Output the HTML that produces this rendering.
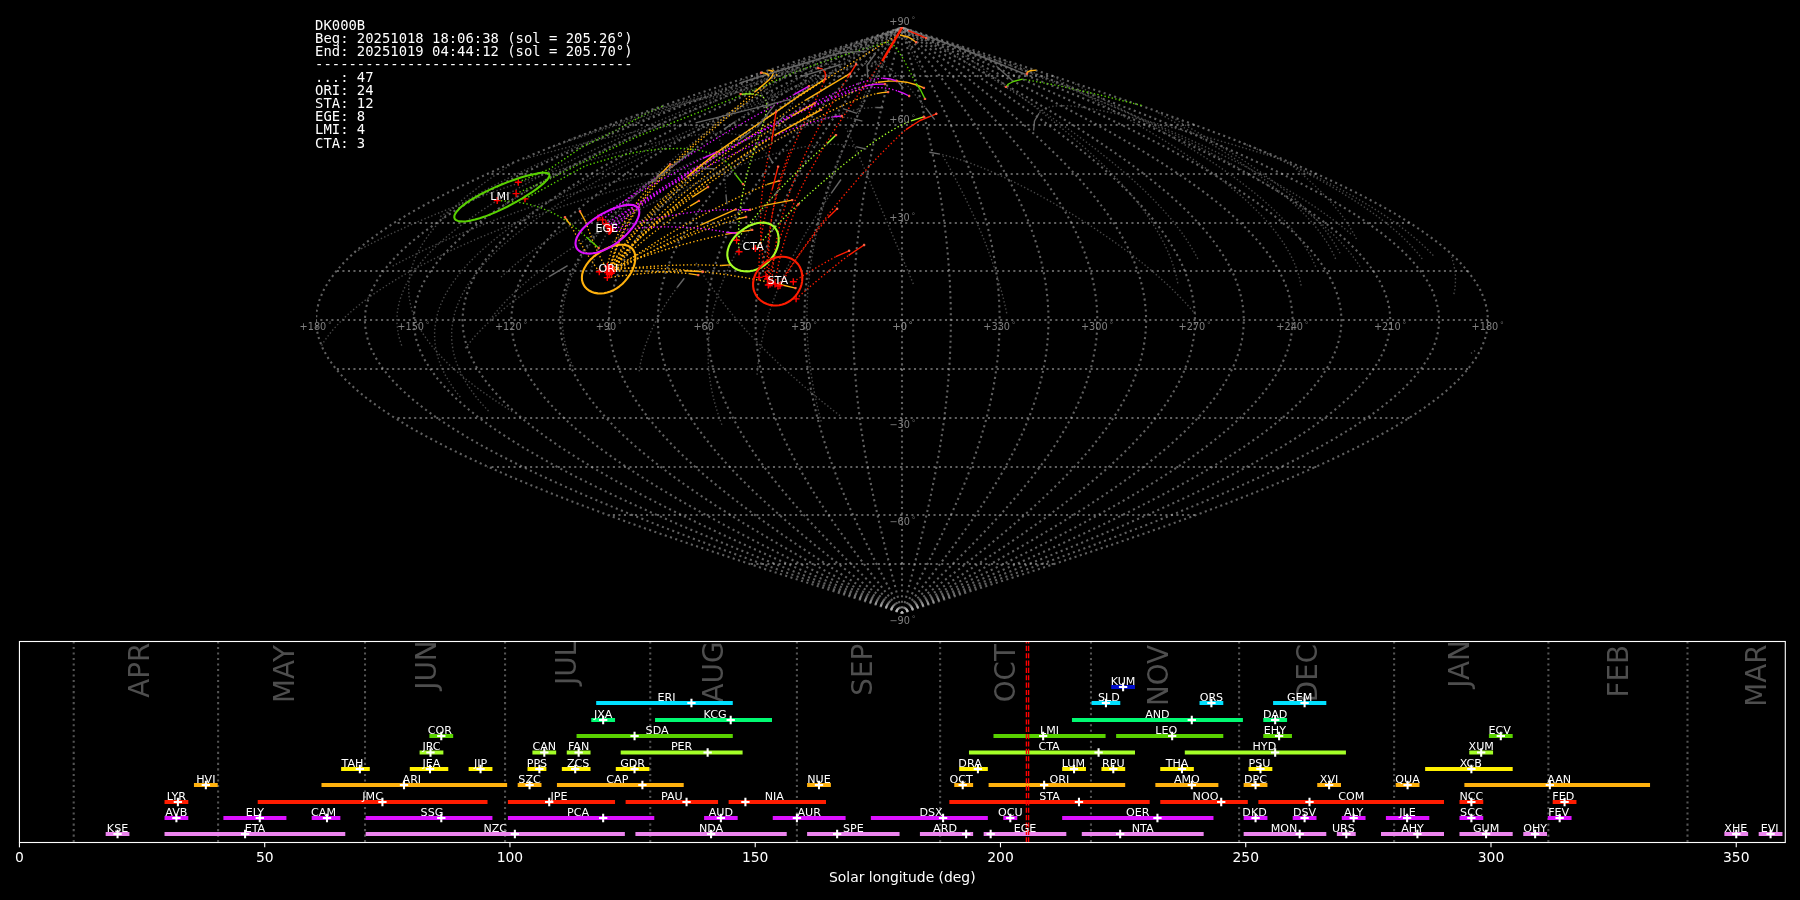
<!DOCTYPE html>
<html><head><meta charset="utf-8"><title>DK000B radiants</title>
<style>html,body{margin:0;padding:0;background:#000;overflow:hidden}svg{display:block;will-change:transform}</style></head>
<body>
<svg width="1800" height="900" viewBox="0 0 1800 900">
<rect width="1800" height="900" fill="#000"/>
<defs><clipPath id="cm"><rect x="315.99" y="26.90" width="1173.12" height="586.59"/></clipPath>
<clipPath id="ca"><rect x="19.45" y="641.50" width="1765.85" height="201.00"/></clipPath></defs>
<g clip-path="url(#cm)" fill="none">
<g stroke="#c0c0c0" stroke-opacity="0.5" stroke-width="2.083" stroke-dasharray="2.083 3.437">
<path d="M902.0 613.0 L902.0 603.2 L902.0 593.5 L902.0 583.7 L902.0 574.0 L902.0 564.2 L902.0 554.4 L902.0 544.7 L902.0 534.9 L902.0 525.2 L902.0 515.4 L902.0 505.6 L902.0 495.9 L902.0 486.1 L902.0 476.4 L902.0 466.6 L902.0 456.8 L902.0 447.1 L902.0 437.3 L902.0 427.6 L902.0 417.8 L902.0 408.0 L902.0 398.3 L902.0 388.5 L902.0 378.8 L902.0 369.0 L902.0 359.2 L902.0 349.5 L902.0 339.7 L902.0 330.0 L902.0 320.2 L902.0 310.4 L902.0 300.7 L902.0 290.9 L902.0 281.2 L902.0 271.4 L902.0 261.6 L902.0 251.9 L902.0 242.1 L902.0 232.4 L902.0 222.6 L902.0 212.8 L902.0 203.1 L902.0 193.3 L902.0 183.6 L902.0 173.8 L902.0 164.0 L902.0 154.3 L902.0 144.5 L902.0 134.8 L902.0 125.0 L902.0 115.2 L902.0 105.5 L902.0 95.7 L902.0 86.0 L902.0 76.2 L902.0 66.4 L902.0 56.7 L902.0 46.9 L902.0 37.2 L902.0 27.4" stroke-dashoffset="0.85"/>
<path d="M902.0 613.0 L899.4 603.2 L896.9 593.5 L894.4 583.7 L891.8 574.0 L889.4 564.2 L886.9 554.4 L884.5 544.7 L882.1 534.9 L879.8 525.2 L877.6 515.4 L875.4 505.6 L873.3 495.9 L871.3 486.1 L869.3 476.4 L867.5 466.6 L865.7 456.8 L864.0 447.1 L862.5 437.3 L861.0 427.6 L859.7 417.8 L858.5 408.0 L857.4 398.3 L856.4 388.5 L855.6 378.8 L854.8 369.0 L854.2 359.2 L853.8 349.5 L853.4 339.7 L853.2 330.0 L853.2 320.2 L853.2 310.4 L853.4 300.7 L853.8 290.9 L854.2 281.2 L854.8 271.4 L855.6 261.6 L856.4 251.9 L857.4 242.1 L858.5 232.4 L859.7 222.6 L861.0 212.8 L862.5 203.1 L864.0 193.3 L865.7 183.6 L867.5 173.8 L869.3 164.0 L871.3 154.3 L873.3 144.5 L875.4 134.8 L877.6 125.0 L879.8 115.2 L882.1 105.5 L884.5 95.7 L886.9 86.0 L889.4 76.2 L891.8 66.4 L894.4 56.7 L896.9 46.9 L899.4 37.2 L902.0 27.4" stroke-dashoffset="0.85"/>
<path d="M902.0 613.0 L896.9 603.2 L891.8 593.5 L886.7 583.7 L881.7 574.0 L876.7 564.2 L871.8 554.4 L867.0 544.7 L862.3 534.9 L857.7 525.2 L853.2 515.4 L848.8 505.6 L844.6 495.9 L840.5 486.1 L836.6 476.4 L832.9 466.6 L829.4 456.8 L826.1 447.1 L823.0 437.3 L820.1 427.6 L817.4 417.8 L815.0 408.0 L812.8 398.3 L810.8 388.5 L809.1 378.8 L807.7 369.0 L806.5 359.2 L805.5 349.5 L804.9 339.7 L804.5 330.0 L804.3 320.2 L804.5 310.4 L804.9 300.7 L805.5 290.9 L806.5 281.2 L807.7 271.4 L809.1 261.6 L810.8 251.9 L812.8 242.1 L815.0 232.4 L817.4 222.6 L820.1 212.8 L823.0 203.1 L826.1 193.3 L829.4 183.6 L832.9 173.8 L836.6 164.0 L840.5 154.3 L844.6 144.5 L848.8 134.8 L853.2 125.0 L857.7 115.2 L862.3 105.5 L867.0 95.7 L871.8 86.0 L876.7 76.2 L881.7 66.4 L886.7 56.7 L891.8 46.9 L896.9 37.2 L902.0 27.4" stroke-dashoffset="0.85"/>
<path d="M902.0 613.0 L894.3 603.2 L886.7 593.5 L879.1 583.7 L871.5 574.0 L864.1 564.2 L856.7 554.4 L849.5 544.7 L842.4 534.9 L835.5 525.2 L828.7 515.4 L822.2 505.6 L815.9 495.9 L809.8 486.1 L804.0 476.4 L798.4 466.6 L793.1 456.8 L788.1 447.1 L783.5 437.3 L779.1 427.6 L775.1 417.8 L771.5 408.0 L768.2 398.3 L765.2 388.5 L762.7 378.8 L760.5 369.0 L758.7 359.2 L757.3 349.5 L756.3 339.7 L755.7 330.0 L755.5 320.2 L755.7 310.4 L756.3 300.7 L757.3 290.9 L758.7 281.2 L760.5 271.4 L762.7 261.6 L765.2 251.9 L768.2 242.1 L771.5 232.4 L775.1 222.6 L779.1 212.8 L783.5 203.1 L788.1 193.3 L793.1 183.6 L798.4 173.8 L804.0 164.0 L809.8 154.3 L815.9 144.5 L822.2 134.8 L828.7 125.0 L835.5 115.2 L842.4 105.5 L849.5 95.7 L856.7 86.0 L864.1 76.2 L871.5 66.4 L879.1 56.7 L886.7 46.9 L894.3 37.2 L902.0 27.4" stroke-dashoffset="0.85"/>
<path d="M902.0 613.0 L891.8 603.2 L881.6 593.5 L871.4 583.7 L861.4 574.0 L851.4 564.2 L841.6 554.4 L832.0 544.7 L822.5 534.9 L813.3 525.2 L804.3 515.4 L795.6 505.6 L787.2 495.9 L779.1 486.1 L771.3 476.4 L763.9 466.6 L756.8 456.8 L750.2 447.1 L744.0 437.3 L738.2 427.6 L732.8 417.8 L728.0 408.0 L723.6 398.3 L719.6 388.5 L716.2 378.8 L713.3 369.0 L710.9 359.2 L709.1 349.5 L707.7 339.7 L706.9 330.0 L706.7 320.2 L706.9 310.4 L707.7 300.7 L709.1 290.9 L710.9 281.2 L713.3 271.4 L716.2 261.6 L719.6 251.9 L723.6 242.1 L728.0 232.4 L732.8 222.6 L738.2 212.8 L744.0 203.1 L750.2 193.3 L756.8 183.6 L763.9 173.8 L771.3 164.0 L779.1 154.3 L787.2 144.5 L795.6 134.8 L804.3 125.0 L813.3 115.2 L822.5 105.5 L832.0 95.7 L841.6 86.0 L851.4 76.2 L861.4 66.4 L871.4 56.7 L881.6 46.9 L891.8 37.2 L902.0 27.4" stroke-dashoffset="0.85"/>
<path d="M902.0 613.0 L889.2 603.2 L876.5 593.5 L863.8 583.7 L851.2 574.0 L838.8 564.2 L826.5 554.4 L814.5 544.7 L802.7 534.9 L791.1 525.2 L779.9 515.4 L769.0 505.6 L758.5 495.9 L748.3 486.1 L738.6 476.4 L729.3 466.6 L720.5 456.8 L712.2 447.1 L704.5 437.3 L697.2 427.6 L690.5 417.8 L684.4 408.0 L678.9 398.3 L674.0 388.5 L669.8 378.8 L666.1 369.0 L663.2 359.2 L660.8 349.5 L659.2 339.7 L658.2 330.0 L657.8 320.2 L658.2 310.4 L659.2 300.7 L660.8 290.9 L663.2 281.2 L666.1 271.4 L669.8 261.6 L674.0 251.9 L678.9 242.1 L684.4 232.4 L690.5 222.6 L697.2 212.8 L704.5 203.1 L712.2 193.3 L720.5 183.6 L729.3 173.8 L738.6 164.0 L748.3 154.3 L758.5 144.5 L769.0 134.8 L779.9 125.0 L791.1 115.2 L802.7 105.5 L814.5 95.7 L826.5 86.0 L838.8 76.2 L851.2 66.4 L863.8 56.7 L876.5 46.9 L889.2 37.2 L902.0 27.4" stroke-dashoffset="0.85"/>
<path d="M902.0 613.0 L886.7 603.2 L871.4 593.5 L856.2 583.7 L841.1 574.0 L826.2 564.2 L811.5 554.4 L797.0 544.7 L782.8 534.9 L769.0 525.2 L755.5 515.4 L742.4 505.6 L729.8 495.9 L717.6 486.1 L705.9 476.4 L694.8 466.6 L684.3 456.8 L674.3 447.1 L665.0 437.3 L656.3 427.6 L648.3 417.8 L640.9 408.0 L634.3 398.3 L628.5 388.5 L623.3 378.8 L619.0 369.0 L615.4 359.2 L612.6 349.5 L610.6 339.7 L609.4 330.0 L609.0 320.2 L609.4 310.4 L610.6 300.7 L612.6 290.9 L615.4 281.2 L619.0 271.4 L623.3 261.6 L628.5 251.9 L634.3 242.1 L640.9 232.4 L648.3 222.6 L656.3 212.8 L665.0 203.1 L674.3 193.3 L684.3 183.6 L694.8 173.8 L705.9 164.0 L717.6 154.3 L729.8 144.5 L742.4 134.8 L755.5 125.0 L769.0 115.2 L782.8 105.5 L797.0 95.7 L811.5 86.0 L826.2 76.2 L841.1 66.4 L856.2 56.7 L871.4 46.9 L886.7 37.2 L902.0 27.4" stroke-dashoffset="0.85"/>
<path d="M902.0 613.0 L884.1 603.2 L866.3 593.5 L848.5 583.7 L830.9 574.0 L813.5 564.2 L796.4 554.4 L779.5 544.7 L763.0 534.9 L746.8 525.2 L731.1 515.4 L715.8 505.6 L701.1 495.9 L686.9 486.1 L673.3 476.4 L660.3 466.6 L648.0 456.8 L636.3 447.1 L625.4 437.3 L615.3 427.6 L606.0 417.8 L597.4 408.0 L589.7 398.3 L582.9 388.5 L576.9 378.8 L571.8 369.0 L567.6 359.2 L564.4 349.5 L562.0 339.7 L560.6 330.0 L560.2 320.2 L560.6 310.4 L562.0 300.7 L564.4 290.9 L567.6 281.2 L571.8 271.4 L576.9 261.6 L582.9 251.9 L589.7 242.1 L597.4 232.4 L606.0 222.6 L615.3 212.8 L625.4 203.1 L636.3 193.3 L648.0 183.6 L660.3 173.8 L673.3 164.0 L686.9 154.3 L701.1 144.5 L715.8 134.8 L731.1 125.0 L746.8 115.2 L763.0 105.5 L779.5 95.7 L796.4 86.0 L813.5 76.2 L830.9 66.4 L848.5 56.7 L866.3 46.9 L884.1 37.2 L902.0 27.4" stroke-dashoffset="0.85"/>
<path d="M902.0 613.0 L881.6 603.2 L861.2 593.5 L840.9 583.7 L820.8 574.0 L800.9 564.2 L781.3 554.4 L762.0 544.7 L743.1 534.9 L724.6 525.2 L706.7 515.4 L689.2 505.6 L672.4 495.9 L656.1 486.1 L640.6 476.4 L625.8 466.6 L611.7 456.8 L598.4 447.1 L585.9 437.3 L574.4 427.6 L563.7 417.8 L553.9 408.0 L545.1 398.3 L537.3 388.5 L530.4 378.8 L524.6 369.0 L519.9 359.2 L516.1 349.5 L513.5 339.7 L511.9 330.0 L511.3 320.2 L511.9 310.4 L513.5 300.7 L516.1 290.9 L519.9 281.2 L524.6 271.4 L530.4 261.6 L537.3 251.9 L545.1 242.1 L553.9 232.4 L563.7 222.6 L574.4 212.8 L585.9 203.1 L598.4 193.3 L611.7 183.6 L625.8 173.8 L640.6 164.0 L656.1 154.3 L672.4 144.5 L689.2 134.8 L706.7 125.0 L724.6 115.2 L743.1 105.5 L762.0 95.7 L781.3 86.0 L800.9 76.2 L820.8 66.4 L840.9 56.7 L861.2 46.9 L881.6 37.2 L902.0 27.4" stroke-dashoffset="0.85"/>
<path d="M902.0 613.0 L879.0 603.2 L856.1 593.5 L833.2 583.7 L810.6 574.0 L788.2 564.2 L766.2 554.4 L744.5 544.7 L723.2 534.9 L702.5 525.2 L682.2 515.4 L662.6 505.6 L643.7 495.9 L625.4 486.1 L607.9 476.4 L591.2 466.6 L575.4 456.8 L560.4 447.1 L546.4 437.3 L533.4 427.6 L521.4 417.8 L510.4 408.0 L500.5 398.3 L491.7 388.5 L484.0 378.8 L477.5 369.0 L472.1 359.2 L467.9 349.5 L464.9 339.7 L463.1 330.0 L462.5 320.2 L463.1 310.4 L464.9 300.7 L467.9 290.9 L472.1 281.2 L477.5 271.4 L484.0 261.6 L491.7 251.9 L500.5 242.1 L510.4 232.4 L521.4 222.6 L533.4 212.8 L546.4 203.1 L560.4 193.3 L575.4 183.6 L591.2 173.8 L607.9 164.0 L625.4 154.3 L643.7 144.5 L662.6 134.8 L682.2 125.0 L702.5 115.2 L723.2 105.5 L744.5 95.7 L766.2 86.0 L788.2 76.2 L810.6 66.4 L833.2 56.7 L856.1 46.9 L879.0 37.2 L902.0 27.4" stroke-dashoffset="0.85"/>
<path d="M902.0 613.0 L876.4 603.2 L851.0 593.5 L825.6 583.7 L800.5 574.0 L775.6 564.2 L751.1 554.4 L727.0 544.7 L703.4 534.9 L680.3 525.2 L657.8 515.4 L636.0 505.6 L615.0 495.9 L594.7 486.1 L575.2 476.4 L556.7 466.6 L539.1 456.8 L522.5 447.1 L506.9 437.3 L492.4 427.6 L479.1 417.8 L466.9 408.0 L455.9 398.3 L446.1 388.5 L437.6 378.8 L430.3 369.0 L424.3 359.2 L419.7 349.5 L416.3 339.7 L414.3 330.0 L413.7 320.2 L414.3 310.4 L416.3 300.7 L419.7 290.9 L424.3 281.2 L430.3 271.4 L437.6 261.6 L446.1 251.9 L455.9 242.1 L466.9 232.4 L479.1 222.6 L492.4 212.8 L506.9 203.1 L522.5 193.3 L539.1 183.6 L556.7 173.8 L575.2 164.0 L594.7 154.3 L615.0 144.5 L636.0 134.8 L657.8 125.0 L680.3 115.2 L703.4 105.5 L727.0 95.7 L751.1 86.0 L775.6 76.2 L800.5 66.4 L825.6 56.7 L851.0 46.9 L876.4 37.2 L902.0 27.4" stroke-dashoffset="0.85"/>
<path d="M902.0 613.0 L873.9 603.2 L845.9 593.5 L818.0 583.7 L790.3 574.0 L763.0 564.2 L736.0 554.4 L709.5 544.7 L683.5 534.9 L658.1 525.2 L633.4 515.4 L609.4 505.6 L586.3 495.9 L563.9 486.1 L542.6 476.4 L522.2 466.6 L502.8 456.8 L484.5 447.1 L467.4 437.3 L451.5 427.6 L436.8 417.8 L423.4 408.0 L411.3 398.3 L400.5 388.5 L391.1 378.8 L383.1 369.0 L376.6 359.2 L371.4 349.5 L367.8 339.7 L365.6 330.0 L364.8 320.2 L365.6 310.4 L367.8 300.7 L371.4 290.9 L376.6 281.2 L383.1 271.4 L391.1 261.6 L400.5 251.9 L411.3 242.1 L423.4 232.4 L436.8 222.6 L451.5 212.8 L467.4 203.1 L484.5 193.3 L502.8 183.6 L522.2 173.8 L542.6 164.0 L563.9 154.3 L586.3 144.5 L609.4 134.8 L633.4 125.0 L658.1 115.2 L683.5 105.5 L709.5 95.7 L736.0 86.0 L763.0 76.2 L790.3 66.4 L818.0 56.7 L845.9 46.9 L873.9 37.2 L902.0 27.4" stroke-dashoffset="0.85"/>
<path d="M902.0 613.0 L871.3 603.2 L840.7 593.5 L810.3 583.7 L780.2 574.0 L750.3 564.2 L720.9 554.4 L692.0 544.7 L663.6 534.9 L636.0 525.2 L609.0 515.4 L582.8 505.6 L557.6 495.9 L533.2 486.1 L509.9 476.4 L487.6 466.6 L466.5 456.8 L446.6 447.1 L427.9 437.3 L410.5 427.6 L394.5 417.8 L379.9 408.0 L366.7 398.3 L354.9 388.5 L344.7 378.8 L336.0 369.0 L328.8 359.2 L323.2 349.5 L319.2 339.7 L316.8 330.0 L316.0 320.2 L316.8 310.4 L319.2 300.7 L323.2 290.9 L328.8 281.2 L336.0 271.4 L344.7 261.6 L354.9 251.9 L366.7 242.1 L379.9 232.4 L394.5 222.6 L410.5 212.8 L427.9 203.1 L446.6 193.3 L466.5 183.6 L487.6 173.8 L509.9 164.0 L533.2 154.3 L557.6 144.5 L582.8 134.8 L609.0 125.0 L636.0 115.2 L663.6 105.5 L692.0 95.7 L720.9 86.0 L750.3 76.2 L780.2 66.4 L810.3 56.7 L840.7 46.9 L871.3 37.2 L902.0 27.4" stroke-dashoffset="0.85"/>
<path d="M902.0 613.0 L932.7 603.2 L963.3 593.5 L993.7 583.7 L1023.8 574.0 L1053.7 564.2 L1083.1 554.4 L1112.0 544.7 L1140.4 534.9 L1168.0 525.2 L1195.0 515.4 L1221.2 505.6 L1246.4 495.9 L1270.8 486.1 L1294.1 476.4 L1316.4 466.6 L1337.5 456.8 L1357.4 447.1 L1376.1 437.3 L1393.5 427.6 L1409.5 417.8 L1424.1 408.0 L1437.3 398.3 L1449.1 388.5 L1459.3 378.8 L1468.0 369.0 L1475.2 359.2 L1480.8 349.5 L1484.8 339.7 L1487.2 330.0 L1488.0 320.2 L1487.2 310.4 L1484.8 300.7 L1480.8 290.9 L1475.2 281.2 L1468.0 271.4 L1459.3 261.6 L1449.1 251.9 L1437.3 242.1 L1424.1 232.4 L1409.5 222.6 L1393.5 212.8 L1376.1 203.1 L1357.4 193.3 L1337.5 183.6 L1316.4 173.8 L1294.1 164.0 L1270.8 154.3 L1246.4 144.5 L1221.2 134.8 L1195.0 125.0 L1168.0 115.2 L1140.4 105.5 L1112.0 95.7 L1083.1 86.0 L1053.7 76.2 L1023.8 66.4 L993.7 56.7 L963.3 46.9 L932.7 37.2 L902.0 27.4" stroke-dashoffset="0.85"/>
<path d="M902.0 613.0 L930.1 603.2 L958.1 593.5 L986.0 583.7 L1013.7 574.0 L1041.0 564.2 L1068.0 554.4 L1094.5 544.7 L1120.5 534.9 L1145.9 525.2 L1170.6 515.4 L1194.6 505.6 L1217.7 495.9 L1240.1 486.1 L1261.4 476.4 L1281.8 466.6 L1301.2 456.8 L1319.5 447.1 L1336.6 437.3 L1352.5 427.6 L1367.2 417.8 L1380.6 408.0 L1392.7 398.3 L1403.5 388.5 L1412.9 378.8 L1420.9 369.0 L1427.4 359.2 L1432.6 349.5 L1436.2 339.7 L1438.4 330.0 L1439.2 320.2 L1438.4 310.4 L1436.2 300.7 L1432.6 290.9 L1427.4 281.2 L1420.9 271.4 L1412.9 261.6 L1403.5 251.9 L1392.7 242.1 L1380.6 232.4 L1367.2 222.6 L1352.5 212.8 L1336.6 203.1 L1319.5 193.3 L1301.2 183.6 L1281.8 173.8 L1261.4 164.0 L1240.1 154.3 L1217.7 144.5 L1194.6 134.8 L1170.6 125.0 L1145.9 115.2 L1120.5 105.5 L1094.5 95.7 L1068.0 86.0 L1041.0 76.2 L1013.7 66.4 L986.0 56.7 L958.1 46.9 L930.1 37.2 L902.0 27.4" stroke-dashoffset="0.85"/>
<path d="M902.0 613.0 L927.6 603.2 L953.0 593.5 L978.4 583.7 L1003.5 574.0 L1028.4 564.2 L1052.9 554.4 L1077.0 544.7 L1100.6 534.9 L1123.7 525.2 L1146.2 515.4 L1168.0 505.6 L1189.0 495.9 L1209.3 486.1 L1228.8 476.4 L1247.3 466.6 L1264.9 456.8 L1281.5 447.1 L1297.1 437.3 L1311.6 427.6 L1324.9 417.8 L1337.1 408.0 L1348.1 398.3 L1357.9 388.5 L1366.4 378.8 L1373.7 369.0 L1379.7 359.2 L1384.3 349.5 L1387.7 339.7 L1389.7 330.0 L1390.3 320.2 L1389.7 310.4 L1387.7 300.7 L1384.3 290.9 L1379.7 281.2 L1373.7 271.4 L1366.4 261.6 L1357.9 251.9 L1348.1 242.1 L1337.1 232.4 L1324.9 222.6 L1311.6 212.8 L1297.1 203.1 L1281.5 193.3 L1264.9 183.6 L1247.3 173.8 L1228.8 164.0 L1209.3 154.3 L1189.0 144.5 L1168.0 134.8 L1146.2 125.0 L1123.7 115.2 L1100.6 105.5 L1077.0 95.7 L1052.9 86.0 L1028.4 76.2 L1003.5 66.4 L978.4 56.7 L953.0 46.9 L927.6 37.2 L902.0 27.4" stroke-dashoffset="0.85"/>
<path d="M902.0 613.0 L925.0 603.2 L947.9 593.5 L970.8 583.7 L993.4 574.0 L1015.8 564.2 L1037.8 554.4 L1059.5 544.7 L1080.8 534.9 L1101.5 525.2 L1121.8 515.4 L1141.4 505.6 L1160.3 495.9 L1178.6 486.1 L1196.1 476.4 L1212.8 466.6 L1228.6 456.8 L1243.6 447.1 L1257.6 437.3 L1270.6 427.6 L1282.6 417.8 L1293.6 408.0 L1303.5 398.3 L1312.3 388.5 L1320.0 378.8 L1326.5 369.0 L1331.9 359.2 L1336.1 349.5 L1339.1 339.7 L1340.9 330.0 L1341.5 320.2 L1340.9 310.4 L1339.1 300.7 L1336.1 290.9 L1331.9 281.2 L1326.5 271.4 L1320.0 261.6 L1312.3 251.9 L1303.5 242.1 L1293.6 232.4 L1282.6 222.6 L1270.6 212.8 L1257.6 203.1 L1243.6 193.3 L1228.6 183.6 L1212.8 173.8 L1196.1 164.0 L1178.6 154.3 L1160.3 144.5 L1141.4 134.8 L1121.8 125.0 L1101.5 115.2 L1080.8 105.5 L1059.5 95.7 L1037.8 86.0 L1015.8 76.2 L993.4 66.4 L970.8 56.7 L947.9 46.9 L925.0 37.2 L902.0 27.4" stroke-dashoffset="0.85"/>
<path d="M902.0 613.0 L922.4 603.2 L942.8 593.5 L963.1 583.7 L983.2 574.0 L1003.1 564.2 L1022.7 554.4 L1042.0 544.7 L1060.9 534.9 L1079.4 525.2 L1097.3 515.4 L1114.8 505.6 L1131.6 495.9 L1147.9 486.1 L1163.4 476.4 L1178.2 466.6 L1192.3 456.8 L1205.6 447.1 L1218.1 437.3 L1229.6 427.6 L1240.3 417.8 L1250.1 408.0 L1258.9 398.3 L1266.7 388.5 L1273.6 378.8 L1279.4 369.0 L1284.1 359.2 L1287.9 349.5 L1290.5 339.7 L1292.1 330.0 L1292.7 320.2 L1292.1 310.4 L1290.5 300.7 L1287.9 290.9 L1284.1 281.2 L1279.4 271.4 L1273.6 261.6 L1266.7 251.9 L1258.9 242.1 L1250.1 232.4 L1240.3 222.6 L1229.6 212.8 L1218.1 203.1 L1205.6 193.3 L1192.3 183.6 L1178.2 173.8 L1163.4 164.0 L1147.9 154.3 L1131.6 144.5 L1114.8 134.8 L1097.3 125.0 L1079.4 115.2 L1060.9 105.5 L1042.0 95.7 L1022.7 86.0 L1003.1 76.2 L983.2 66.4 L963.1 56.7 L942.8 46.9 L922.4 37.2 L902.0 27.4" stroke-dashoffset="0.85"/>
<path d="M902.0 613.0 L919.9 603.2 L937.7 593.5 L955.5 583.7 L973.1 574.0 L990.5 564.2 L1007.6 554.4 L1024.5 544.7 L1041.0 534.9 L1057.2 525.2 L1072.9 515.4 L1088.2 505.6 L1102.9 495.9 L1117.1 486.1 L1130.7 476.4 L1143.7 466.6 L1156.0 456.8 L1167.7 447.1 L1178.6 437.3 L1188.7 427.6 L1198.0 417.8 L1206.6 408.0 L1214.3 398.3 L1221.1 388.5 L1227.1 378.8 L1232.2 369.0 L1236.4 359.2 L1239.6 349.5 L1242.0 339.7 L1243.4 330.0 L1243.8 320.2 L1243.4 310.4 L1242.0 300.7 L1239.6 290.9 L1236.4 281.2 L1232.2 271.4 L1227.1 261.6 L1221.1 251.9 L1214.3 242.1 L1206.6 232.4 L1198.0 222.6 L1188.7 212.8 L1178.6 203.1 L1167.7 193.3 L1156.0 183.6 L1143.7 173.8 L1130.7 164.0 L1117.1 154.3 L1102.9 144.5 L1088.2 134.8 L1072.9 125.0 L1057.2 115.2 L1041.0 105.5 L1024.5 95.7 L1007.6 86.0 L990.5 76.2 L973.1 66.4 L955.5 56.7 L937.7 46.9 L919.9 37.2 L902.0 27.4" stroke-dashoffset="0.85"/>
<path d="M902.0 613.0 L917.3 603.2 L932.6 593.5 L947.8 583.7 L962.9 574.0 L977.8 564.2 L992.5 554.4 L1007.0 544.7 L1021.2 534.9 L1035.0 525.2 L1048.5 515.4 L1061.6 505.6 L1074.2 495.9 L1086.4 486.1 L1098.1 476.4 L1109.2 466.6 L1119.7 456.8 L1129.7 447.1 L1139.0 437.3 L1147.7 427.6 L1155.7 417.8 L1163.1 408.0 L1169.7 398.3 L1175.5 388.5 L1180.7 378.8 L1185.0 369.0 L1188.6 359.2 L1191.4 349.5 L1193.4 339.7 L1194.6 330.0 L1195.0 320.2 L1194.6 310.4 L1193.4 300.7 L1191.4 290.9 L1188.6 281.2 L1185.0 271.4 L1180.7 261.6 L1175.5 251.9 L1169.7 242.1 L1163.1 232.4 L1155.7 222.6 L1147.7 212.8 L1139.0 203.1 L1129.7 193.3 L1119.7 183.6 L1109.2 173.8 L1098.1 164.0 L1086.4 154.3 L1074.2 144.5 L1061.6 134.8 L1048.5 125.0 L1035.0 115.2 L1021.2 105.5 L1007.0 95.7 L992.5 86.0 L977.8 76.2 L962.9 66.4 L947.8 56.7 L932.6 46.9 L917.3 37.2 L902.0 27.4" stroke-dashoffset="0.85"/>
<path d="M902.0 613.0 L914.8 603.2 L927.5 593.5 L940.2 583.7 L952.8 574.0 L965.2 564.2 L977.5 554.4 L989.5 544.7 L1001.3 534.9 L1012.9 525.2 L1024.1 515.4 L1035.0 505.6 L1045.5 495.9 L1055.7 486.1 L1065.4 476.4 L1074.7 466.6 L1083.5 456.8 L1091.8 447.1 L1099.5 437.3 L1106.8 427.6 L1113.5 417.8 L1119.6 408.0 L1125.1 398.3 L1130.0 388.5 L1134.2 378.8 L1137.9 369.0 L1140.8 359.2 L1143.2 349.5 L1144.8 339.7 L1145.8 330.0 L1146.2 320.2 L1145.8 310.4 L1144.8 300.7 L1143.2 290.9 L1140.8 281.2 L1137.9 271.4 L1134.2 261.6 L1130.0 251.9 L1125.1 242.1 L1119.6 232.4 L1113.5 222.6 L1106.8 212.8 L1099.5 203.1 L1091.8 193.3 L1083.5 183.6 L1074.7 173.8 L1065.4 164.0 L1055.7 154.3 L1045.5 144.5 L1035.0 134.8 L1024.1 125.0 L1012.9 115.2 L1001.3 105.5 L989.5 95.7 L977.5 86.0 L965.2 76.2 L952.8 66.4 L940.2 56.7 L927.5 46.9 L914.8 37.2 L902.0 27.4" stroke-dashoffset="0.85"/>
<path d="M902.0 613.0 L912.2 603.2 L922.4 593.5 L932.6 583.7 L942.6 574.0 L952.6 564.2 L962.4 554.4 L972.0 544.7 L981.5 534.9 L990.7 525.2 L999.7 515.4 L1008.4 505.6 L1016.8 495.9 L1024.9 486.1 L1032.7 476.4 L1040.1 466.6 L1047.2 456.8 L1053.8 447.1 L1060.0 437.3 L1065.8 427.6 L1071.2 417.8 L1076.0 408.0 L1080.4 398.3 L1084.4 388.5 L1087.8 378.8 L1090.7 369.0 L1093.1 359.2 L1094.9 349.5 L1096.3 339.7 L1097.1 330.0 L1097.3 320.2 L1097.1 310.4 L1096.3 300.7 L1094.9 290.9 L1093.1 281.2 L1090.7 271.4 L1087.8 261.6 L1084.4 251.9 L1080.4 242.1 L1076.0 232.4 L1071.2 222.6 L1065.8 212.8 L1060.0 203.1 L1053.8 193.3 L1047.2 183.6 L1040.1 173.8 L1032.7 164.0 L1024.9 154.3 L1016.8 144.5 L1008.4 134.8 L999.7 125.0 L990.7 115.2 L981.5 105.5 L972.0 95.7 L962.4 86.0 L952.6 76.2 L942.6 66.4 L932.6 56.7 L922.4 46.9 L912.2 37.2 L902.0 27.4" stroke-dashoffset="0.85"/>
<path d="M902.0 613.0 L909.7 603.2 L917.3 593.5 L924.9 583.7 L932.5 574.0 L939.9 564.2 L947.3 554.4 L954.5 544.7 L961.6 534.9 L968.5 525.2 L975.3 515.4 L981.8 505.6 L988.1 495.9 L994.2 486.1 L1000.0 476.4 L1005.6 466.6 L1010.9 456.8 L1015.9 447.1 L1020.5 437.3 L1024.9 427.6 L1028.9 417.8 L1032.5 408.0 L1035.8 398.3 L1038.8 388.5 L1041.3 378.8 L1043.5 369.0 L1045.3 359.2 L1046.7 349.5 L1047.7 339.7 L1048.3 330.0 L1048.5 320.2 L1048.3 310.4 L1047.7 300.7 L1046.7 290.9 L1045.3 281.2 L1043.5 271.4 L1041.3 261.6 L1038.8 251.9 L1035.8 242.1 L1032.5 232.4 L1028.9 222.6 L1024.9 212.8 L1020.5 203.1 L1015.9 193.3 L1010.9 183.6 L1005.6 173.8 L1000.0 164.0 L994.2 154.3 L988.1 144.5 L981.8 134.8 L975.3 125.0 L968.5 115.2 L961.6 105.5 L954.5 95.7 L947.3 86.0 L939.9 76.2 L932.5 66.4 L924.9 56.7 L917.3 46.9 L909.7 37.2 L902.0 27.4" stroke-dashoffset="0.85"/>
<path d="M902.0 613.0 L907.1 603.2 L912.2 593.5 L917.3 583.7 L922.3 574.0 L927.3 564.2 L932.2 554.4 L937.0 544.7 L941.7 534.9 L946.3 525.2 L950.8 515.4 L955.2 505.6 L959.4 495.9 L963.5 486.1 L967.4 476.4 L971.1 466.6 L974.6 456.8 L977.9 447.1 L981.0 437.3 L983.9 427.6 L986.6 417.8 L989.0 408.0 L991.2 398.3 L993.2 388.5 L994.9 378.8 L996.3 369.0 L997.5 359.2 L998.5 349.5 L999.1 339.7 L999.5 330.0 L999.7 320.2 L999.5 310.4 L999.1 300.7 L998.5 290.9 L997.5 281.2 L996.3 271.4 L994.9 261.6 L993.2 251.9 L991.2 242.1 L989.0 232.4 L986.6 222.6 L983.9 212.8 L981.0 203.1 L977.9 193.3 L974.6 183.6 L971.1 173.8 L967.4 164.0 L963.5 154.3 L959.4 144.5 L955.2 134.8 L950.8 125.0 L946.3 115.2 L941.7 105.5 L937.0 95.7 L932.2 86.0 L927.3 76.2 L922.3 66.4 L917.3 56.7 L912.2 46.9 L907.1 37.2 L902.0 27.4" stroke-dashoffset="0.85"/>
<path d="M902.0 613.0 L904.6 603.2 L907.1 593.5 L909.6 583.7 L912.2 574.0 L914.6 564.2 L917.1 554.4 L919.5 544.7 L921.9 534.9 L924.2 525.2 L926.4 515.4 L928.6 505.6 L930.7 495.9 L932.7 486.1 L934.7 476.4 L936.5 466.6 L938.3 456.8 L940.0 447.1 L941.5 437.3 L943.0 427.6 L944.3 417.8 L945.5 408.0 L946.6 398.3 L947.6 388.5 L948.4 378.8 L949.2 369.0 L949.8 359.2 L950.2 349.5 L950.6 339.7 L950.8 330.0 L950.8 320.2 L950.8 310.4 L950.6 300.7 L950.2 290.9 L949.8 281.2 L949.2 271.4 L948.4 261.6 L947.6 251.9 L946.6 242.1 L945.5 232.4 L944.3 222.6 L943.0 212.8 L941.5 203.1 L940.0 193.3 L938.3 183.6 L936.5 173.8 L934.7 164.0 L932.7 154.3 L930.7 144.5 L928.6 134.8 L926.4 125.0 L924.2 115.2 L921.9 105.5 L919.5 95.7 L917.1 86.0 L914.6 76.2 L912.2 66.4 L909.6 56.7 L907.1 46.9 L904.6 37.2 L902.0 27.4" stroke-dashoffset="0.85"/>
<path d="M902.00 564.00 L750.33 564.00"/>
<path d="M1053.67 564.00 L902.00 564.00"/>
<path d="M902.00 515.00 L609.00 515.00"/>
<path d="M1195.00 515.00 L902.00 515.00"/>
<path d="M902.00 467.00 L487.63 467.00"/>
<path d="M1316.37 467.00 L902.00 467.00"/>
<path d="M902.00 418.00 L394.50 418.00"/>
<path d="M1409.50 418.00 L902.00 418.00"/>
<path d="M902.00 369.00 L335.96 369.00"/>
<path d="M1468.04 369.00 L902.00 369.00"/>
<path d="M902.00 320.00 L315.99 320.00"/>
<path d="M1488.01 320.00 L902.00 320.00"/>
<path d="M902.00 271.00 L335.96 271.00"/>
<path d="M1468.04 271.00 L902.00 271.00"/>
<path d="M902.00 223.00 L394.50 223.00"/>
<path d="M1409.50 223.00 L902.00 223.00"/>
<path d="M902.00 174.00 L487.63 174.00"/>
<path d="M1316.37 174.00 L902.00 174.00"/>
<path d="M902.00 125.00 L609.00 125.00"/>
<path d="M1195.00 125.00 L902.00 125.00"/>
<path d="M902.00 76.00 L750.33 76.00"/>
<path d="M1053.67 76.00 L902.00 76.00"/>
</g>
<path d="M609.9 271.8 L610.2 269.8 L610.5 267.9 L610.9 266.0 L611.3 264.1 L611.8 262.1 L612.2 260.2 L612.7 258.3 L613.3 256.4 L613.8 254.4 L614.4 252.5 L615.0 250.6 L615.7 248.7 L616.4 246.7 L617.1 244.8 L617.8 242.9 L618.6 241.0 L619.4 239.0 L620.2 237.1 L621.1 235.2 L622.0 233.3 L622.9 231.4 L623.9 229.4 L624.8 227.5 L625.8 225.6 L626.9 223.7 L627.9 221.8 L629.0 219.9 L630.1 218.0 L631.3 216.1 L632.5 214.1 L633.7 212.2 L634.9 210.3 L636.1 208.4 L637.4 206.5 L638.7 204.6 L640.1 202.7 L641.4 200.8 L642.8 198.9 L644.2 197.0 L645.6 195.1 L647.1 193.2 L648.6 191.3 L650.1 189.4 L651.6 187.6 L653.2 185.7 L654.8 183.8 L656.4 181.9 L658.0 180.0 L659.6 178.1 L661.3 176.3 L663.0 174.4 L664.7 172.5 L666.4 170.7 L668.2 168.8 L669.9 166.9 L671.7 165.1 L673.5 163.2 L675.4 161.4 L677.2 159.5 L679.1 157.7 L680.9 155.8 L682.8 154.0 L684.7 152.1 L686.7 150.3 L688.6 148.5 L690.5 146.7 L692.5 144.8 L694.5 143.0 L696.5 141.2 L698.5 139.4 L700.5 137.6 L702.5 135.8 L704.5 134.1 L706.5 132.3 L708.6 130.5 L710.6 128.7 L712.7 127.0 L714.7 125.2 L716.8 123.5 L718.8 121.8 L720.9 120.1 L722.9 118.4 L724.9 116.7 L727.0 115.0 L729.0 113.3 L731.0 111.6 L733.0 110.0 L735.0 108.4 L737.0 106.8 L738.9 105.2 L740.8 103.6 L742.7 102.0 L744.6 100.5 L746.4 98.9 L748.2 97.4 L750.0 96.0 L751.7 94.5 L753.4 93.1 L755.0 91.7" stroke="#ffb10d" stroke-opacity="1.0" stroke-width="1.389" stroke-dasharray="1.389 2.292"/>
<path d="M609.9 269.9 L610.4 268.9 L610.8 268.0 L611.3 267.0 L611.8 266.1 L612.2 265.1 L612.7 264.2 L613.2 263.2 L613.7 262.3 L614.2 261.3 L614.7 260.4 L615.2 259.5 L615.8 258.5 L616.3 257.6 L616.8 256.6 L617.4 255.7 L617.9 254.7 L618.5 253.8 L619.1 252.8 L619.6 251.9 L620.2 250.9 L620.8 250.0 L621.4 249.0 L622.0 248.1 L622.6 247.1 L623.2 246.2 L623.9 245.2 L624.5 244.3 L625.2 243.4 L625.8 242.4 L626.5 241.5 L627.1 240.5 L627.8 239.6 L628.5 238.6 L629.2 237.7 L629.8 236.7 L630.5 235.8 L631.2 234.8 L632.0 233.9 L632.7 232.9 L633.4 232.0 L634.1 231.0 L634.9 230.1 L635.6 229.1 L636.4 228.2 L637.1 227.2 L637.9 226.3 L638.7 225.4 L639.5 224.4 L640.3 223.5 L641.0 222.5 L641.8 221.6 L642.7 220.6 L643.5 219.7 L644.3 218.7 L645.1 217.8 L646.0 216.8 L646.8 215.9 L647.6 214.9 L648.5 214.0 L649.4 213.0 L650.2 212.1 L651.1 211.1 L652.0 210.2 L652.9 209.2 L653.8 208.3 L654.7 207.4 L655.6 206.4 L656.5 205.5 L657.4 204.5 L658.3 203.6 L659.3 202.6 L660.2 201.7 L661.1 200.7 L662.1 199.8 L663.1 198.8 L664.0 197.9 L665.0 196.9 L666.0 196.0 L666.9 195.0 L667.9 194.1 L668.9 193.1 L669.9 192.2 L670.9 191.3 L671.9 190.3 L673.0 189.4 L674.0 188.4 L675.0 187.5 L676.0 186.5 L677.1 185.6 L678.1 184.6 L679.2 183.7 L680.2 182.7 L681.3 181.8 L682.4 180.8 L683.4 179.9 L684.5 178.9 L685.6 178.0 L686.7 177.0 L687.8 176.1" stroke="#ffb10d" stroke-opacity="1.0" stroke-width="1.389" stroke-dasharray="1.389 2.292"/>
<path d="M608.7 270.1 L609.7 268.4 L610.7 266.6 L611.7 264.9 L612.8 263.2 L613.9 261.4 L615.0 259.7 L616.1 258.0 L617.3 256.2 L618.5 254.5 L619.7 252.8 L620.9 251.0 L622.2 249.3 L623.5 247.6 L624.8 245.8 L626.1 244.1 L627.5 242.4 L628.8 240.6 L630.2 238.9 L631.7 237.2 L633.1 235.4 L634.6 233.7 L636.1 232.0 L637.6 230.2 L639.1 228.5 L640.7 226.8 L642.3 225.0 L643.9 223.3 L645.5 221.6 L647.2 219.8 L648.9 218.1 L650.6 216.4 L652.3 214.7 L654.0 212.9 L655.8 211.2 L657.6 209.5 L659.4 207.7 L661.2 206.0 L663.0 204.3 L664.9 202.5 L666.8 200.8 L668.7 199.1 L670.6 197.4 L672.5 195.6 L674.5 193.9 L676.5 192.2 L678.5 190.5 L680.5 188.7 L682.5 187.0 L684.6 185.3 L686.7 183.5 L688.8 181.8 L690.9 180.1 L693.0 178.4 L695.2 176.7 L697.3 174.9 L699.5 173.2 L701.7 171.5 L703.9 169.8 L706.1 168.0 L708.4 166.3 L710.6 164.6 L712.9 162.9 L715.2 161.2 L717.5 159.4 L719.8 157.7 L722.2 156.0 L724.5 154.3 L726.9 152.6 L729.3 150.9 L731.7 149.2 L734.1 147.4 L736.5 145.7 L738.9 144.0 L741.4 142.3 L743.8 140.6 L746.3 138.9 L748.8 137.2 L751.3 135.5 L753.8 133.8 L756.3 132.1 L758.8 130.4 L761.3 128.7 L763.9 127.0 L766.4 125.3 L769.0 123.6 L771.6 121.9 L774.1 120.2 L776.7 118.5 L779.3 116.8 L781.9 115.1 L784.5 113.5 L787.2 111.8 L789.8 110.1 L792.4 108.4 L795.0 106.8 L797.7 105.1 L800.3 103.4 L803.0 101.8 L805.6 100.1" stroke="#ffb10d" stroke-opacity="1.0" stroke-width="1.389" stroke-dasharray="1.389 2.292"/>
<path d="M612.4 271.6 L613.3 270.0 L614.3 268.4 L615.4 266.8 L616.4 265.2 L617.5 263.6 L618.6 262.0 L619.7 260.4 L620.8 258.8 L621.9 257.2 L623.1 255.6 L624.3 254.0 L625.5 252.4 L626.7 250.8 L628.0 249.2 L629.3 247.6 L630.6 246.0 L631.9 244.4 L633.2 242.8 L634.5 241.2 L635.9 239.6 L637.3 238.0 L638.7 236.4 L640.1 234.8 L641.6 233.2 L643.0 231.6 L644.5 230.0 L646.0 228.4 L647.6 226.8 L649.1 225.2 L650.6 223.6 L652.2 222.0 L653.8 220.4 L655.4 218.8 L657.1 217.3 L658.7 215.7 L660.4 214.1 L662.0 212.5 L663.7 210.9 L665.5 209.3 L667.2 207.7 L668.9 206.1 L670.7 204.5 L672.5 202.9 L674.3 201.3 L676.1 199.8 L677.9 198.2 L679.8 196.6 L681.6 195.0 L683.5 193.4 L685.4 191.8 L687.3 190.2 L689.2 188.7 L691.2 187.1 L693.1 185.5 L695.1 183.9 L697.1 182.3 L699.1 180.8 L701.1 179.2 L703.1 177.6 L705.1 176.0 L707.2 174.4 L709.2 172.9 L711.3 171.3 L713.4 169.7 L715.5 168.1 L717.6 166.6 L719.7 165.0 L721.8 163.4 L724.0 161.9 L726.1 160.3 L728.3 158.7 L730.5 157.2 L732.7 155.6 L734.9 154.0 L737.1 152.5 L739.3 150.9 L741.5 149.4 L743.8 147.8 L746.0 146.3 L748.3 144.7 L750.5 143.2 L752.8 141.6 L755.1 140.1 L757.4 138.5 L759.7 137.0 L762.0 135.4 L764.3 133.9 L766.6 132.4 L768.9 130.8 L771.2 129.3 L773.6 127.8 L775.9 126.3 L778.3 124.7 L780.6 123.2 L783.0 121.7 L785.3 120.2 L787.7 118.7 L790.0 117.2 L792.4 115.7" stroke="#ffb10d" stroke-opacity="1.0" stroke-width="1.389" stroke-dasharray="1.389 2.292"/>
<path d="M612.2 271.2 L613.2 269.8 L614.2 268.4 L615.3 266.9 L616.3 265.5 L617.4 264.1 L618.4 262.7 L619.5 261.3 L620.7 259.9 L621.8 258.5 L622.9 257.1 L624.1 255.7 L625.3 254.3 L626.4 252.9 L627.7 251.4 L628.9 250.0 L630.1 248.6 L631.4 247.2 L632.6 245.8 L633.9 244.4 L635.2 243.0 L636.5 241.6 L637.8 240.2 L639.2 238.8 L640.5 237.4 L641.9 236.0 L643.3 234.6 L644.7 233.2 L646.1 231.8 L647.5 230.4 L649.0 229.0 L650.4 227.6 L651.9 226.2 L653.4 224.8 L654.9 223.4 L656.4 222.0 L657.9 220.6 L659.5 219.2 L661.0 217.8 L662.6 216.4 L664.1 215.0 L665.7 213.6 L667.3 212.2 L668.9 210.8 L670.6 209.5 L672.2 208.1 L673.9 206.7 L675.5 205.3 L677.2 203.9 L678.9 202.5 L680.6 201.1 L682.3 199.7 L684.0 198.4 L685.7 197.0 L687.5 195.6 L689.2 194.2 L691.0 192.8 L692.8 191.5 L694.5 190.1 L696.3 188.7 L698.1 187.3 L700.0 186.0 L701.8 184.6 L703.6 183.2 L705.5 181.8 L707.3 180.5 L709.2 179.1 L711.0 177.7 L712.9 176.4 L714.8 175.0 L716.7 173.6 L718.6 172.3 L720.5 170.9 L722.4 169.6 L724.4 168.2 L726.3 166.9 L728.2 165.5 L730.2 164.2 L732.2 162.8 L734.1 161.5 L736.1 160.1 L738.1 158.8 L740.1 157.4 L742.0 156.1 L744.0 154.8 L746.0 153.4 L748.0 152.1 L750.1 150.8 L752.1 149.5 L754.1 148.1 L756.1 146.8 L758.1 145.5 L760.2 144.2 L762.2 142.9 L764.3 141.6 L766.3 140.3 L768.3 139.0 L770.4 137.7 L772.4 136.4 L774.5 135.1" stroke="#ffb10d" stroke-opacity="1.0" stroke-width="1.389" stroke-dasharray="1.389 2.292"/>
<path d="M611.1 271.0 L612.6 268.9 L614.3 266.7 L615.9 264.5 L617.6 262.3 L619.4 260.2 L621.1 258.0 L622.9 255.8 L624.8 253.7 L626.7 251.5 L628.6 249.3 L630.6 247.2 L632.6 245.0 L634.6 242.9 L636.7 240.7 L638.8 238.5 L640.9 236.4 L643.1 234.2 L645.3 232.1 L647.5 229.9 L649.8 227.8 L652.1 225.6 L654.4 223.5 L656.8 221.3 L659.2 219.2 L661.6 217.0 L664.1 214.9 L666.5 212.8 L669.1 210.6 L671.6 208.5 L674.2 206.3 L676.8 204.2 L679.4 202.1 L682.1 200.0 L684.8 197.8 L687.5 195.7 L690.2 193.6 L693.0 191.5 L695.7 189.4 L698.5 187.2 L701.4 185.1 L704.2 183.0 L707.1 180.9 L710.0 178.8 L712.9 176.7 L715.9 174.6 L718.8 172.6 L721.8 170.5 L724.8 168.4 L727.8 166.3 L730.8 164.3 L733.9 162.2 L736.9 160.1 L740.0 158.1 L743.1 156.0 L746.2 154.0 L749.3 152.0 L752.4 149.9 L755.5 147.9 L758.7 145.9 L761.8 143.9 L765.0 141.9 L768.1 139.9 L771.3 138.0 L774.5 136.0 L777.6 134.0 L780.8 132.1 L784.0 130.2 L787.2 128.2 L790.3 126.3 L793.5 124.4 L796.7 122.6 L799.8 120.7 L803.0 118.9 L806.2 117.0 L809.3 115.2 L812.4 113.4 L815.5 111.7 L818.6 109.9 L821.7 108.2 L824.8 106.5 L827.9 104.8 L830.9 103.2 L833.9 101.6 L836.9 100.0 L839.8 98.5 L842.8 97.0 L845.7 95.5 L848.5 94.1 L851.4 92.7 L854.2 91.4 L857.0 90.1 L859.7 88.9 L862.4 87.7 L865.1 86.6 L867.7 85.6 L870.3 84.6 L872.8 83.8 L875.3 82.9 L877.8 82.2" stroke="#ffb10d" stroke-opacity="1.0" stroke-width="1.389" stroke-dasharray="1.389 2.292"/>
<path d="M607.4 272.6 L609.1 270.4 L610.8 268.3 L612.6 266.1 L614.4 264.0 L616.3 261.8 L618.2 259.7 L620.1 257.6 L622.1 255.4 L624.1 253.3 L626.2 251.1 L628.2 249.0 L630.4 246.9 L632.5 244.7 L634.7 242.6 L636.9 240.5 L639.2 238.4 L641.4 236.2 L643.8 234.1 L646.1 232.0 L648.5 229.9 L650.9 227.7 L653.3 225.6 L655.8 223.5 L658.3 221.4 L660.9 219.3 L663.4 217.2 L666.0 215.1 L668.6 213.0 L671.3 210.9 L673.9 208.8 L676.6 206.7 L679.4 204.6 L682.1 202.6 L684.9 200.5 L687.7 198.4 L690.5 196.3 L693.3 194.3 L696.2 192.2 L699.1 190.1 L702.0 188.1 L704.9 186.0 L707.8 184.0 L710.8 182.0 L713.8 179.9 L716.8 177.9 L719.8 175.9 L722.8 173.9 L725.9 171.8 L728.9 169.8 L732.0 167.8 L735.1 165.9 L738.2 163.9 L741.3 161.9 L744.4 159.9 L747.5 158.0 L750.6 156.0 L753.7 154.1 L756.9 152.2 L760.0 150.3 L763.2 148.4 L766.3 146.5 L769.5 144.6 L772.7 142.7 L775.8 140.9 L779.0 139.0 L782.1 137.2 L785.3 135.4 L788.4 133.6 L791.5 131.8 L794.7 130.1 L797.8 128.3 L800.9 126.6 L804.0 124.9 L807.1 123.3 L810.2 121.6 L813.2 120.0 L816.3 118.4 L819.3 116.8 L822.3 115.3 L825.3 113.8 L828.2 112.3 L831.2 110.9 L834.1 109.5 L837.0 108.1 L839.8 106.8 L842.7 105.5 L845.5 104.2 L848.2 103.0 L851.0 101.9 L853.7 100.8 L856.4 99.8 L859.0 98.8 L861.6 97.8 L864.2 97.0 L866.8 96.2 L869.3 95.4 L871.8 94.7 L874.3 94.1 L876.7 93.6" stroke="#ffb10d" stroke-opacity="1.0" stroke-width="1.389" stroke-dasharray="1.389 2.292"/>
<path d="M611.3 271.7 L612.4 269.3 L613.6 266.8 L614.8 264.4 L616.1 261.9 L617.5 259.5 L618.9 257.0 L620.3 254.6 L621.8 252.2 L623.3 249.7 L624.9 247.3 L626.5 244.8 L628.2 242.4 L629.9 239.9 L631.7 237.5 L633.5 235.0 L635.4 232.6 L637.3 230.1 L639.3 227.7 L641.3 225.2 L643.3 222.8 L645.4 220.3 L647.6 217.9 L649.7 215.4 L652.0 213.0 L654.2 210.5 L656.5 208.1 L658.9 205.6 L661.3 203.2 L663.7 200.7 L666.2 198.3 L668.7 195.8 L671.3 193.4 L673.9 190.9 L676.5 188.5 L679.2 186.0 L681.9 183.6 L684.7 181.1 L687.5 178.7 L690.3 176.2 L693.1 173.8 L696.0 171.3 L699.0 168.9 L702.0 166.4 L705.0 164.0 L708.0 161.6 L711.1 159.1 L714.2 156.7 L717.3 154.2 L720.5 151.8 L723.7 149.3 L726.9 146.9 L730.2 144.4 L733.4 142.0 L736.8 139.5 L740.1 137.1 L743.5 134.6 L746.9 132.2 L750.3 129.8 L753.8 127.3 L757.2 124.9 L760.7 122.4 L764.3 120.0 L767.8 117.5 L771.4 115.1 L775.0 112.6 L778.6 110.2 L782.2 107.8 L785.9 105.3 L789.5 102.9 L793.2 100.4 L796.9 98.0 L800.7 95.6 L804.4 93.1 L808.2 90.7 L811.9 88.3 L815.7 85.8 L819.5 83.4 L823.3 81.0 L827.1 78.6 L831.0 76.1 L834.8 73.7 L838.6 71.3 L842.5 68.9 L846.3 66.5 L850.2 64.1 L854.0 61.7 L857.9 59.3 L861.7 56.9 L865.5 54.5 L869.3 52.2 L873.1 49.9 L876.9 47.6 L880.6 45.3 L884.2 43.1 L887.8 41.0 L891.2 39.0 L894.4 37.3 L897.3 35.9 L900.0 35.0" stroke="#ffb10d" stroke-opacity="1.0" stroke-width="1.389" stroke-dasharray="1.389 2.292"/>
<path d="M607.3 266.6 L607.5 265.7 L607.7 264.8 L607.9 263.9 L608.1 263.0 L608.3 262.1 L608.5 261.2 L608.7 260.4 L608.9 259.5 L609.2 258.6 L609.4 257.7 L609.7 256.8 L609.9 255.9 L610.2 255.0 L610.4 254.1 L610.7 253.2 L611.0 252.3 L611.3 251.4 L611.6 250.6 L611.9 249.7 L612.2 248.8 L612.5 247.9 L612.8 247.0 L613.1 246.1 L613.5 245.2 L613.8 244.3 L614.2 243.4 L614.5 242.6 L614.9 241.7 L615.2 240.8 L615.6 239.9 L616.0 239.0 L616.4 238.1 L616.8 237.2 L617.1 236.3 L617.6 235.5 L618.0 234.6 L618.4 233.7 L618.8 232.8 L619.2 231.9 L619.7 231.0 L620.1 230.1 L620.5 229.3 L621.0 228.4 L621.5 227.5 L621.9 226.6 L622.4 225.7 L622.9 224.8 L623.4 223.9 L623.8 223.1 L624.3 222.2 L624.8 221.3 L625.4 220.4 L625.9 219.5 L626.4 218.6 L626.9 217.8 L627.4 216.9 L628.0 216.0 L628.5 215.1 L629.1 214.2 L629.6 213.3 L630.2 212.5 L630.8 211.6 L631.3 210.7 L631.9 209.8 L632.5 208.9 L633.1 208.1 L633.7 207.2 L634.3 206.3 L634.9 205.4 L635.5 204.5 L636.1 203.7 L636.7 202.8 L637.4 201.9 L638.0 201.0 L638.6 200.1 L639.3 199.3 L639.9 198.4 L640.6 197.5 L641.3 196.6 L641.9 195.8 L642.6 194.9 L643.3 194.0 L644.0 193.1 L644.7 192.3 L645.4 191.4 L646.1 190.5 L646.8 189.6 L647.5 188.8 L648.2 187.9 L648.9 187.0 L649.6 186.2 L650.4 185.3 L651.1 184.4 L651.8 183.5 L652.6 182.7 L653.3 181.8 L654.1 180.9 L654.8 180.1 L655.6 179.2" stroke="#ffb10d" stroke-opacity="1.0" stroke-width="1.389" stroke-dasharray="1.389 2.292"/>
<path d="M608.7 269.5 L609.4 268.8 L610.0 268.0 L610.7 267.3 L611.4 266.5 L612.0 265.8 L612.7 265.1 L613.4 264.3 L614.0 263.6 L614.7 262.8 L615.4 262.1 L616.1 261.4 L616.8 260.6 L617.5 259.9 L618.2 259.1 L618.9 258.4 L619.6 257.6 L620.3 256.9 L621.1 256.2 L621.8 255.4 L622.5 254.7 L623.3 253.9 L624.0 253.2 L624.7 252.5 L625.5 251.7 L626.2 251.0 L627.0 250.2 L627.8 249.5 L628.5 248.8 L629.3 248.0 L630.1 247.3 L630.8 246.6 L631.6 245.8 L632.4 245.1 L633.2 244.3 L634.0 243.6 L634.8 242.9 L635.6 242.1 L636.4 241.4 L637.2 240.7 L638.0 239.9 L638.8 239.2 L639.7 238.5 L640.5 237.7 L641.3 237.0 L642.1 236.3 L643.0 235.5 L643.8 234.8 L644.7 234.1 L645.5 233.3 L646.4 232.6 L647.2 231.9 L648.1 231.1 L648.9 230.4 L649.8 229.7 L650.7 228.9 L651.6 228.2 L652.4 227.5 L653.3 226.7 L654.2 226.0 L655.1 225.3 L656.0 224.6 L656.9 223.8 L657.8 223.1 L658.7 222.4 L659.6 221.6 L660.5 220.9 L661.4 220.2 L662.3 219.5 L663.2 218.7 L664.1 218.0 L665.1 217.3 L666.0 216.6 L666.9 215.8 L667.9 215.1 L668.8 214.4 L669.7 213.7 L670.7 213.0 L671.6 212.2 L672.6 211.5 L673.5 210.8 L674.5 210.1 L675.5 209.4 L676.4 208.6 L677.4 207.9 L678.4 207.2 L679.3 206.5 L680.3 205.8 L681.3 205.0 L682.3 204.3 L683.2 203.6 L684.2 202.9 L685.2 202.2 L686.2 201.5 L687.2 200.8 L688.2 200.0 L689.2 199.3 L690.2 198.6 L691.2 197.9 L692.2 197.2" stroke="#ffb10d" stroke-opacity="1.0" stroke-width="1.389" stroke-dasharray="1.389 2.292"/>
<path d="M610.9 270.5 L611.5 269.8 L612.2 269.2 L612.8 268.5 L613.5 267.8 L614.2 267.2 L614.8 266.5 L615.5 265.8 L616.2 265.2 L616.8 264.5 L617.5 263.8 L618.2 263.2 L618.9 262.5 L619.6 261.9 L620.3 261.2 L621.0 260.5 L621.7 259.9 L622.4 259.2 L623.1 258.5 L623.8 257.9 L624.5 257.2 L625.2 256.6 L625.9 255.9 L626.6 255.2 L627.4 254.6 L628.1 253.9 L628.8 253.3 L629.6 252.6 L630.3 251.9 L631.0 251.3 L631.8 250.6 L632.5 250.0 L633.3 249.3 L634.0 248.6 L634.8 248.0 L635.6 247.3 L636.3 246.7 L637.1 246.0 L637.9 245.4 L638.6 244.7 L639.4 244.0 L640.2 243.4 L641.0 242.7 L641.8 242.1 L642.6 241.4 L643.3 240.8 L644.1 240.1 L644.9 239.5 L645.7 238.8 L646.5 238.2 L647.3 237.5 L648.2 236.8 L649.0 236.2 L649.8 235.5 L650.6 234.9 L651.4 234.2 L652.2 233.6 L653.1 232.9 L653.9 232.3 L654.7 231.6 L655.6 231.0 L656.4 230.4 L657.2 229.7 L658.1 229.1 L658.9 228.4 L659.8 227.8 L660.6 227.1 L661.5 226.5 L662.3 225.8 L663.2 225.2 L664.1 224.5 L664.9 223.9 L665.8 223.3 L666.7 222.6 L667.5 222.0 L668.4 221.3 L669.3 220.7 L670.1 220.0 L671.0 219.4 L671.9 218.8 L672.8 218.1 L673.7 217.5 L674.6 216.9 L675.5 216.2 L676.4 215.6 L677.2 214.9 L678.1 214.3 L679.0 213.7 L679.9 213.0 L680.8 212.4 L681.8 211.8 L682.7 211.1 L683.6 210.5 L684.5 209.9 L685.4 209.2 L686.3 208.6 L687.2 208.0 L688.2 207.4 L689.1 206.7 L690.0 206.1" stroke="#ffb10d" stroke-opacity="1.0" stroke-width="1.389" stroke-dasharray="1.389 2.292"/>
<path d="M611.3 269.1 L612.1 268.6 L613.0 268.1 L613.9 267.6 L614.7 267.2 L615.6 266.7 L616.4 266.2 L617.3 265.7 L618.2 265.2 L619.0 264.7 L619.9 264.2 L620.8 263.7 L621.6 263.3 L622.5 262.8 L623.4 262.3 L624.3 261.8 L625.1 261.3 L626.0 260.8 L626.9 260.4 L627.8 259.9 L628.7 259.4 L629.5 258.9 L630.4 258.4 L631.3 258.0 L632.2 257.5 L633.1 257.0 L634.0 256.5 L634.9 256.1 L635.8 255.6 L636.7 255.1 L637.6 254.6 L638.5 254.2 L639.4 253.7 L640.3 253.2 L641.2 252.8 L642.1 252.3 L643.0 251.8 L643.9 251.4 L644.8 250.9 L645.7 250.4 L646.6 250.0 L647.5 249.5 L648.4 249.1 L649.3 248.6 L650.3 248.1 L651.2 247.7 L652.1 247.2 L653.0 246.8 L653.9 246.3 L654.8 245.9 L655.8 245.4 L656.7 244.9 L657.6 244.5 L658.5 244.0 L659.4 243.6 L660.4 243.1 L661.3 242.7 L662.2 242.3 L663.1 241.8 L664.1 241.4 L665.0 240.9 L665.9 240.5 L666.8 240.0 L667.8 239.6 L668.7 239.2 L669.6 238.7 L670.6 238.3 L671.5 237.9 L672.4 237.4 L673.4 237.0 L674.3 236.6 L675.2 236.1 L676.2 235.7 L677.1 235.3 L678.0 234.8 L679.0 234.4 L679.9 234.0 L680.8 233.6 L681.8 233.1 L682.7 232.7 L683.6 232.3 L684.6 231.9 L685.5 231.5 L686.5 231.1 L687.4 230.6 L688.3 230.2 L689.3 229.8 L690.2 229.4 L691.2 229.0 L692.1 228.6 L693.0 228.2 L694.0 227.8 L694.9 227.4 L695.9 227.0 L696.8 226.6 L697.7 226.2 L698.7 225.8 L699.6 225.4 L700.6 225.0 L701.5 224.6" stroke="#ffb10d" stroke-opacity="1.0" stroke-width="1.389" stroke-dasharray="1.389 2.292"/>
<path d="M610.9 271.5 L612.1 270.9 L613.3 270.2 L614.6 269.6 L615.8 269.0 L617.0 268.4 L618.2 267.7 L619.5 267.1 L620.7 266.5 L621.9 265.9 L623.2 265.3 L624.4 264.6 L625.7 264.0 L626.9 263.4 L628.2 262.8 L629.4 262.2 L630.7 261.6 L631.9 261.0 L633.2 260.4 L634.4 259.8 L635.7 259.2 L637.0 258.6 L638.2 258.0 L639.5 257.4 L640.8 256.8 L642.0 256.2 L643.3 255.6 L644.6 255.0 L645.8 254.4 L647.1 253.8 L648.4 253.2 L649.7 252.6 L651.0 252.1 L652.2 251.5 L653.5 250.9 L654.8 250.3 L656.1 249.8 L657.4 249.2 L658.7 248.6 L660.0 248.0 L661.3 247.5 L662.5 246.9 L663.8 246.4 L665.1 245.8 L666.4 245.3 L667.7 244.7 L669.0 244.1 L670.3 243.6 L671.6 243.1 L672.9 242.5 L674.2 242.0 L675.5 241.4 L676.8 240.9 L678.1 240.4 L679.4 239.8 L680.7 239.3 L682.0 238.8 L683.3 238.2 L684.6 237.7 L685.9 237.2 L687.2 236.7 L688.5 236.2 L689.8 235.7 L691.1 235.2 L692.5 234.6 L693.8 234.1 L695.1 233.6 L696.4 233.1 L697.7 232.7 L699.0 232.2 L700.3 231.7 L701.6 231.2 L702.9 230.7 L704.2 230.2 L705.5 229.8 L706.8 229.3 L708.1 228.8 L709.4 228.3 L710.7 227.9 L712.0 227.4 L713.3 227.0 L714.6 226.5 L715.9 226.1 L717.2 225.6 L718.5 225.2 L719.8 224.7 L721.1 224.3 L722.4 223.8 L723.6 223.4 L724.9 223.0 L726.2 222.6 L727.5 222.1 L728.8 221.7 L730.1 221.3 L731.4 220.9 L732.7 220.5 L734.0 220.1 L735.2 219.7 L736.5 219.3 L737.8 218.9" stroke="#ffb10d" stroke-opacity="1.0" stroke-width="1.389" stroke-dasharray="1.389 2.292"/>
<path d="M609.2 274.6 L610.5 273.5 L611.9 272.5 L613.2 271.4 L614.6 270.4 L616.0 269.4 L617.4 268.3 L618.8 267.3 L620.2 266.3 L621.6 265.3 L623.0 264.2 L624.4 263.2 L625.8 262.2 L627.3 261.2 L628.7 260.2 L630.2 259.1 L631.7 258.1 L633.1 257.1 L634.6 256.1 L636.1 255.1 L637.6 254.1 L639.1 253.1 L640.6 252.1 L642.1 251.1 L643.6 250.1 L645.1 249.1 L646.7 248.1 L648.2 247.1 L649.7 246.1 L651.3 245.1 L652.9 244.1 L654.4 243.1 L656.0 242.1 L657.5 241.2 L659.1 240.2 L660.7 239.2 L662.3 238.2 L663.9 237.3 L665.5 236.3 L667.1 235.3 L668.7 234.4 L670.3 233.4 L671.9 232.4 L673.5 231.5 L675.2 230.5 L676.8 229.6 L678.4 228.6 L680.1 227.7 L681.7 226.8 L683.3 225.8 L685.0 224.9 L686.6 224.0 L688.3 223.0 L689.9 222.1 L691.6 221.2 L693.3 220.3 L694.9 219.4 L696.6 218.4 L698.3 217.5 L699.9 216.6 L701.6 215.7 L703.3 214.8 L705.0 213.9 L706.6 213.1 L708.3 212.2 L710.0 211.3 L711.7 210.4 L713.4 209.6 L715.0 208.7 L716.7 207.8 L718.4 207.0 L720.1 206.1 L721.8 205.3 L723.5 204.4 L725.2 203.6 L726.9 202.8 L728.6 201.9 L730.3 201.1 L731.9 200.3 L733.6 199.5 L735.3 198.7 L737.0 197.9 L738.7 197.1 L740.4 196.3 L742.1 195.5 L743.8 194.7 L745.5 193.9 L747.1 193.1 L748.8 192.4 L750.5 191.6 L752.2 190.9 L753.9 190.1 L755.5 189.4 L757.2 188.7 L758.9 187.9 L760.5 187.2 L762.2 186.5 L763.9 185.8 L765.5 185.1 L767.2 184.4" stroke="#ffb10d" stroke-opacity="1.0" stroke-width="1.389" stroke-dasharray="1.389 2.292"/>
<path d="M611.4 273.4 L612.8 272.5 L614.2 271.7 L615.7 270.9 L617.1 270.0 L618.5 269.2 L620.0 268.4 L621.5 267.6 L622.9 266.7 L624.4 265.9 L625.9 265.1 L627.3 264.3 L628.8 263.5 L630.3 262.7 L631.8 261.8 L633.3 261.0 L634.8 260.2 L636.3 259.4 L637.8 258.6 L639.3 257.8 L640.8 257.0 L642.3 256.2 L643.8 255.5 L645.4 254.7 L646.9 253.9 L648.4 253.1 L649.9 252.3 L651.5 251.5 L653.0 250.8 L654.6 250.0 L656.1 249.2 L657.6 248.4 L659.2 247.7 L660.7 246.9 L662.3 246.2 L663.9 245.4 L665.4 244.7 L667.0 243.9 L668.5 243.2 L670.1 242.4 L671.7 241.7 L673.2 240.9 L674.8 240.2 L676.4 239.5 L678.0 238.7 L679.5 238.0 L681.1 237.3 L682.7 236.6 L684.3 235.9 L685.8 235.2 L687.4 234.4 L689.0 233.7 L690.6 233.0 L692.2 232.4 L693.8 231.7 L695.4 231.0 L696.9 230.3 L698.5 229.6 L700.1 228.9 L701.7 228.3 L703.3 227.6 L704.9 226.9 L706.5 226.3 L708.0 225.6 L709.6 225.0 L711.2 224.3 L712.8 223.7 L714.4 223.1 L716.0 222.4 L717.6 221.8 L719.1 221.2 L720.7 220.6 L722.3 219.9 L723.9 219.3 L725.5 218.7 L727.1 218.1 L728.6 217.5 L730.2 216.9 L731.8 216.4 L733.4 215.8 L734.9 215.2 L736.5 214.6 L738.1 214.1 L739.7 213.5 L741.2 213.0 L742.8 212.4 L744.3 211.9 L745.9 211.4 L747.5 210.8 L749.0 210.3 L750.6 209.8 L752.1 209.3 L753.7 208.8 L755.2 208.3 L756.8 207.8 L758.3 207.3 L759.9 206.8 L761.4 206.3 L763.0 205.9 L764.5 205.4" stroke="#ffb10d" stroke-opacity="1.0" stroke-width="1.389" stroke-dasharray="1.389 2.292"/>
<path d="M609.2 268.9 L610.4 268.5 L611.6 268.0 L612.7 267.6 L613.9 267.1 L615.1 266.7 L616.2 266.3 L617.4 265.8 L618.6 265.4 L619.7 265.0 L620.9 264.5 L622.1 264.1 L623.3 263.7 L624.4 263.3 L625.6 262.8 L626.8 262.4 L628.0 262.0 L629.1 261.6 L630.3 261.2 L631.5 260.8 L632.7 260.3 L633.8 259.9 L635.0 259.5 L636.2 259.1 L637.4 258.7 L638.6 258.3 L639.7 257.9 L640.9 257.5 L642.1 257.1 L643.3 256.7 L644.5 256.3 L645.6 255.9 L646.8 255.5 L648.0 255.1 L649.2 254.8 L650.4 254.4 L651.6 254.0 L652.7 253.6 L653.9 253.2 L655.1 252.8 L656.3 252.5 L657.5 252.1 L658.7 251.7 L659.8 251.4 L661.0 251.0 L662.2 250.6 L663.4 250.3 L664.6 249.9 L665.7 249.5 L666.9 249.2 L668.1 248.8 L669.3 248.5 L670.5 248.1 L671.7 247.8 L672.8 247.4 L674.0 247.1 L675.2 246.7 L676.4 246.4 L677.6 246.1 L678.7 245.7 L679.9 245.4 L681.1 245.1 L682.3 244.7 L683.4 244.4 L684.6 244.1 L685.8 243.8 L687.0 243.5 L688.1 243.1 L689.3 242.8 L690.5 242.5 L691.7 242.2 L692.8 241.9 L694.0 241.6 L695.2 241.3 L696.3 241.0 L697.5 240.7 L698.7 240.4 L699.8 240.1 L701.0 239.8 L702.2 239.5 L703.3 239.3 L704.5 239.0 L705.7 238.7 L706.8 238.4 L708.0 238.2 L709.2 237.9 L710.3 237.6 L711.5 237.4 L712.6 237.1 L713.8 236.8 L714.9 236.6 L716.1 236.3 L717.3 236.1 L718.4 235.8 L719.6 235.6 L720.7 235.3 L721.9 235.1 L723.0 234.9 L724.2 234.6 L725.3 234.4" stroke="#ffb10d" stroke-opacity="1.0" stroke-width="1.389" stroke-dasharray="1.389 2.292"/>
<path d="M609.7 270.4 L610.9 270.2 L612.0 270.1 L613.2 269.9 L614.4 269.8 L615.5 269.7 L616.7 269.5 L617.8 269.4 L619.0 269.3 L620.1 269.1 L621.3 269.0 L622.5 268.9 L623.6 268.8 L624.8 268.6 L625.9 268.5 L627.1 268.4 L628.2 268.3 L629.4 268.2 L630.5 268.1 L631.7 268.0 L632.8 267.8 L634.0 267.7 L635.1 267.6 L636.2 267.5 L637.4 267.4 L638.5 267.3 L639.7 267.2 L640.8 267.1 L642.0 267.0 L643.1 267.0 L644.2 266.9 L645.4 266.8 L646.5 266.7 L647.7 266.6 L648.8 266.5 L649.9 266.5 L651.1 266.4 L652.2 266.3 L653.3 266.2 L654.5 266.2 L655.6 266.1 L656.7 266.0 L657.9 266.0 L659.0 265.9 L660.1 265.8 L661.3 265.8 L662.4 265.7 L663.5 265.7 L664.6 265.6 L665.8 265.5 L666.9 265.5 L668.0 265.4 L669.1 265.4 L670.3 265.4 L671.4 265.3 L672.5 265.3 L673.6 265.2 L674.8 265.2 L675.9 265.2 L677.0 265.1 L678.1 265.1 L679.2 265.1 L680.4 265.1 L681.5 265.0 L682.6 265.0 L683.7 265.0 L684.8 265.0 L685.9 265.0 L687.0 264.9 L688.2 264.9 L689.3 264.9 L690.4 264.9 L691.5 264.9 L692.6 264.9 L693.7 264.9 L694.8 264.9 L695.9 264.9 L697.0 264.9 L698.1 264.9 L699.2 264.9 L700.3 264.9 L701.4 264.9 L702.5 265.0 L703.6 265.0 L704.7 265.0 L705.8 265.0 L706.9 265.0 L708.0 265.1 L709.1 265.1 L710.2 265.1 L711.3 265.1 L712.4 265.2 L713.5 265.2 L714.6 265.2 L715.7 265.3 L716.8 265.3 L717.9 265.4 L719.0 265.4 L720.1 265.5 L721.2 265.5" stroke="#ffb10d" stroke-opacity="1.0" stroke-width="1.389" stroke-dasharray="1.389 2.292"/>
<path d="M607.3 277.6 L608.1 277.5 L608.9 277.4 L609.7 277.3 L610.5 277.2 L611.3 277.1 L612.1 277.0 L612.9 276.9 L613.7 276.8 L614.5 276.7 L615.3 276.6 L616.1 276.5 L616.8 276.4 L617.6 276.3 L618.4 276.2 L619.2 276.1 L620.0 276.0 L620.8 275.9 L621.6 275.8 L622.4 275.7 L623.2 275.6 L624.0 275.5 L624.8 275.4 L625.6 275.3 L626.4 275.2 L627.2 275.2 L628.0 275.1 L628.7 275.0 L629.5 274.9 L630.3 274.8 L631.1 274.7 L631.9 274.6 L632.7 274.6 L633.5 274.5 L634.3 274.4 L635.1 274.3 L635.9 274.2 L636.6 274.2 L637.4 274.1 L638.2 274.0 L639.0 273.9 L639.8 273.8 L640.6 273.8 L641.4 273.7 L642.2 273.6 L643.0 273.5 L643.7 273.5 L644.5 273.4 L645.3 273.3 L646.1 273.3 L646.9 273.2 L647.7 273.1 L648.5 273.1 L649.2 273.0 L650.0 272.9 L650.8 272.9 L651.6 272.8 L652.4 272.7 L653.2 272.7 L654.0 272.6 L654.7 272.5 L655.5 272.5 L656.3 272.4 L657.1 272.4 L657.9 272.3 L658.7 272.2 L659.4 272.2 L660.2 272.1 L661.0 272.1 L661.8 272.0 L662.6 272.0 L663.3 271.9 L664.1 271.9 L664.9 271.8 L665.7 271.8 L666.5 271.7 L667.2 271.7 L668.0 271.6 L668.8 271.6 L669.6 271.5 L670.4 271.5 L671.1 271.4 L671.9 271.4 L672.7 271.4 L673.5 271.3 L674.2 271.3 L675.0 271.2 L675.8 271.2 L676.6 271.2 L677.4 271.1 L678.1 271.1 L678.9 271.1 L679.7 271.0 L680.5 271.0 L681.2 271.0 L682.0 270.9 L682.8 270.9 L683.6 270.9 L684.3 270.8 L685.1 270.8" stroke="#ffb10d" stroke-opacity="1.0" stroke-width="1.389" stroke-dasharray="1.389 2.292"/>
<path d="M611.5 271.2 L612.3 271.2 L613.1 271.1 L613.9 271.1 L614.7 271.1 L615.5 271.1 L616.3 271.1 L617.1 271.1 L617.9 271.0 L618.7 271.0 L619.5 271.0 L620.3 271.0 L621.1 271.0 L621.9 271.0 L622.6 271.0 L623.4 271.0 L624.2 271.0 L625.0 271.0 L625.8 271.0 L626.6 271.0 L627.4 271.0 L628.2 270.9 L629.0 270.9 L629.8 270.9 L630.6 270.9 L631.4 271.0 L632.2 271.0 L632.9 271.0 L633.7 271.0 L634.5 271.0 L635.3 271.0 L636.1 271.0 L636.9 271.0 L637.7 271.0 L638.5 271.0 L639.3 271.0 L640.0 271.0 L640.8 271.0 L641.6 271.1 L642.4 271.1 L643.2 271.1 L644.0 271.1 L644.8 271.1 L645.5 271.1 L646.3 271.2 L647.1 271.2 L647.9 271.2 L648.7 271.2 L649.5 271.3 L650.2 271.3 L651.0 271.3 L651.8 271.3 L652.6 271.4 L653.4 271.4 L654.2 271.4 L654.9 271.4 L655.7 271.5 L656.5 271.5 L657.3 271.5 L658.1 271.6 L658.8 271.6 L659.6 271.6 L660.4 271.7 L661.2 271.7 L661.9 271.7 L662.7 271.8 L663.5 271.8 L664.3 271.9 L665.1 271.9 L665.8 271.9 L666.6 272.0 L667.4 272.0 L668.2 272.1 L668.9 272.1 L669.7 272.2 L670.5 272.2 L671.3 272.3 L672.0 272.3 L672.8 272.4 L673.6 272.4 L674.4 272.5 L675.1 272.5 L675.9 272.6 L676.7 272.6 L677.4 272.7 L678.2 272.7 L679.0 272.8 L679.8 272.8 L680.5 272.9 L681.3 273.0 L682.1 273.0 L682.8 273.1 L683.6 273.1 L684.4 273.2 L685.2 273.3 L685.9 273.3 L686.7 273.4 L687.5 273.5 L688.2 273.5 L689.0 273.6" stroke="#ffb10d" stroke-opacity="1.0" stroke-width="1.389" stroke-dasharray="1.389 2.292"/>
<path d="M609.5 268.4 L611.3 268.3 L613.1 268.3 L614.9 268.2 L616.6 268.2 L618.4 268.1 L620.2 268.1 L621.9 268.1 L623.7 268.0 L625.4 268.0 L627.2 268.0 L629.0 268.0 L630.7 268.0 L632.5 268.0 L634.2 268.0 L636.0 268.0 L637.7 268.0 L639.4 268.0 L641.2 268.0 L642.9 268.0 L644.7 268.0 L646.4 268.1 L648.1 268.1 L649.9 268.2 L651.6 268.2 L653.3 268.2 L655.0 268.3 L656.8 268.4 L658.5 268.4 L660.2 268.5 L661.9 268.6 L663.7 268.6 L665.4 268.7 L667.1 268.8 L668.8 268.9 L670.5 269.0 L672.2 269.1 L673.9 269.2 L675.6 269.3 L677.3 269.4 L679.0 269.6 L680.7 269.7 L682.4 269.8 L684.1 269.9 L685.8 270.1 L687.5 270.2 L689.2 270.4 L690.9 270.5 L692.6 270.7 L694.3 270.8 L696.0 271.0 L697.7 271.2 L699.4 271.4 L701.1 271.5 L702.8 271.7 L704.4 271.9 L706.1 272.1 L707.8 272.3 L709.5 272.5 L711.2 272.7 L712.9 272.9 L714.5 273.1 L716.2 273.3 L717.9 273.5 L719.6 273.8 L721.3 274.0 L722.9 274.2 L724.6 274.5 L726.3 274.7 L728.0 274.9 L729.6 275.2 L731.3 275.4 L733.0 275.7 L734.6 276.0 L736.3 276.2 L738.0 276.5 L739.7 276.8 L741.3 277.0 L743.0 277.3 L744.7 277.6 L746.3 277.9 L748.0 278.2 L749.7 278.5 L751.3 278.8 L753.0 279.1 L754.7 279.4 L756.3 279.7 L758.0 280.0 L759.7 280.3 L761.3 280.6 L763.0 281.0 L764.7 281.3 L766.3 281.6 L768.0 281.9 L769.7 282.3 L771.3 282.6 L773.0 283.0 L774.7 283.3 L776.3 283.6 L778.0 284.0" stroke="#ffb10d" stroke-opacity="1.0" stroke-width="1.389" stroke-dasharray="1.389 2.292"/>
<path d="M599.3 271.8 L598.9 271.3 L598.6 270.8 L598.2 270.3 L597.8 269.8 L597.5 269.3 L597.1 268.8 L596.8 268.3 L596.4 267.8 L596.0 267.3 L595.7 266.8 L595.3 266.3 L595.0 265.8 L594.7 265.3 L594.3 264.8 L594.0 264.3 L593.6 263.8 L593.3 263.3 L593.0 262.8 L592.6 262.3 L592.3 261.8 L592.0 261.3 L591.6 260.8 L591.3 260.3 L591.0 259.8 L590.6 259.3 L590.3 258.8 L590.0 258.4 L589.7 257.9 L589.4 257.4 L589.1 256.9 L588.7 256.4 L588.4 255.9 L588.1 255.4 L587.8 254.9 L587.5 254.5 L587.2 254.0 L586.9 253.5 L586.6 253.0 L586.3 252.5 L586.0 252.0 L585.7 251.6 L585.4 251.1 L585.1 250.6 L584.8 250.1 L584.5 249.7 L584.3 249.2 L584.0 248.7 L583.7 248.2 L583.4 247.8 L583.1 247.3 L582.8 246.8 L582.6 246.3 L582.3 245.9 L582.0 245.4 L581.7 244.9 L581.4 244.5 L581.2 244.0 L580.9 243.5 L580.6 243.1 L580.4 242.6 L580.1 242.1 L579.8 241.7 L579.6 241.2 L579.3 240.8 L579.0 240.3 L578.8 239.8 L578.5 239.4 L578.3 238.9 L578.0 238.5 L577.7 238.0 L577.5 237.6 L577.2 237.1 L577.0 236.7 L576.7 236.2 L576.5 235.8 L576.2 235.3 L576.0 234.9 L575.7 234.4 L575.5 234.0 L575.2 233.5 L575.0 233.1 L574.7 232.6 L574.5 232.2 L574.3 231.8 L574.0 231.3 L573.8 230.9 L573.5 230.4 L573.3 230.0 L573.1 229.6 L572.8 229.1 L572.6 228.7 L572.3 228.3 L572.1 227.9 L571.9 227.4 L571.6 227.0 L571.4 226.6 L571.2 226.1 L570.9 225.7 L570.7 225.3" stroke="#ffb10d" stroke-opacity="1.0" stroke-width="1.389" stroke-dasharray="1.389 2.292"/>
<path d="M609.4 273.4 L609.1 272.9 L608.7 272.3 L608.4 271.7 L608.1 271.2 L607.7 270.6 L607.4 270.1 L607.1 269.5 L606.7 269.0 L606.4 268.4 L606.1 267.9 L605.8 267.3 L605.5 266.7 L605.1 266.2 L604.8 265.6 L604.5 265.1 L604.2 264.5 L603.9 264.0 L603.6 263.4 L603.3 262.9 L603.0 262.3 L602.7 261.8 L602.4 261.2 L602.1 260.7 L601.8 260.2 L601.5 259.6 L601.3 259.1 L601.0 258.5 L600.7 258.0 L600.4 257.4 L600.1 256.9 L599.9 256.4 L599.6 255.8 L599.3 255.3 L599.1 254.7 L598.8 254.2 L598.5 253.7 L598.3 253.1 L598.0 252.6 L597.8 252.0 L597.5 251.5 L597.2 251.0 L597.0 250.4 L596.7 249.9 L596.5 249.4 L596.3 248.8 L596.0 248.3 L595.8 247.8 L595.5 247.3 L595.3 246.7 L595.1 246.2 L594.8 245.7 L594.6 245.1 L594.4 244.6 L594.1 244.1 L593.9 243.6 L593.7 243.0 L593.5 242.5 L593.2 242.0 L593.0 241.5 L592.8 241.0 L592.6 240.4 L592.4 239.9 L592.2 239.4 L592.0 238.9 L591.8 238.4 L591.5 237.9 L591.3 237.4 L591.1 236.8 L590.9 236.3 L590.7 235.8 L590.5 235.3 L590.3 234.8 L590.1 234.3 L589.9 233.8 L589.8 233.3 L589.6 232.8 L589.4 232.3 L589.2 231.8 L589.0 231.3 L588.8 230.8 L588.6 230.3 L588.4 229.8 L588.3 229.3 L588.1 228.8 L587.9 228.3 L587.7 227.8 L587.5 227.3 L587.4 226.8 L587.2 226.3 L587.0 225.8 L586.8 225.4 L586.7 224.9 L586.5 224.4 L586.3 223.9 L586.2 223.4 L586.0 222.9 L585.8 222.5 L585.7 222.0 L585.5 221.5" stroke="#ffb10d" stroke-opacity="1.0" stroke-width="1.389" stroke-dasharray="1.389 2.292"/>
<path d="M608.9 271.2 L609.0 270.8 L609.0 270.5 L609.1 270.2 L609.2 269.9 L609.3 269.6 L609.4 269.2 L609.4 268.9 L609.5 268.6 L609.6 268.3 L609.7 268.0 L609.8 267.6 L609.9 267.3 L609.9 267.0 L610.0 266.7 L610.1 266.4 L610.2 266.0 L610.3 265.7 L610.4 265.4 L610.5 265.1 L610.6 264.8 L610.7 264.4 L610.8 264.1 L610.9 263.8 L610.9 263.5 L611.0 263.2 L611.1 262.8 L611.2 262.5 L611.3 262.2 L611.4 261.9 L611.5 261.6 L611.6 261.2 L611.7 260.9 L611.8 260.6 L611.9 260.3 L612.1 260.0 L612.2 259.6 L612.3 259.3 L612.4 259.0 L612.5 258.7 L612.6 258.4 L612.7 258.0 L612.8 257.7 L612.9 257.4 L613.0 257.1 L613.1 256.8 L613.3 256.4 L613.4 256.1 L613.5 255.8 L613.6 255.5 L613.7 255.2 L613.8 254.8 L614.0 254.5 L614.1 254.2 L614.2 253.9 L614.3 253.6 L614.4 253.2 L614.6 252.9 L614.7 252.6 L614.8 252.3 L614.9 252.0 L615.1 251.6 L615.2 251.3 L615.3 251.0 L615.5 250.7 L615.6 250.4 L615.7 250.0 L615.8 249.7 L616.0 249.4 L616.1 249.1 L616.2 248.8 L616.4 248.4 L616.5 248.1 L616.7 247.8 L616.8 247.5 L616.9 247.2 L617.1 246.8 L617.2 246.5 L617.4 246.2 L617.5 245.9 L617.6 245.6 L617.8 245.3 L617.9 244.9 L618.1 244.6 L618.2 244.3 L618.4 244.0 L618.5 243.7 L618.7 243.3 L618.8 243.0 L619.0 242.7 L619.1 242.4 L619.3 242.1 L619.4 241.7 L619.6 241.4 L619.7 241.1 L619.9 240.8 L620.0 240.5 L620.2 240.1 L620.3 239.8 L620.5 239.5" stroke="#ffb10d" stroke-opacity="1.0" stroke-width="1.389" stroke-dasharray="1.389 2.292"/>
<path d="M611.1 267.2 L611.6 264.8 L612.2 262.5 L612.8 260.2 L613.5 257.9 L614.2 255.5 L614.9 253.2 L615.7 250.9 L616.5 248.5 L617.4 246.2 L618.3 243.9 L619.3 241.6 L620.3 239.2 L621.3 236.9 L622.4 234.6 L623.6 232.3 L624.7 230.0 L626.0 227.6 L627.2 225.3 L628.5 223.0 L629.9 220.7 L631.3 218.4 L632.7 216.1 L634.1 213.7 L635.6 211.4 L637.2 209.1 L638.8 206.8 L640.4 204.5 L642.1 202.2 L643.8 199.9 L645.5 197.6 L647.3 195.3 L649.1 193.0 L650.9 190.7 L652.8 188.4 L654.7 186.1 L656.7 183.9 L658.7 181.6 L660.7 179.3 L662.7 177.0 L664.8 174.7 L666.9 172.5 L669.1 170.2 L671.2 167.9 L673.4 165.7 L675.7 163.4 L677.9 161.2 L680.2 158.9 L682.5 156.7 L684.9 154.4 L687.2 152.2 L689.6 150.0 L692.0 147.7 L694.4 145.5 L696.9 143.3 L699.4 141.1 L701.8 138.9 L704.3 136.7 L706.9 134.5 L709.4 132.3 L711.9 130.2 L714.5 128.0 L717.0 125.9 L719.6 123.7 L722.2 121.6 L724.7 119.5 L727.3 117.4 L729.9 115.3 L732.4 113.2 L735.0 111.2 L737.5 109.1 L740.0 107.1 L742.6 105.1 L745.0 103.1 L747.5 101.2 L749.9 99.3 L752.3 97.4 L754.6 95.5 L756.9 93.7 L759.1 91.9 L761.2 90.1 L763.3 88.4 L765.3 86.7 L767.2 85.1 L768.9 83.5 L770.6 82.0 L772.1 80.5 L773.4 79.2 L774.6 77.9 L775.6 76.6 L776.4 75.5 L776.9 74.4 L777.2 73.5 L777.2 72.7 L776.9 71.9 L776.3 71.3 L775.4 70.8 L774.0 70.4 L772.4 70.2 L770.3 70.1" stroke="#ffb10d" stroke-opacity="1.0" stroke-width="1.389" stroke-dasharray="1.389 2.292"/>
<path d="M766.1 276.4 L765.8 275.0 L765.5 273.6 L765.3 272.1 L765.0 270.7 L764.7 269.3 L764.5 267.9 L764.2 266.5 L764.0 265.0 L763.8 263.6 L763.5 262.2 L763.3 260.8 L763.1 259.4 L762.9 258.0 L762.7 256.5 L762.6 255.1 L762.4 253.7 L762.2 252.3 L762.1 250.9 L761.9 249.5 L761.8 248.1 L761.6 246.6 L761.5 245.2 L761.4 243.8 L761.3 242.4 L761.2 241.0 L761.1 239.6 L761.0 238.2 L760.9 236.8 L760.8 235.4 L760.8 234.0 L760.7 232.6 L760.7 231.2 L760.6 229.8 L760.6 228.4 L760.6 227.0 L760.6 225.6 L760.5 224.2 L760.5 222.8 L760.5 221.4 L760.6 220.0 L760.6 218.6 L760.6 217.2 L760.6 215.8 L760.7 214.4 L760.7 213.1 L760.8 211.7 L760.8 210.3 L760.9 208.9 L761.0 207.5 L761.1 206.2 L761.2 204.8 L761.3 203.4 L761.4 202.0 L761.5 200.6 L761.6 199.3 L761.7 197.9 L761.8 196.5 L762.0 195.2 L762.1 193.8 L762.3 192.5 L762.4 191.1 L762.6 189.7 L762.7 188.4 L762.9 187.0 L763.1 185.7 L763.3 184.3 L763.5 183.0 L763.7 181.6 L763.9 180.3 L764.1 179.0 L764.3 177.6 L764.5 176.3 L764.7 175.0 L764.9 173.6 L765.2 172.3 L765.4 171.0 L765.7 169.7 L765.9 168.4 L766.1 167.0 L766.4 165.7 L766.7 164.4 L766.9 163.1 L767.2 161.8 L767.4 160.5 L767.7 159.2 L768.0 158.0 L768.3 156.7 L768.5 155.4 L768.8 154.1 L769.1 152.9 L769.4 151.6 L769.7 150.3 L770.0 149.1 L770.3 147.8 L770.5 146.6 L770.8 145.4 L771.1 144.1 L771.4 142.9 L771.7 141.7" stroke="#ff1c00" stroke-opacity="1.0" stroke-width="1.389" stroke-dasharray="1.389 2.292"/>
<path d="M768.3 285.0 L768.7 282.7 L769.1 280.5 L769.5 278.2 L769.9 275.9 L770.4 273.7 L770.9 271.4 L771.4 269.2 L771.9 266.9 L772.4 264.6 L773.0 262.4 L773.6 260.1 L774.2 257.8 L774.8 255.6 L775.4 253.3 L776.0 251.0 L776.7 248.8 L777.4 246.5 L778.1 244.2 L778.8 242.0 L779.6 239.7 L780.3 237.5 L781.1 235.2 L781.9 232.9 L782.7 230.7 L783.6 228.4 L784.4 226.1 L785.3 223.9 L786.1 221.6 L787.0 219.3 L788.0 217.1 L788.9 214.8 L789.9 212.5 L790.8 210.3 L791.8 208.0 L792.8 205.8 L793.8 203.5 L794.8 201.2 L795.9 199.0 L797.0 196.7 L798.0 194.4 L799.1 192.2 L800.2 189.9 L801.4 187.6 L802.5 185.4 L803.7 183.1 L804.8 180.9 L806.0 178.6 L807.2 176.3 L808.4 174.1 L809.6 171.8 L810.9 169.5 L812.1 167.3 L813.4 165.0 L814.7 162.7 L816.0 160.5 L817.3 158.2 L818.6 156.0 L819.9 153.7 L821.2 151.4 L822.6 149.2 L824.0 146.9 L825.3 144.6 L826.7 142.4 L828.1 140.1 L829.5 137.9 L830.9 135.6 L832.4 133.3 L833.8 131.1 L835.3 128.8 L836.7 126.5 L838.2 124.3 L839.7 122.0 L841.2 119.8 L842.7 117.5 L844.2 115.2 L845.7 113.0 L847.2 110.7 L848.7 108.5 L850.3 106.2 L851.8 103.9 L853.3 101.7 L854.9 99.4 L856.5 97.2 L858.0 94.9 L859.6 92.6 L861.2 90.4 L862.8 88.1 L864.4 85.9 L866.0 83.6 L867.6 81.3 L869.2 79.1 L870.8 76.8 L872.4 74.6 L874.1 72.3 L875.7 70.1 L877.3 67.8 L878.9 65.6 L880.6 63.3 L882.2 61.1" stroke="#ff1c00" stroke-opacity="1.0" stroke-width="1.389" stroke-dasharray="1.389 2.292"/>
<path d="M767.5 279.0 L767.4 276.9 L767.3 274.8 L767.3 272.7 L767.2 270.7 L767.2 268.6 L767.2 266.5 L767.2 264.4 L767.2 262.3 L767.2 260.2 L767.3 258.2 L767.4 256.1 L767.4 254.0 L767.6 251.9 L767.7 249.8 L767.8 247.8 L768.0 245.7 L768.1 243.6 L768.3 241.5 L768.5 239.5 L768.7 237.4 L769.0 235.3 L769.2 233.2 L769.5 231.1 L769.8 229.1 L770.1 227.0 L770.4 224.9 L770.7 222.9 L771.1 220.8 L771.5 218.7 L771.8 216.6 L772.2 214.6 L772.6 212.5 L773.1 210.4 L773.5 208.4 L774.0 206.3 L774.4 204.2 L774.9 202.2 L775.4 200.1 L776.0 198.1 L776.5 196.0 L777.0 193.9 L777.6 191.9 L778.2 189.8 L778.8 187.8 L779.4 185.7 L780.0 183.7 L780.6 181.6 L781.3 179.6 L781.9 177.5 L782.6 175.5 L783.3 173.4 L784.0 171.4 L784.7 169.4 L785.4 167.3 L786.2 165.3 L786.9 163.3 L787.7 161.2 L788.4 159.2 L789.2 157.2 L790.0 155.2 L790.8 153.1 L791.7 151.1 L792.5 149.1 L793.3 147.1 L794.2 145.1 L795.0 143.1 L795.9 141.1 L796.8 139.1 L797.6 137.1 L798.5 135.1 L799.4 133.2 L800.3 131.2 L801.2 129.2 L802.2 127.3 L803.1 125.3 L804.0 123.4 L804.9 121.4 L805.9 119.5 L806.8 117.6 L807.7 115.7 L808.7 113.8 L809.6 111.9 L810.5 110.0 L811.5 108.1 L812.4 106.3 L813.3 104.4 L814.2 102.6 L815.2 100.8 L816.0 99.0 L816.9 97.2 L817.8 95.4 L818.7 93.7 L819.5 91.9 L820.3 90.2 L821.1 88.6 L821.9 86.9 L822.6 85.3 L823.3 83.7 L823.9 82.2" stroke="#ff1c00" stroke-opacity="1.0" stroke-width="1.389" stroke-dasharray="1.389 2.292"/>
<path d="M772.0 283.0 L772.1 280.9 L772.2 278.8 L772.3 276.7 L772.4 274.6 L772.5 272.5 L772.7 270.4 L772.8 268.3 L773.0 266.2 L773.2 264.1 L773.4 262.0 L773.7 259.9 L773.9 257.8 L774.2 255.7 L774.5 253.6 L774.8 251.5 L775.1 249.4 L775.4 247.3 L775.8 245.2 L776.1 243.1 L776.5 241.0 L776.9 238.9 L777.3 236.8 L777.7 234.7 L778.2 232.6 L778.6 230.5 L779.1 228.4 L779.6 226.3 L780.1 224.2 L780.6 222.1 L781.2 220.0 L781.7 217.9 L782.3 215.8 L782.9 213.7 L783.5 211.6 L784.1 209.5 L784.7 207.4 L785.3 205.3 L786.0 203.2 L786.7 201.1 L787.3 199.0 L788.0 196.9 L788.8 194.8 L789.5 192.7 L790.2 190.6 L791.0 188.6 L791.7 186.5 L792.5 184.4 L793.3 182.3 L794.1 180.2 L795.0 178.1 L795.8 176.0 L796.6 173.9 L797.5 171.8 L798.4 169.7 L799.3 167.6 L800.2 165.6 L801.1 163.5 L802.0 161.4 L802.9 159.3 L803.9 157.2 L804.8 155.1 L805.8 153.1 L806.8 151.0 L807.8 148.9 L808.8 146.8 L809.8 144.7 L810.8 142.7 L811.9 140.6 L812.9 138.5 L814.0 136.4 L815.0 134.4 L816.1 132.3 L817.2 130.2 L818.3 128.1 L819.4 126.1 L820.5 124.0 L821.6 121.9 L822.8 119.9 L823.9 117.8 L825.0 115.8 L826.2 113.7 L827.4 111.7 L828.5 109.6 L829.7 107.6 L830.9 105.5 L832.1 103.5 L833.2 101.5 L834.4 99.4 L835.6 97.4 L836.8 95.4 L838.0 93.4 L839.2 91.4 L840.4 89.4 L841.6 87.4 L842.8 85.4 L844.0 83.4 L845.2 81.5 L846.4 79.5 L847.6 77.6" stroke="#ff1c00" stroke-opacity="1.0" stroke-width="1.389" stroke-dasharray="1.389 2.292"/>
<path d="M780.0 285.6 L781.0 283.9 L781.9 282.2 L782.9 280.5 L783.9 278.8 L784.9 277.1 L786.0 275.4 L787.0 273.7 L788.0 272.0 L789.1 270.3 L790.1 268.6 L791.2 266.9 L792.3 265.2 L793.4 263.5 L794.5 261.8 L795.6 260.1 L796.7 258.4 L797.8 256.7 L798.9 255.0 L800.0 253.3 L801.2 251.6 L802.3 249.9 L803.5 248.2 L804.7 246.6 L805.8 244.9 L807.0 243.2 L808.2 241.5 L809.4 239.8 L810.6 238.2 L811.8 236.5 L813.0 234.8 L814.3 233.1 L815.5 231.5 L816.7 229.8 L818.0 228.1 L819.2 226.5 L820.5 224.8 L821.7 223.1 L823.0 221.5 L824.3 219.8 L825.6 218.2 L826.9 216.5 L828.1 214.9 L829.4 213.2 L830.7 211.6 L832.0 210.0 L833.4 208.3 L834.7 206.7 L836.0 205.1 L837.3 203.4 L838.6 201.8 L840.0 200.2 L841.3 198.6 L842.6 197.0 L844.0 195.3 L845.3 193.7 L846.7 192.1 L848.0 190.5 L849.4 188.9 L850.7 187.3 L852.1 185.8 L853.5 184.2 L854.8 182.6 L856.2 181.0 L857.6 179.5 L858.9 177.9 L860.3 176.3 L861.7 174.8 L863.0 173.3 L864.4 171.7 L865.8 170.2 L867.2 168.7 L868.6 167.1 L869.9 165.6 L871.3 164.1 L872.7 162.6 L874.1 161.1 L875.5 159.6 L876.9 158.2 L878.2 156.7 L879.6 155.3 L881.0 153.8 L882.4 152.4 L883.8 150.9 L885.2 149.5 L886.6 148.1 L887.9 146.7 L889.3 145.3 L890.7 143.9 L892.1 142.6 L893.5 141.2 L894.9 139.9 L896.2 138.6 L897.6 137.3 L899.0 136.0 L900.4 134.7 L901.8 133.4 L903.1 132.2 L904.5 130.9 L905.9 129.7" stroke="#ff1c00" stroke-opacity="1.0" stroke-width="1.389" stroke-dasharray="1.389 2.292"/>
<path d="M759.1 277.4 L759.1 276.5 L759.1 275.6 L759.0 274.7 L759.0 273.8 L759.0 272.9 L759.0 272.0 L759.0 271.2 L759.0 270.3 L759.0 269.4 L759.0 268.5 L759.0 267.6 L759.0 266.7 L759.0 265.8 L759.1 264.9 L759.1 264.0 L759.1 263.1 L759.1 262.2 L759.2 261.3 L759.2 260.5 L759.2 259.6 L759.3 258.7 L759.3 257.8 L759.4 256.9 L759.4 256.0 L759.5 255.1 L759.5 254.2 L759.6 253.3 L759.7 252.4 L759.7 251.5 L759.8 250.7 L759.9 249.8 L760.0 248.9 L760.0 248.0 L760.1 247.1 L760.2 246.2 L760.3 245.3 L760.4 244.4 L760.5 243.5 L760.6 242.6 L760.7 241.8 L760.8 240.9 L760.9 240.0 L761.0 239.1 L761.1 238.2 L761.3 237.3 L761.4 236.4 L761.5 235.5 L761.6 234.6 L761.8 233.8 L761.9 232.9 L762.0 232.0 L762.2 231.1 L762.3 230.2 L762.5 229.3 L762.6 228.4 L762.8 227.5 L762.9 226.6 L763.1 225.8 L763.2 224.9 L763.4 224.0 L763.6 223.1 L763.7 222.2 L763.9 221.3 L764.1 220.4 L764.3 219.5 L764.5 218.7 L764.7 217.8 L764.8 216.9 L765.0 216.0 L765.2 215.1 L765.4 214.2 L765.6 213.3 L765.8 212.5 L766.0 211.6 L766.3 210.7 L766.5 209.8 L766.7 208.9 L766.9 208.0 L767.1 207.1 L767.4 206.3 L767.6 205.4 L767.8 204.5 L768.1 203.6 L768.3 202.7 L768.5 201.8 L768.8 201.0 L769.0 200.1 L769.3 199.2 L769.5 198.3 L769.8 197.4 L770.0 196.5 L770.3 195.7 L770.6 194.8 L770.8 193.9 L771.1 193.0 L771.4 192.1 L771.6 191.3 L771.9 190.4 L772.2 189.5" stroke="#ff1c00" stroke-opacity="1.0" stroke-width="1.389" stroke-dasharray="1.389 2.292"/>
<path d="M775.0 284.0 L775.1 283.2 L775.2 282.4 L775.3 281.6 L775.5 280.9 L775.6 280.1 L775.7 279.3 L775.8 278.5 L776.0 277.7 L776.1 276.9 L776.2 276.2 L776.4 275.4 L776.5 274.6 L776.7 273.8 L776.8 273.0 L776.9 272.2 L777.1 271.4 L777.2 270.7 L777.4 269.9 L777.5 269.1 L777.7 268.3 L777.9 267.5 L778.0 266.7 L778.2 265.9 L778.3 265.2 L778.5 264.4 L778.7 263.6 L778.9 262.8 L779.0 262.0 L779.2 261.2 L779.4 260.5 L779.6 259.7 L779.7 258.9 L779.9 258.1 L780.1 257.3 L780.3 256.5 L780.5 255.7 L780.7 255.0 L780.9 254.2 L781.1 253.4 L781.3 252.6 L781.5 251.8 L781.7 251.0 L781.9 250.3 L782.1 249.5 L782.3 248.7 L782.5 247.9 L782.7 247.1 L783.0 246.3 L783.2 245.5 L783.4 244.8 L783.6 244.0 L783.8 243.2 L784.1 242.4 L784.3 241.6 L784.5 240.8 L784.8 240.0 L785.0 239.3 L785.2 238.5 L785.5 237.7 L785.7 236.9 L786.0 236.1 L786.2 235.3 L786.5 234.6 L786.7 233.8 L787.0 233.0 L787.2 232.2 L787.5 231.4 L787.7 230.6 L788.0 229.8 L788.2 229.1 L788.5 228.3 L788.8 227.5 L789.0 226.7 L789.3 225.9 L789.6 225.1 L789.9 224.4 L790.1 223.6 L790.4 222.8 L790.7 222.0 L791.0 221.2 L791.3 220.4 L791.5 219.6 L791.8 218.9 L792.1 218.1 L792.4 217.3 L792.7 216.5 L793.0 215.7 L793.3 214.9 L793.6 214.1 L793.9 213.4 L794.2 212.6 L794.5 211.8 L794.8 211.0 L795.1 210.2 L795.4 209.4 L795.8 208.7 L796.1 207.9 L796.4 207.1 L796.7 206.3" stroke="#ff1c00" stroke-opacity="1.0" stroke-width="1.389" stroke-dasharray="1.389 2.292"/>
<path d="M778.0 286.0 L778.4 285.3 L778.9 284.6 L779.3 283.9 L779.7 283.2 L780.2 282.5 L780.6 281.8 L781.1 281.1 L781.5 280.4 L782.0 279.7 L782.4 279.0 L782.9 278.3 L783.3 277.6 L783.8 276.9 L784.2 276.2 L784.7 275.5 L785.1 274.8 L785.6 274.1 L786.0 273.4 L786.5 272.7 L787.0 272.0 L787.4 271.3 L787.9 270.6 L788.4 269.9 L788.8 269.2 L789.3 268.5 L789.8 267.8 L790.3 267.2 L790.7 266.5 L791.2 265.8 L791.7 265.1 L792.2 264.4 L792.7 263.7 L793.1 263.0 L793.6 262.3 L794.1 261.6 L794.6 260.9 L795.1 260.2 L795.6 259.5 L796.1 258.8 L796.6 258.1 L797.1 257.4 L797.6 256.7 L798.1 256.0 L798.6 255.4 L799.1 254.7 L799.6 254.0 L800.1 253.3 L800.6 252.6 L801.1 251.9 L801.6 251.2 L802.1 250.5 L802.6 249.8 L803.1 249.1 L803.6 248.5 L804.1 247.8 L804.7 247.1 L805.2 246.4 L805.7 245.7 L806.2 245.0 L806.7 244.3 L807.3 243.6 L807.8 242.9 L808.3 242.3 L808.8 241.6 L809.4 240.9 L809.9 240.2 L810.4 239.5 L810.9 238.8 L811.5 238.1 L812.0 237.5 L812.5 236.8 L813.1 236.1 L813.6 235.4 L814.2 234.7 L814.7 234.0 L815.2 233.4 L815.8 232.7 L816.3 232.0 L816.9 231.3 L817.4 230.6 L817.9 230.0 L818.5 229.3 L819.0 228.6 L819.6 227.9 L820.1 227.2 L820.7 226.6 L821.2 225.9 L821.8 225.2 L822.3 224.5 L822.9 223.9 L823.4 223.2 L824.0 222.5 L824.5 221.8 L825.1 221.2 L825.7 220.5 L826.2 219.8 L826.8 219.1 L827.3 218.5 L827.9 217.8" stroke="#ff1c00" stroke-opacity="1.0" stroke-width="1.389" stroke-dasharray="1.389 2.292"/>
<path d="M793.3 281.7 L793.7 281.4 L794.1 281.2 L794.6 280.9 L795.0 280.6 L795.4 280.4 L795.8 280.1 L796.3 279.9 L796.7 279.6 L797.1 279.3 L797.5 279.1 L798.0 278.8 L798.4 278.5 L798.8 278.3 L799.2 278.0 L799.6 277.8 L800.1 277.5 L800.5 277.2 L800.9 277.0 L801.3 276.7 L801.8 276.5 L802.2 276.2 L802.6 275.9 L803.0 275.7 L803.5 275.4 L803.9 275.2 L804.3 274.9 L804.8 274.6 L805.2 274.4 L805.6 274.1 L806.0 273.9 L806.5 273.6 L806.9 273.3 L807.3 273.1 L807.7 272.8 L808.2 272.6 L808.6 272.3 L809.0 272.1 L809.5 271.8 L809.9 271.5 L810.3 271.3 L810.7 271.0 L811.2 270.8 L811.6 270.5 L812.0 270.3 L812.5 270.0 L812.9 269.7 L813.3 269.5 L813.7 269.2 L814.2 269.0 L814.6 268.7 L815.0 268.5 L815.5 268.2 L815.9 268.0 L816.3 267.7 L816.8 267.5 L817.2 267.2 L817.6 267.0 L818.0 266.7 L818.5 266.5 L818.9 266.2 L819.3 266.0 L819.8 265.7 L820.2 265.5 L820.6 265.2 L821.1 264.9 L821.5 264.7 L821.9 264.4 L822.4 264.2 L822.8 264.0 L823.2 263.7 L823.7 263.5 L824.1 263.2 L824.5 263.0 L825.0 262.7 L825.4 262.5 L825.8 262.2 L826.3 262.0 L826.7 261.7 L827.1 261.5 L827.6 261.2 L828.0 261.0 L828.4 260.7 L828.9 260.5 L829.3 260.2 L829.7 260.0 L830.2 259.8 L830.6 259.5 L831.0 259.3 L831.5 259.0 L831.9 258.8 L832.3 258.5 L832.8 258.3 L833.2 258.0 L833.6 257.8 L834.1 257.6 L834.5 257.3 L834.9 257.1 L835.4 256.8 L835.8 256.6" stroke="#ff1c00" stroke-opacity="1.0" stroke-width="1.389" stroke-dasharray="1.389 2.292"/>
<path d="M796.1 298.9 L796.6 298.4 L797.1 298.0 L797.6 297.5 L798.1 297.1 L798.6 296.6 L799.1 296.2 L799.7 295.7 L800.2 295.3 L800.7 294.8 L801.2 294.4 L801.7 293.9 L802.2 293.5 L802.7 293.0 L803.2 292.6 L803.8 292.1 L804.3 291.7 L804.8 291.2 L805.3 290.8 L805.8 290.3 L806.3 289.9 L806.9 289.4 L807.4 289.0 L807.9 288.5 L808.4 288.1 L808.9 287.6 L809.5 287.2 L810.0 286.7 L810.5 286.3 L811.0 285.8 L811.5 285.4 L812.1 284.9 L812.6 284.5 L813.1 284.1 L813.6 283.6 L814.2 283.2 L814.7 282.7 L815.2 282.3 L815.7 281.8 L816.3 281.4 L816.8 280.9 L817.3 280.5 L817.9 280.0 L818.4 279.6 L818.9 279.2 L819.4 278.7 L820.0 278.3 L820.5 277.8 L821.0 277.4 L821.6 276.9 L822.1 276.5 L822.6 276.1 L823.2 275.6 L823.7 275.2 L824.2 274.7 L824.8 274.3 L825.3 273.9 L825.8 273.4 L826.4 273.0 L826.9 272.5 L827.4 272.1 L828.0 271.7 L828.5 271.2 L829.1 270.8 L829.6 270.4 L830.1 269.9 L830.7 269.5 L831.2 269.0 L831.7 268.6 L832.3 268.2 L832.8 267.7 L833.4 267.3 L833.9 266.9 L834.4 266.4 L835.0 266.0 L835.5 265.6 L836.1 265.1 L836.6 264.7 L837.2 264.3 L837.7 263.8 L838.2 263.4 L838.8 263.0 L839.3 262.5 L839.9 262.1 L840.4 261.7 L841.0 261.3 L841.5 260.8 L842.0 260.4 L842.6 260.0 L843.1 259.5 L843.7 259.1 L844.2 258.7 L844.8 258.3 L845.3 257.8 L845.9 257.4 L846.4 257.0 L847.0 256.6 L847.5 256.1 L848.1 255.7 L848.6 255.3" stroke="#ff1c00" stroke-opacity="1.0" stroke-width="1.389" stroke-dasharray="1.389 2.292"/>
<path d="M770.0 284.0 L769.9 282.6 L769.7 281.3 L769.6 279.9 L769.5 278.5 L769.4 277.1 L769.3 275.8 L769.2 274.4 L769.1 273.0 L769.1 271.7 L769.0 270.3 L768.9 268.9 L768.9 267.5 L768.8 266.2 L768.8 264.8 L768.8 263.4 L768.7 262.1 L768.7 260.7 L768.7 259.3 L768.7 258.0 L768.7 256.6 L768.7 255.2 L768.7 253.8 L768.8 252.5 L768.8 251.1 L768.8 249.7 L768.9 248.4 L768.9 247.0 L769.0 245.6 L769.1 244.3 L769.1 242.9 L769.2 241.5 L769.3 240.2 L769.4 238.8 L769.5 237.4 L769.6 236.1 L769.7 234.7 L769.9 233.3 L770.0 232.0 L770.1 230.6 L770.3 229.3 L770.4 227.9 L770.6 226.5 L770.7 225.2 L770.9 223.8 L771.1 222.4 L771.3 221.1 L771.5 219.7 L771.7 218.4 L771.9 217.0 L772.1 215.6 L772.3 214.3 L772.5 212.9 L772.8 211.6 L773.0 210.2 L773.3 208.9 L773.5 207.5 L773.8 206.1 L774.0 204.8 L774.3 203.4 L774.6 202.1 L774.9 200.7 L775.2 199.4 L775.5 198.0 L775.8 196.7 L776.1 195.3 L776.4 194.0 L776.7 192.6 L777.0 191.3 L777.4 189.9 L777.7 188.6 L778.1 187.2 L778.4 185.9 L778.8 184.5 L779.1 183.2 L779.5 181.9 L779.9 180.5 L780.3 179.2 L780.7 177.8 L781.1 176.5 L781.4 175.2 L781.9 173.8 L782.3 172.5 L782.7 171.2 L783.1 169.8 L783.5 168.5 L784.0 167.2 L784.4 165.8 L784.8 164.5 L785.3 163.2 L785.7 161.9 L786.2 160.5 L786.6 159.2 L787.1 157.9 L787.6 156.6 L788.1 155.3 L788.5 153.9 L789.0 152.6 L789.5 151.3 L790.0 150.0" stroke="#ff1c00" stroke-opacity="1.0" stroke-width="1.389" stroke-dasharray="1.389 2.292"/>
<path d="M602.6 219.9 L604.0 218.6 L605.4 217.3 L606.8 216.1 L608.3 214.8 L609.7 213.5 L611.2 212.2 L612.7 211.0 L614.1 209.7 L615.7 208.4 L617.2 207.1 L618.7 205.8 L620.2 204.6 L621.8 203.3 L623.4 202.0 L625.0 200.7 L626.6 199.5 L628.2 198.2 L629.8 196.9 L631.4 195.6 L633.1 194.4 L634.7 193.1 L636.4 191.8 L638.1 190.5 L639.8 189.3 L641.5 188.0 L643.2 186.7 L644.9 185.4 L646.7 184.2 L648.4 182.9 L650.2 181.6 L652.0 180.3 L653.8 179.1 L655.6 177.8 L657.4 176.5 L659.2 175.2 L661.1 174.0 L662.9 172.7 L664.8 171.4 L666.6 170.2 L668.5 168.9 L670.4 167.6 L672.3 166.3 L674.2 165.1 L676.1 163.8 L678.1 162.5 L680.0 161.2 L681.9 160.0 L683.9 158.7 L685.9 157.4 L687.9 156.2 L689.8 154.9 L691.8 153.6 L693.8 152.4 L695.9 151.1 L697.9 149.8 L699.9 148.6 L702.0 147.3 L704.0 146.0 L706.1 144.8 L708.1 143.5 L710.2 142.2 L712.3 141.0 L714.4 139.7 L716.5 138.4 L718.6 137.2 L720.7 135.9 L722.9 134.6 L725.0 133.4 L727.1 132.1 L729.3 130.9 L731.4 129.6 L733.6 128.3 L735.8 127.1 L737.9 125.8 L740.1 124.6 L742.3 123.3 L744.5 122.1 L746.7 120.8 L748.9 119.5 L751.1 118.3 L753.3 117.0 L755.5 115.8 L757.8 114.5 L760.0 113.3 L762.2 112.0 L764.5 110.8 L766.7 109.5 L769.0 108.3 L771.2 107.1 L773.5 105.8 L775.7 104.6 L778.0 103.3 L780.3 102.1 L782.5 100.9 L784.8 99.6 L787.1 98.4 L789.3 97.2 L791.6 95.9 L793.9 94.7" stroke="#dc11ff" stroke-opacity="1.0" stroke-width="1.389" stroke-dasharray="1.389 2.292"/>
<path d="M609.6 228.5 L611.7 226.8 L613.8 225.1 L615.9 223.4 L618.0 221.7 L620.2 219.9 L622.4 218.2 L624.6 216.5 L626.8 214.8 L629.1 213.1 L631.3 211.4 L633.6 209.7 L636.0 208.0 L638.3 206.3 L640.6 204.6 L643.0 202.9 L645.4 201.2 L647.8 199.5 L650.3 197.9 L652.7 196.2 L655.2 194.5 L657.7 192.8 L660.2 191.1 L662.7 189.4 L665.3 187.8 L667.8 186.1 L670.4 184.4 L673.0 182.8 L675.6 181.1 L678.2 179.4 L680.8 177.8 L683.5 176.1 L686.1 174.5 L688.8 172.8 L691.5 171.2 L694.2 169.5 L696.9 167.9 L699.6 166.2 L702.4 164.6 L705.1 163.0 L707.9 161.3 L710.7 159.7 L713.4 158.1 L716.2 156.5 L719.0 154.9 L721.8 153.3 L724.6 151.7 L727.4 150.1 L730.2 148.5 L733.1 146.9 L735.9 145.3 L738.7 143.8 L741.6 142.2 L744.4 140.7 L747.3 139.1 L750.1 137.6 L752.9 136.0 L755.8 134.5 L758.6 133.0 L761.5 131.5 L764.3 130.0 L767.2 128.5 L770.0 127.0 L772.8 125.5 L775.7 124.1 L778.5 122.6 L781.3 121.2 L784.1 119.8 L786.9 118.4 L789.7 117.0 L792.5 115.6 L795.3 114.2 L798.0 112.9 L800.8 111.5 L803.5 110.2 L806.2 108.9 L808.9 107.6 L811.6 106.4 L814.2 105.1 L816.9 103.9 L819.5 102.7 L822.1 101.5 L824.7 100.4 L827.2 99.3 L829.8 98.2 L832.3 97.1 L834.8 96.1 L837.2 95.1 L839.6 94.1 L842.0 93.2 L844.4 92.3 L846.7 91.4 L849.0 90.6 L851.3 89.8 L853.5 89.1 L855.7 88.4 L857.9 87.8 L860.0 87.2 L862.1 86.6 L864.2 86.1" stroke="#dc11ff" stroke-opacity="1.0" stroke-width="1.389" stroke-dasharray="1.389 2.292"/>
<path d="M610.4 230.8 L612.6 228.9 L614.8 227.0 L617.0 225.1 L619.2 223.2 L621.5 221.3 L623.8 219.4 L626.2 217.5 L628.5 215.6 L630.9 213.7 L633.3 211.9 L635.8 210.0 L638.3 208.1 L640.7 206.2 L643.3 204.3 L645.8 202.4 L648.4 200.6 L651.0 198.7 L653.6 196.8 L656.2 194.9 L658.9 193.1 L661.6 191.2 L664.3 189.3 L667.0 187.5 L669.8 185.6 L672.5 183.7 L675.3 181.9 L678.1 180.0 L681.0 178.2 L683.8 176.3 L686.7 174.5 L689.5 172.6 L692.4 170.8 L695.4 169.0 L698.3 167.1 L701.2 165.3 L704.2 163.5 L707.2 161.6 L710.2 159.8 L713.2 158.0 L716.2 156.2 L719.2 154.4 L722.3 152.6 L725.3 150.8 L728.4 149.0 L731.4 147.2 L734.5 145.5 L737.6 143.7 L740.7 141.9 L743.8 140.2 L746.9 138.4 L750.0 136.7 L753.1 134.9 L756.2 133.2 L759.3 131.5 L762.5 129.8 L765.6 128.1 L768.7 126.4 L771.8 124.7 L774.9 123.0 L778.1 121.3 L781.2 119.7 L784.3 118.1 L787.4 116.4 L790.4 114.8 L793.5 113.2 L796.6 111.7 L799.6 110.1 L802.7 108.6 L805.7 107.0 L808.7 105.5 L811.7 104.0 L814.7 102.6 L817.6 101.1 L820.5 99.7 L823.5 98.3 L826.3 97.0 L829.2 95.7 L832.0 94.4 L834.8 93.1 L837.6 91.9 L840.3 90.7 L843.0 89.5 L845.7 88.4 L848.3 87.3 L850.9 86.3 L853.4 85.4 L855.9 84.4 L858.4 83.6 L860.8 82.8 L863.2 82.0 L865.5 81.3 L867.8 80.7 L870.1 80.1 L872.3 79.7 L874.4 79.2 L876.6 78.9 L878.7 78.6 L880.8 78.4 L882.8 78.3" stroke="#dc11ff" stroke-opacity="1.0" stroke-width="1.389" stroke-dasharray="1.389 2.292"/>
<path d="M608.0 226.0 L610.6 224.0 L613.2 222.0 L615.8 220.0 L618.4 217.9 L621.1 215.9 L623.9 213.9 L626.6 211.9 L629.4 209.9 L632.2 207.9 L635.0 205.9 L637.9 203.9 L640.8 201.9 L643.7 199.9 L646.6 198.0 L649.6 196.0 L652.6 194.0 L655.6 192.0 L658.7 190.0 L661.7 188.1 L664.8 186.1 L668.0 184.2 L671.1 182.2 L674.2 180.2 L677.4 178.3 L680.6 176.3 L683.8 174.4 L687.0 172.5 L690.3 170.5 L693.6 168.6 L696.8 166.7 L700.1 164.8 L703.4 162.9 L706.8 161.0 L710.1 159.1 L713.4 157.2 L716.8 155.3 L720.1 153.5 L723.5 151.6 L726.9 149.7 L730.3 147.9 L733.7 146.1 L737.1 144.2 L740.5 142.4 L743.9 140.6 L747.3 138.8 L750.7 137.0 L754.1 135.3 L757.5 133.5 L760.9 131.8 L764.3 130.0 L767.6 128.3 L771.0 126.6 L774.4 124.9 L777.7 123.3 L781.1 121.6 L784.4 120.0 L787.7 118.4 L791.0 116.8 L794.3 115.2 L797.6 113.7 L800.8 112.2 L804.0 110.7 L807.2 109.2 L810.4 107.8 L813.5 106.4 L816.6 105.1 L819.7 103.7 L822.7 102.4 L825.7 101.2 L828.7 100.0 L831.6 98.8 L834.5 97.7 L837.4 96.6 L840.2 95.6 L843.0 94.6 L845.7 93.7 L848.4 92.8 L851.0 92.0 L853.6 91.2 L856.1 90.6 L858.6 89.9 L861.1 89.4 L863.5 88.9 L865.9 88.5 L868.2 88.2 L870.5 87.9 L872.7 87.7 L875.0 87.6 L877.1 87.5 L879.3 87.6 L881.4 87.7 L883.5 87.8 L885.6 88.1 L887.7 88.4 L889.7 88.8 L891.8 89.3 L893.8 89.8 L895.8 90.4 L897.8 91.1" stroke="#dc11ff" stroke-opacity="1.0" stroke-width="1.389" stroke-dasharray="1.389 2.292"/>
<path d="M606.0 224.0 L608.1 222.6 L610.2 221.2 L612.4 219.8 L614.5 218.4 L616.7 217.0 L618.9 215.6 L621.1 214.3 L623.3 212.9 L625.5 211.5 L627.8 210.1 L630.0 208.7 L632.3 207.4 L634.6 206.0 L636.8 204.6 L639.1 203.3 L641.4 201.9 L643.8 200.6 L646.1 199.2 L648.4 197.9 L650.8 196.5 L653.1 195.2 L655.5 193.8 L657.9 192.5 L660.2 191.2 L662.6 189.8 L665.0 188.5 L667.4 187.2 L669.8 185.9 L672.2 184.6 L674.7 183.3 L677.1 182.0 L679.5 180.7 L682.0 179.4 L684.4 178.1 L686.9 176.8 L689.3 175.6 L691.8 174.3 L694.2 173.0 L696.7 171.8 L699.2 170.5 L701.6 169.3 L704.1 168.0 L706.6 166.8 L709.0 165.6 L711.5 164.4 L714.0 163.2 L716.4 162.0 L718.9 160.8 L721.4 159.6 L723.8 158.4 L726.3 157.2 L728.8 156.1 L731.2 154.9 L733.7 153.8 L736.1 152.6 L738.6 151.5 L741.0 150.4 L743.5 149.3 L745.9 148.2 L748.3 147.1 L750.7 146.0 L753.1 145.0 L755.5 143.9 L757.9 142.9 L760.3 141.8 L762.7 140.8 L765.1 139.8 L767.4 138.8 L769.8 137.8 L772.1 136.9 L774.4 135.9 L776.7 135.0 L779.0 134.1 L781.3 133.2 L783.6 132.3 L785.9 131.4 L788.1 130.6 L790.3 129.7 L792.5 128.9 L794.7 128.1 L796.9 127.3 L799.1 126.5 L801.3 125.8 L803.4 125.1 L805.5 124.4 L807.6 123.7 L809.7 123.0 L811.8 122.4 L813.8 121.7 L815.8 121.1 L817.9 120.6 L819.9 120.0 L821.8 119.5 L823.8 119.0 L825.7 118.5 L827.6 118.0 L829.6 117.6 L831.4 117.2 L833.3 116.8" stroke="#dc11ff" stroke-opacity="1.0" stroke-width="1.389" stroke-dasharray="1.389 2.292"/>
<path d="M611.0 229.5 L612.5 229.1 L613.9 228.7 L615.4 228.3 L616.8 227.9 L618.3 227.5 L619.7 227.1 L621.1 226.7 L622.6 226.3 L624.0 225.9 L625.5 225.6 L626.9 225.2 L628.3 224.8 L629.8 224.5 L631.2 224.1 L632.6 223.7 L634.1 223.4 L635.5 223.0 L636.9 222.7 L638.3 222.3 L639.7 222.0 L641.2 221.7 L642.6 221.3 L644.0 221.0 L645.4 220.7 L646.8 220.4 L648.2 220.1 L649.6 219.8 L651.0 219.5 L652.4 219.2 L653.8 218.9 L655.2 218.6 L656.5 218.3 L657.9 218.0 L659.3 217.7 L660.7 217.4 L662.1 217.2 L663.4 216.9 L664.8 216.6 L666.2 216.4 L667.5 216.1 L668.9 215.9 L670.2 215.6 L671.6 215.4 L672.9 215.2 L674.3 214.9 L675.6 214.7 L676.9 214.5 L678.3 214.3 L679.6 214.1 L680.9 213.9 L682.3 213.7 L683.6 213.5 L684.9 213.3 L686.2 213.1 L687.5 212.9 L688.8 212.7 L690.1 212.6 L691.4 212.4 L692.7 212.2 L694.0 212.1 L695.3 211.9 L696.6 211.8 L697.9 211.6 L699.2 211.5 L700.5 211.3 L701.7 211.2 L703.0 211.1 L704.3 211.0 L705.5 210.9 L706.8 210.8 L708.1 210.6 L709.3 210.5 L710.6 210.5 L711.8 210.4 L713.0 210.3 L714.3 210.2 L715.5 210.1 L716.8 210.1 L718.0 210.0 L719.2 209.9 L720.4 209.9 L721.7 209.8 L722.9 209.8 L724.1 209.8 L725.3 209.7 L726.5 209.7 L727.7 209.7 L728.9 209.7 L730.1 209.6 L731.3 209.6 L732.5 209.6 L733.7 209.6 L734.9 209.6 L736.0 209.7 L737.2 209.7 L738.4 209.7 L739.6 209.7 L740.7 209.8 L741.9 209.8" stroke="#dc11ff" stroke-opacity="1.0" stroke-width="1.389" stroke-dasharray="1.389 2.292"/>
<path d="M609.0 231.5 L610.3 231.3 L611.7 231.1 L613.0 230.9 L614.3 230.8 L615.6 230.6 L616.9 230.4 L618.3 230.3 L619.6 230.1 L620.9 229.9 L622.2 229.8 L623.5 229.6 L624.8 229.5 L626.1 229.3 L627.4 229.2 L628.7 229.1 L630.0 228.9 L631.2 228.8 L632.5 228.7 L633.8 228.6 L635.1 228.4 L636.4 228.3 L637.6 228.2 L638.9 228.1 L640.2 228.0 L641.4 227.9 L642.7 227.8 L643.9 227.8 L645.2 227.7 L646.4 227.6 L647.7 227.5 L648.9 227.5 L650.2 227.4 L651.4 227.3 L652.6 227.3 L653.9 227.2 L655.1 227.2 L656.3 227.1 L657.5 227.1 L658.8 227.0 L660.0 227.0 L661.2 227.0 L662.4 227.0 L663.6 226.9 L664.8 226.9 L666.0 226.9 L667.2 226.9 L668.4 226.9 L669.6 226.9 L670.8 226.9 L672.0 226.9 L673.1 226.9 L674.3 227.0 L675.5 227.0 L676.7 227.0 L677.9 227.0 L679.0 227.1 L680.2 227.1 L681.4 227.1 L682.5 227.2 L683.7 227.2 L684.8 227.3 L686.0 227.4 L687.1 227.4 L688.3 227.5 L689.4 227.6 L690.6 227.6 L691.7 227.7 L692.9 227.8 L694.0 227.9 L695.1 228.0 L696.3 228.1 L697.4 228.2 L698.5 228.3 L699.7 228.4 L700.8 228.5 L701.9 228.6 L703.0 228.7 L704.1 228.9 L705.2 229.0 L706.4 229.1 L707.5 229.3 L708.6 229.4 L709.7 229.6 L710.8 229.7 L711.9 229.9 L713.0 230.0 L714.1 230.2 L715.2 230.3 L716.3 230.5 L717.4 230.7 L718.4 230.9 L719.5 231.0 L720.6 231.2 L721.7 231.4 L722.8 231.6 L723.9 231.8 L724.9 232.0 L726.0 232.2 L727.1 232.4" stroke="#dc11ff" stroke-opacity="1.0" stroke-width="1.389" stroke-dasharray="1.389 2.292"/>
<path d="M597.9 217.9 L598.8 217.3 L599.8 216.6 L600.7 216.0 L601.7 215.4 L602.7 214.8 L603.6 214.1 L604.6 213.5 L605.5 212.9 L606.5 212.3 L607.5 211.6 L608.5 211.0 L609.4 210.4 L610.4 209.8 L611.4 209.2 L612.4 208.5 L613.4 207.9 L614.4 207.3 L615.4 206.7 L616.4 206.0 L617.4 205.4 L618.4 204.8 L619.4 204.2 L620.4 203.6 L621.4 203.0 L622.4 202.3 L623.4 201.7 L624.4 201.1 L625.5 200.5 L626.5 199.9 L627.5 199.3 L628.5 198.6 L629.6 198.0 L630.6 197.4 L631.6 196.8 L632.7 196.2 L633.7 195.6 L634.8 195.0 L635.8 194.3 L636.8 193.7 L637.9 193.1 L638.9 192.5 L640.0 191.9 L641.1 191.3 L642.1 190.7 L643.2 190.1 L644.2 189.5 L645.3 188.9 L646.4 188.3 L647.4 187.7 L648.5 187.0 L649.6 186.4 L650.7 185.8 L651.7 185.2 L652.8 184.6 L653.9 184.0 L655.0 183.4 L656.1 182.8 L657.1 182.2 L658.2 181.6 L659.3 181.0 L660.4 180.4 L661.5 179.8 L662.6 179.2 L663.7 178.6 L664.8 178.0 L665.9 177.5 L667.0 176.9 L668.1 176.3 L669.2 175.7 L670.3 175.1 L671.4 174.5 L672.5 173.9 L673.6 173.3 L674.7 172.7 L675.8 172.1 L676.9 171.5 L678.1 171.0 L679.2 170.4 L680.3 169.8 L681.4 169.2 L682.5 168.6 L683.6 168.0 L684.8 167.5 L685.9 166.9 L687.0 166.3 L688.1 165.7 L689.3 165.1 L690.4 164.6 L691.5 164.0 L692.6 163.4 L693.8 162.8 L694.9 162.3 L696.0 161.7 L697.1 161.1 L698.3 160.6 L699.4 160.0 L700.5 159.4 L701.7 158.9 L702.8 158.3" stroke="#dc11ff" stroke-opacity="1.0" stroke-width="1.389" stroke-dasharray="1.389 2.292"/>
<path d="M497.2 200.6 L498.5 200.6 L499.8 200.7 L501.1 200.7 L502.4 200.8 L503.6 200.9 L504.9 201.0 L506.1 201.0 L507.4 201.1 L508.6 201.2 L509.8 201.3 L511.0 201.5 L512.2 201.6 L513.3 201.7 L514.5 201.8 L515.6 202.0 L516.8 202.1 L517.9 202.3 L519.0 202.5 L520.1 202.6 L521.2 202.8 L522.3 203.0 L523.4 203.2 L524.4 203.4 L525.5 203.6 L526.5 203.8 L527.6 204.1 L528.6 204.3 L529.6 204.5 L530.6 204.8 L531.6 205.0 L532.6 205.3 L533.6 205.6 L534.5 205.8 L535.5 206.1 L536.4 206.4 L537.4 206.7 L538.3 207.0 L539.2 207.3 L540.2 207.6 L541.1 207.9 L542.0 208.3 L542.9 208.6 L543.7 208.9 L544.6 209.3 L545.5 209.6 L546.4 210.0 L547.2 210.4 L548.1 210.7 L548.9 211.1 L549.8 211.5 L550.6 211.9 L551.4 212.3 L552.3 212.7 L553.1 213.1 L553.9 213.5 L554.7 213.9 L555.5 214.4 L556.3 214.8 L557.1 215.2 L557.9 215.7 L558.6 216.1 L559.4 216.6 L560.2 217.1 L561.0 217.5 L561.7 218.0 L562.5 218.5 L563.2 219.0 L564.0 219.4 L564.7 219.9 L565.5 220.4 L566.2 220.9 L567.0 221.5 L567.7 222.0 L568.4 222.5 L569.2 223.0 L569.9 223.5 L570.6 224.1 L571.3 224.6 L572.1 225.2 L572.8 225.7 L573.5 226.3 L574.2 226.8 L574.9 227.4 L575.7 228.0 L576.4 228.5 L577.1 229.1 L577.8 229.7 L578.5 230.3 L579.2 230.9 L579.9 231.5 L580.6 232.1 L581.3 232.7 L582.1 233.3 L582.8 233.9 L583.5 234.5 L584.2 235.1 L584.9 235.7 L585.6 236.4 L586.3 237.0" stroke="#59d100" stroke-opacity="1.0" stroke-width="1.389" stroke-dasharray="1.389 2.292"/>
<path d="M525.0 198.9 L554.2 182.9 L585.3 165.8 L616.5 156.5 L638.3 151.8 L660.0 149.0 L681.8 148.4 L695.8 149.5 L711.4 153.4 L725.4 161.1 L731.0 167.0 L735.7 174.8" stroke="#59d100" stroke-opacity="1.0" stroke-width="1.389" stroke-dasharray="1.389 2.292"/>
<path d="M516.1 193.6 L551.1 178.3 L594.7 156.5 L638.3 136.2 L675.6 121.5 L712.9 106.7 L737.8 96.6 L762.7 86.5 L780.0 78.7 L794.7 72.1 L820.0 63.0 L844.5 55.0 L862.0 49.5 L875.6 45.7 L882.0 43.3 L886.0 42.3 L889.4 42.5 L892.5 44.0 L895.0 46.7 L898.9 52.2 L903.3 58.9 L908.3 68.6 L916.1 83.3" stroke="#59d100" stroke-opacity="1.0" stroke-width="1.389" stroke-dasharray="1.389 2.292"/>
<path d="M518.3 182.2 L549.6 168.9 L582.2 147.1 L616.5 130.0 L644.5 114.5 L663.2 105.9" stroke="#59d100" stroke-opacity="1.0" stroke-width="1.389" stroke-dasharray="1.389 2.292"/>
<path d="M1141.5 105.5 L1100.0 95.0 L1060.0 86.0 L1022.7 79.1" stroke="#59d100" stroke-opacity="1.0" stroke-width="1.389" stroke-dasharray="1.389 2.292"/>
<path d="M739.0 251.8 L738.9 249.8 L738.8 247.8 L738.7 245.8 L738.6 243.7 L738.6 241.7 L738.5 239.7 L738.5 237.7 L738.5 235.7 L738.6 233.7 L738.6 231.7 L738.7 229.7 L738.7 227.7 L738.8 225.7 L738.9 223.7 L739.1 221.7 L739.2 219.7 L739.4 217.7 L739.5 215.7 L739.7 213.7 L740.0 211.7 L740.2 209.7 L740.4 207.8 L740.7 205.8 L741.0 203.8 L741.3 201.8 L741.6 199.9 L741.9 197.9 L742.3 196.0 L742.6 194.0 L743.0 192.1 L743.4 190.1 L743.8 188.2 L744.2 186.2 L744.6 184.3 L745.0 182.4 L745.5 180.5 L746.0 178.6 L746.4 176.6 L746.9 174.7 L747.4 172.8 L747.9 171.0 L748.5 169.1 L749.0 167.2 L749.5 165.3 L750.1 163.5 L750.6 161.6 L751.2 159.8 L751.8 157.9 L752.3 156.1 L752.9 154.3 L753.5 152.5 L754.1 150.7 L754.7 148.9 L755.3 147.1 L755.9 145.3 L756.5 143.6 L757.1 141.8 L757.7 140.1 L758.3 138.4 L758.8 136.7 L759.4 135.0 L760.0 133.3 L760.6 131.7 L761.1 130.0 L761.6 128.4 L762.2 126.8 L762.7 125.2 L763.2 123.7 L763.7 122.1 L764.1 120.6 L764.5 119.2 L764.9 117.7 L765.3 116.3 L765.6 114.9 L765.9 113.5 L766.2 112.1 L766.4 110.8 L766.6 109.6 L766.7 108.3 L766.8 107.1 L766.8 106.0 L766.8 104.8 L766.6 103.8 L766.5 102.7 L766.2 101.8 L765.9 100.8 L765.4 99.9 L764.9 99.1 L764.3 98.3 L763.6 97.6 L762.8 96.9 L761.8 96.3 L760.8 95.8 L759.6 95.3 L758.3 94.9 L756.8 94.5 L755.3 94.3 L753.6 94.0 L751.7 93.9" stroke="#a4ff27" stroke-opacity="1.0" stroke-width="1.389" stroke-dasharray="1.389 2.292"/>
<path d="M755.4 248.5 L756.7 247.0 L758.1 245.4 L759.5 243.9 L760.9 242.3 L762.3 240.8 L763.7 239.2 L765.1 237.7 L766.5 236.1 L767.9 234.6 L769.4 233.1 L770.8 231.5 L772.3 230.0 L773.7 228.5 L775.2 227.0 L776.7 225.4 L778.1 223.9 L779.6 222.4 L781.1 220.9 L782.6 219.4 L784.2 217.8 L785.7 216.3 L787.2 214.8 L788.7 213.3 L790.3 211.8 L791.8 210.3 L793.4 208.8 L794.9 207.4 L796.5 205.9 L798.0 204.4 L799.6 202.9 L801.2 201.4 L802.8 200.0 L804.4 198.5 L805.9 197.0 L807.5 195.6 L809.1 194.1 L810.7 192.7 L812.3 191.2 L813.9 189.8 L815.6 188.3 L817.2 186.9 L818.8 185.5 L820.4 184.1 L822.0 182.7 L823.7 181.2 L825.3 179.8 L826.9 178.4 L828.6 177.1 L830.2 175.7 L831.8 174.3 L833.5 172.9 L835.1 171.6 L836.7 170.2 L838.4 168.8 L840.0 167.5 L841.7 166.2 L843.3 164.8 L844.9 163.5 L846.6 162.2 L848.2 160.9 L849.9 159.6 L851.5 158.3 L853.1 157.1 L854.8 155.8 L856.4 154.5 L858.0 153.3 L859.7 152.1 L861.3 150.8 L862.9 149.6 L864.6 148.4 L866.2 147.3 L867.8 146.1 L869.5 144.9 L871.1 143.8 L872.7 142.6 L874.3 141.5 L875.9 140.4 L877.5 139.3 L879.2 138.3 L880.8 137.2 L882.4 136.2 L884.0 135.1 L885.6 134.1 L887.2 133.1 L888.8 132.2 L890.4 131.2 L892.0 130.3 L893.6 129.4 L895.2 128.5 L896.8 127.6 L898.4 126.7 L900.0 125.9 L901.5 125.1 L903.1 124.3 L904.7 123.6 L906.3 122.8 L907.9 122.1 L909.5 121.5 L911.1 120.8" stroke="#a4ff27" stroke-opacity="1.0" stroke-width="1.389" stroke-dasharray="1.389 2.292"/>
<path d="M736.6 240.3 L737.3 239.3 L738.1 238.3 L738.8 237.3 L739.6 236.3 L740.3 235.3 L741.1 234.3 L741.8 233.3 L742.6 232.3 L743.4 231.3 L744.2 230.3 L745.0 229.3 L745.7 228.3 L746.5 227.3 L747.3 226.3 L748.1 225.3 L748.9 224.3 L749.8 223.3 L750.6 222.3 L751.4 221.3 L752.2 220.3 L753.0 219.3 L753.9 218.3 L754.7 217.3 L755.6 216.3 L756.4 215.3 L757.2 214.3 L758.1 213.3 L759.0 212.3 L759.8 211.3 L760.7 210.3 L761.5 209.3 L762.4 208.3 L763.3 207.3 L764.2 206.3 L765.0 205.3 L765.9 204.3 L766.8 203.3 L767.7 202.3 L768.6 201.3 L769.5 200.3 L770.4 199.4 L771.3 198.4 L772.2 197.4 L773.1 196.4 L774.1 195.4 L775.0 194.4 L775.9 193.4 L776.8 192.4 L777.8 191.4 L778.7 190.5 L779.6 189.5 L780.6 188.5 L781.5 187.5 L782.5 186.5 L783.4 185.6 L784.4 184.6 L785.3 183.6 L786.3 182.6 L787.2 181.6 L788.2 180.7 L789.1 179.7 L790.1 178.7 L791.1 177.7 L792.1 176.8 L793.0 175.8 L794.0 174.8 L795.0 173.8 L796.0 172.9 L796.9 171.9 L797.9 170.9 L798.9 170.0 L799.9 169.0 L800.9 168.0 L801.9 167.1 L802.9 166.1 L803.9 165.1 L804.9 164.2 L805.9 163.2 L806.9 162.3 L807.9 161.3 L808.9 160.4 L809.9 159.4 L810.9 158.4 L812.0 157.5 L813.0 156.5 L814.0 155.6 L815.0 154.6 L816.0 153.7 L817.0 152.8 L818.1 151.8 L819.1 150.9 L820.1 149.9 L821.1 149.0 L822.2 148.1 L823.2 147.1 L824.2 146.2 L825.2 145.3 L826.3 144.3 L827.3 143.4" stroke="#a4ff27" stroke-opacity="1.0" stroke-width="1.389" stroke-dasharray="1.389 2.292"/>
<path d="M1301.1 285.6 L1300.5 282.5 L1299.8 279.4 L1299.0 276.2 L1298.1 273.1 L1297.0 270.0 L1295.9 266.9 L1294.6 263.8 L1293.3 260.7 L1291.8 257.6 L1290.2 254.4 L1288.5 251.3 L1286.7 248.2 L1284.8 245.1 L1282.8 242.0 L1280.7 238.9 L1278.5 235.8 L1276.2 232.7 L1273.7 229.6 L1271.2 226.5 L1268.6 223.4 L1265.9 220.3 L1263.1 217.2 L1260.1 214.1 L1257.1 211.0 L1254.0 208.0 L1250.8 204.9 L1247.6 201.8 L1244.2 198.7 L1240.7 195.6 L1237.2 192.6 L1233.5 189.5 L1229.8 186.4 L1226.0 183.4 L1222.1 180.3 L1218.1 177.3 L1214.1 174.2 L1210.0 171.2 L1205.8 168.2 L1201.5 165.1 L1197.2 162.1 L1192.8 159.1 L1188.4 156.1 L1183.9 153.1 L1179.3 150.1 L1174.7 147.1 L1170.0 144.1 L1165.3 141.2 L1160.5 138.2 L1155.7 135.3 L1150.9 132.4 L1146.0 129.5 L1141.1 126.6 L1136.2 123.7 L1131.3 120.8 L1126.4 118.0 L1121.5 115.2 L1116.5 112.4 L1111.6 109.6 L1106.8 106.9 L1101.9 104.2 L1097.2 101.6 L1092.4 99.0 L1087.8 96.4 L1083.3 93.9 L1078.9 91.4 L1074.6 89.0 L1070.5 86.7 L1066.6 84.5 L1062.9 82.3 L1059.6 80.3 L1056.5 78.4 L1053.8 76.6M755.9 74.9 L763.2 73.4 L769.9 72.1 L776.2 71.0 L781.8 70.1 L786.8 69.4 L791.2 68.9 L795.0 68.7 L798.1 68.7 L800.7 69.0 L802.7 69.5 L804.1 70.2 L805.1 71.2 L805.6 72.3 L805.7 73.7 L805.5 75.2 L805.0 76.9 L804.2 78.7 L803.1 80.6 L801.9 82.7 L800.6 84.9 L799.0 87.1 L797.4 89.4 L795.7 91.8 L793.8 94.3 L791.9 96.8 L790.0 99.4" stroke="#666666" stroke-opacity="0.7" stroke-width="1.389" stroke-dasharray="1.389 2.292"/>
<path d="M1177.8 283.3 L1177.1 279.8 L1176.3 276.3 L1175.4 272.8 L1174.4 269.3 L1173.3 265.8 L1172.1 262.3 L1170.8 258.8 L1169.4 255.3 L1168.0 251.8 L1166.4 248.3 L1164.7 244.8 L1163.0 241.3 L1161.1 237.8 L1159.2 234.4 L1157.2 230.9 L1155.1 227.4 L1152.9 223.9 L1150.6 220.4 L1148.2 216.9 L1145.7 213.4 L1143.2 209.9 L1140.6 206.4 L1137.8 202.9 L1135.1 199.4 L1132.2 196.0 L1129.2 192.5 L1126.2 189.0 L1123.1 185.5 L1119.9 182.0 L1116.6 178.5 L1113.3 175.1 L1109.9 171.6 L1106.4 168.1 L1102.9 164.6 L1099.2 161.1 L1095.6 157.7 L1091.8 154.2 L1088.0 150.7 L1084.1 147.3 L1080.2 143.8 L1076.2 140.4 L1072.2 136.9 L1068.1 133.4 L1063.9 130.0 L1059.7 126.6 L1055.5 123.1 L1051.2 119.7 L1046.9 116.2 L1042.5 112.8 L1038.1 109.4 L1033.7 106.0 L1029.2 102.6 L1024.7 99.2 L1020.2 95.9 L1015.7 92.5 L1011.2 89.2 L1006.6 85.8 L1002.1 82.6 L997.6 79.3 L993.1 76.1 L988.7 72.9 L984.4 69.7 L980.1 66.6 L976.0 63.6 L972.1 60.7 L968.4 58.0 L965.0 55.4 L962.2 53.0 L960.0 50.9 L958.7 49.2 L958.6 47.9 L960.0 47.2 L963.2 47.1M841.7 47.6 L841.9 48.7 L840.8 50.2 L838.5 52.2 L835.5 54.5 L831.9 57.0 L827.9 59.8 L823.5 62.6 L819.0 65.6 L814.3 68.6 L809.4 71.7 L804.5 74.9 L799.5 78.1 L794.5 81.4 L789.5 84.7 L784.4 88.0 L779.4 91.3 L774.3 94.7 L769.3 98.0 L764.3 101.4 L759.3 104.8 L754.3 108.2 L749.4 111.6 L744.5 115.0 L739.6 118.5 L734.8 121.9" stroke="#666666" stroke-opacity="0.7" stroke-width="1.389" stroke-dasharray="1.389 2.292"/>
<path d="M1360.0 266.7 L1358.4 264.1 L1356.6 261.6 L1354.8 259.0 L1352.9 256.5 L1351.0 253.9 L1348.9 251.4 L1346.8 248.8 L1344.5 246.3 L1342.2 243.7 L1339.8 241.2 L1337.4 238.6 L1334.8 236.0 L1332.2 233.5 L1329.4 230.9 L1326.6 228.4 L1323.8 225.8 L1320.8 223.3 L1317.8 220.7 L1314.7 218.2 L1311.5 215.6 L1308.2 213.1 L1304.9 210.5 L1301.5 208.0 L1298.0 205.4 L1294.4 202.9 L1290.8 200.3 L1287.1 197.8 L1283.3 195.2 L1279.4 192.7 L1275.5 190.1 L1271.5 187.6 L1267.5 185.0 L1263.3 182.5 L1259.1 179.9 L1254.9 177.4 L1250.6 174.8 L1246.2 172.3 L1241.7 169.8 L1237.2 167.2 L1232.6 164.7 L1228.0 162.1 L1223.3 159.6 L1218.6 157.1 L1213.8 154.5 L1208.9 152.0 L1204.0 149.4 L1199.0 146.9 L1194.0 144.4 L1188.9 141.8 L1183.8 139.3 L1178.6 136.8 L1173.4 134.2 L1168.2 131.7 L1162.9 129.2 L1157.5 126.7 L1152.1 124.2 L1146.7 121.6 L1141.2 119.1 L1135.7 116.6 L1130.2 114.1 L1124.6 111.6 L1119.0 109.1 L1113.3 106.6 L1107.7 104.1 L1102.0 101.6 L1096.3 99.1 L1090.6 96.6 L1084.8 94.2 L1079.1 91.7 L1073.3 89.3 L1067.5 86.8 L1061.7 84.4 L1056.0 81.9 L1050.2 79.5 L1044.5 77.1 L1038.8 74.8 L1033.1 72.4 L1027.4 70.1 L1021.9 67.8 L1016.4 65.5 L1011.0 63.3 L1005.7 61.1 L1000.6 58.9M811.1 56.9 L818.8 54.9 L826.1 53.0 L833.1 51.3 L839.6 49.7 L845.5 48.3 L850.9 47.2 L855.5 46.3 L859.3 45.8 L862.3 45.5 L864.5 45.7 L866.0 46.2 L866.9 47.1 L867.3 48.2 L867.3 49.5 L867.0 51.1" stroke="#666666" stroke-opacity="0.7" stroke-width="1.389" stroke-dasharray="1.389 2.292"/>
<path d="M1422.2 258.9 L1420.4 256.6 L1418.6 254.2 L1416.6 251.9 L1414.6 249.6 L1412.5 247.2 L1410.3 244.9 L1408.1 242.6 L1405.8 240.2 L1403.4 237.9 L1400.9 235.6 L1398.3 233.2 L1395.7 230.9 L1392.9 228.6 L1390.1 226.2 L1387.3 223.9 L1384.3 221.6 L1381.3 219.3 L1378.2 216.9 L1375.1 214.6 L1371.8 212.3 L1368.5 210.0 L1365.1 207.6 L1361.7 205.3 L1358.2 203.0 L1354.6 200.7 L1351.0 198.4 L1347.2 196.1 L1343.5 193.7 L1339.6 191.4 L1335.7 189.1 L1331.7 186.8 L1327.7 184.5 L1323.6 182.2 L1319.4 179.9 L1315.2 177.6 L1310.9 175.3 L1306.6 173.0 L1302.2 170.7 L1297.8 168.4 L1293.3 166.1 L1288.7 163.8 L1284.1 161.6 L1279.5 159.3 L1274.8 157.0 L1270.0 154.7 L1265.2 152.5 L1260.4 150.2M549.3 147.9 L555.8 145.7 L562.3 143.4 L568.8 141.2 L575.4 138.9 L582.0 136.7 L588.6 134.5 L595.3 132.2 L602.0 130.0 L608.7 127.8 L615.4 125.6 L622.2 123.4 L629.0 121.2 L635.7 119.0 L642.5 116.9 L649.3 114.7 L656.1 112.6 L663.0 110.4 L669.8 108.3 L676.5 106.2 L683.3 104.1 L690.1 102.0 L696.8 100.0 L703.5 97.9 L710.2 95.9 L716.8 93.9 L723.4 91.9 L730.0 90.0 L736.4 88.1 L742.8 86.2 L749.2 84.4 L755.4 82.6 L761.5 80.8 L767.5 79.1 L773.4 77.5 L779.2 75.9 L784.7 74.4 L790.2 72.9 L795.4 71.5 L800.4 70.3 L805.2 69.1 L809.8 68.0 L814.1 67.0 L818.2 66.2 L822.0 65.5 L825.5 64.9 L828.7 64.4 L831.7 64.1 L834.3 64.0 L836.7 64.0 L838.8 64.2 L840.6 64.5" stroke="#666666" stroke-opacity="0.7" stroke-width="1.389" stroke-dasharray="1.389 2.292"/>
<path d="M1340.0 253.3 L1338.7 250.8 L1337.4 248.3 L1335.9 245.8 L1334.4 243.3 L1332.8 240.9 L1331.1 238.4 L1329.4 235.9 L1327.6 233.4 L1325.7 230.9 L1323.8 228.5 L1321.7 226.0 L1319.6 223.5 L1317.5 221.1 L1315.3 218.6 L1313.0 216.1 L1310.6 213.7 L1308.2 211.2 L1305.7 208.8 L1303.1 206.4 L1300.5 203.9 L1297.8 201.5 L1295.1 199.1 L1292.3 196.6 L1289.4 194.2 L1286.5 191.8 L1283.6 189.4 L1280.5 187.0 L1277.5 184.6 L1274.4 182.2 L1271.2 179.8 L1268.0 177.5 L1264.7 175.1 L1261.4 172.8 L1258.1 170.4 L1254.7 168.1 L1251.3 165.7 L1247.9 163.4 L1244.4 161.1 L1240.9 158.8 L1237.3 156.5 L1233.8 154.3 L1230.2 152.0 L1226.6 149.8 L1223.0 147.5 L1219.4 145.3 L1215.8 143.1 L1212.2 141.0 L1208.6 138.8 L1204.9 136.6 L1201.3 134.5 L1197.8 132.4 L1194.2 130.4 L1190.7 128.3 L1187.2 126.3 L1183.7 124.3 L1180.3 122.3 L1177.0 120.4 L1173.7 118.5 L1170.4 116.6M637.6 114.8 L644.6 113.0 L651.5 111.3 L658.2 109.6 L664.9 108.0 L671.4 106.4 L677.8 104.8 L684.0 103.4 L690.1 101.9 L696.0 100.6 L701.8 99.3 L707.3 98.1 L712.7 97.0 L717.8 95.9 L722.8 95.0 L727.5 94.1 L732.0 93.3 L736.2 92.7 L740.2 92.1 L744.0 91.6 L747.5 91.2 L750.8 91.0 L753.8 90.8 L756.6 90.7 L759.2 90.8 L761.5 90.9 L763.6 91.2 L765.5 91.6 L767.2 92.1 L768.6 92.6 L769.9 93.3 L771.0 94.1 L771.9 95.0 L772.7 95.9 L773.3 97.0 L773.7 98.1 L774.1 99.3 L774.3 100.5 L774.4 101.9 L774.4 103.3" stroke="#666666" stroke-opacity="0.7" stroke-width="1.389" stroke-dasharray="1.389 2.292"/>
<path d="M1315.6 266.7 L1314.3 263.6 L1312.9 260.5 L1311.3 257.4 L1309.7 254.4 L1307.9 251.3 L1306.1 248.2 L1304.1 245.1 L1302.0 242.0 L1299.8 238.9 L1297.5 235.9 L1295.1 232.8 L1292.6 229.7 L1290.0 226.6 L1287.3 223.6 L1284.4 220.5 L1281.5 217.4 L1278.5 214.4 L1275.4 211.3 L1272.2 208.3 L1268.9 205.2 L1265.5 202.2 L1262.0 199.1 L1258.4 196.1 L1254.7 193.0 L1250.9 190.0 L1247.1 187.0 L1243.1 183.9 L1239.1 180.9 L1235.0 177.9 L1230.9 174.9 L1226.6 171.9 L1222.3 168.9 L1217.9 165.9 L1213.4 162.9 L1208.9 159.9 L1204.3 156.9 L1199.7 154.0 L1194.9 151.0 L1190.2 148.1 L1185.4 145.1 L1180.5 142.2 L1175.6 139.3 L1170.7 136.4 L1165.7 133.5 L1160.7 130.7 L1155.7 127.8 L1150.6 125.0 L1145.6 122.2 L1140.5 119.4 L1135.5 116.6 L1130.5 113.9 L1125.4 111.2 L1120.5 108.5 L1115.5 105.8 L1110.6 103.2 L1105.8 100.7 L1101.1 98.2 L1096.5 95.7 L1092.0 93.3 L1087.7 91.0 L1083.6 88.7 L1079.6 86.5 L1075.9 84.5 L1072.5 82.5M739.5 80.6 L747.3 78.9 L754.7 77.2 L761.7 75.8 L768.2 74.5 L774.3 73.4 L779.8 72.5 L784.7 71.8 L789.1 71.3 L793.0 71.0 L796.3 71.0 L799.0 71.2 L801.2 71.6 L803.0 72.2 L804.3 73.0 L805.1 74.1 L805.6 75.3 L805.8 76.7 L805.6 78.2 L805.3 79.9 L804.6 81.8 L803.8 83.7 L802.8 85.8 L801.7 87.9 L800.5 90.1 L799.1 92.4 L797.7 94.8 L796.2 97.3 L794.6 99.8 L793.0 102.3 L791.3 104.9 L789.6 107.5 L787.9 110.2 L786.2 112.9 L784.4 115.6" stroke="#666666" stroke-opacity="0.7" stroke-width="1.389" stroke-dasharray="1.389 2.292"/>
<path d="M1433.3 255.6 L1431.0 253.1 L1428.6 250.7 L1426.1 248.2 L1423.6 245.8 L1420.9 243.3 L1418.2 240.9 L1415.3 238.4 L1412.4 236.0 L1409.4 233.5 L1406.3 231.0 L1403.1 228.6 L1399.8 226.1 L1396.5 223.7 L1393.0 221.2 L1389.5 218.8 L1385.9 216.3 L1382.2 213.9 L1378.4 211.4 L1374.5 209.0 L1370.6 206.5 L1366.5 204.1 L1362.4 201.6 L1358.3 199.2 L1354.0 196.7 L1349.7 194.3 L1345.2 191.8 L1340.8 189.4 L1336.2 186.9 L1331.5 184.5 L1326.8 182.0 L1322.1 179.6 L1317.2 177.1 L1312.3 174.7 L1307.3 172.2 L1302.2 169.8 L1297.1 167.4 L1291.9 164.9 L1286.6 162.5 L1281.3 160.0 L1275.9 157.6 L1270.5 155.2 L1265.0 152.7 L1259.4 150.3 L1253.8 147.9 L1248.1 145.4 L1242.4 143.0M568.0 140.6 L574.8 138.1 L581.6 135.7 L588.4 133.3 L595.3 130.9 L602.3 128.4 L609.3 126.0 L616.3 123.6 L623.4 121.2 L630.5 118.8 L637.6 116.4 L644.8 114.0 L652.0 111.6 L659.3 109.2 L666.6 106.8 L673.9 104.4 L681.2 102.0 L688.5 99.6 L695.9 97.3 L703.3 94.9 L710.7 92.6 L718.0 90.2 L725.4 87.9 L732.8 85.5 L740.2 83.2 L747.6 80.9 L754.9 78.7 L762.2 76.4 L769.5 74.1 L776.7 71.9 L783.9 69.7 L791.0 67.6 L798.0 65.4 L805.0 63.4 L811.7 61.3 L818.4 59.4 L824.8 57.5 L831.1 55.7 L837.0 54.0 L842.7 52.4 L848.0 51.0 L852.9 49.8 L857.3 48.7 L861.3 48.0 L864.6 47.5 L867.4 47.3 L869.7 47.4 L871.5 47.8 L872.9 48.5 L874.0 49.4 L874.7 50.6 L875.2 52.0 L875.6 53.5" stroke="#666666" stroke-opacity="0.7" stroke-width="1.389" stroke-dasharray="1.389 2.292"/>
<path d="M1351.0 234.0 L1347.5 231.1 L1343.9 228.1 L1340.2 225.2 L1336.4 222.2 L1332.5 219.3 L1328.5 216.3 L1324.3 213.4 L1320.1 210.4 L1315.8 207.5 L1311.3 204.5 L1306.8 201.6 L1302.1 198.6 L1297.4 195.7 L1292.5 192.7 L1287.6 189.8 L1282.5 186.8 L1277.4 183.9 L1272.1 180.9 L1266.8 178.0 L1261.4 175.0 L1255.9 172.1 L1250.3 169.1 L1244.6 166.2 L1238.9 163.2 L1233.0 160.3 L1227.1 157.3 L1221.1 154.4 L1215.0 151.4 L1208.8 148.5 L1202.5 145.5 L1196.2 142.6 L1189.8 139.6 L1183.4 136.7 L1176.8 133.7 L1170.2 130.8 L1163.6 127.9 L1156.8 124.9 L1150.0 122.0 L1143.2 119.0 L1136.3 116.1 L1129.3 113.1 L1122.3 110.2 L1115.2 107.3 L1108.0 104.3 L1100.9 101.4 L1093.6 98.4 L1086.4 95.5 L1079.0 92.6 L1071.7 89.6 L1064.3 86.7 L1056.9 83.8 L1049.4 80.8 L1041.9 77.9 L1034.4 75.0 L1026.9 72.1 L1019.3 69.1 L1011.7 66.2 L1004.1 63.3 L996.6 60.4 L989.0 57.6 L981.4 54.7 L973.9 51.8 L966.5 49.0 L959.2 46.2 L952.0 43.5M860.3 40.9 L869.4 38.4 L877.6 36.3 L884.1 34.7 L888.3 34.2 L890.0 34.8 L890.1 36.5 L889.5 38.6 L888.5 41.1 L887.4 43.8 L886.2 46.5 L884.9 49.3 L883.6 52.1 L882.3 54.9 L881.0 57.8 L879.7 60.7 L878.4 63.6 L877.1 66.5 L875.8 69.4 L874.5 72.3 L873.2 75.2 L871.9 78.2 L870.6 81.1 L869.3 84.0 L868.0 87.0 L866.8 89.9 L865.5 92.8 L864.2 95.8 L863.0 98.7 L861.7 101.6 L860.5 104.6 L859.3 107.5 L858.1 110.5 L856.9 113.4" stroke="#666666" stroke-opacity="0.7" stroke-width="1.389" stroke-dasharray="1.389 2.292"/>
<path d="M501.0 277.1 L506.3 272.2 L511.9 267.3 L517.7 262.4 L523.8 257.5 L530.1 252.7 L536.6 247.8 L543.4 243.0 L550.4 238.2 L557.7 233.4 L565.1 228.6 L572.7 223.9 L580.5 219.2 L588.5 214.5 L596.7 209.8 L605.0 205.2 L613.4 200.6 L622.0 196.1 L630.6 191.6 L639.4 187.2 L648.3 182.8 L657.2 178.4 L666.1 174.2 L675.1 170.0 L684.1 165.9 L693.1 161.8 L702.1 157.9 L711.1 154.1 L719.9 150.3 L728.7 146.7 L737.4 143.3 L746.0 139.9 L754.4 136.8 L762.6 133.8 L770.7 131.0 L778.5 128.4 L786.1 126.1 L793.5 124.0 L800.6 122.1 L807.5 120.5 L814.1 119.2 L820.5 118.2 L826.6 117.5 L832.4 117.1 L838.1 117.1 L843.5 117.3 L848.7 117.9 L853.8 118.8" stroke="#666666" stroke-opacity="0.7" stroke-width="1.389" stroke-dasharray="1.389 2.292"/>
<path d="M612.3 242.5 L618.3 237.6 L624.6 232.6 L631.0 227.7 L637.6 222.8 L644.4 217.9 L651.3 213.0 L658.4 208.2 L665.6 203.4 L672.9 198.6 L680.4 193.9 L688.0 189.2 L695.6 184.5 L703.3 179.9 L711.1 175.4 L719.0 170.9 L726.9 166.4 L734.8 162.0 L742.8 157.7 L750.7 153.5 L758.6 149.4 L766.5 145.4 L774.4 141.5 L782.1 137.7 L789.8 134.0 L797.4 130.6 L804.9 127.2 L812.2 124.1 L819.4 121.2 L826.4 118.5 L833.2 116.0 L839.9 113.9 L846.3 112.0 L852.6 110.4 L858.7 109.1 L864.7 108.2 L870.4 107.7 L876.1 107.5" stroke="#666666" stroke-opacity="0.7" stroke-width="1.389" stroke-dasharray="1.389 2.292"/>
<path d="M490.0 320.0 L493.4 315.4 L497.1 310.9 L501.0 306.4 L505.1 301.9 L509.5 297.4 L514.1 292.9 L518.9 288.4 L523.9 283.9 L529.1 279.4 L534.6 275.0 L540.2 270.5 L546.1 266.1 L552.1 261.7 L558.3 257.3 L564.7 252.9 L571.3 248.6 L578.0 244.3 L584.9 240.0 L591.9 235.8 L599.0 231.6 L606.3 227.4 L613.7 223.2 L621.1 219.2 L628.7 215.1 L636.4 211.1 L644.1 207.2 L651.8 203.3 L659.7 199.5 L667.5 195.7 L675.4 192.1 L683.2 188.5 L691.1 185.0 L699.0 181.5 L706.8 178.2 L714.6 175.0 L722.3 171.9 L729.9 168.9 L737.5 166.1 L745.0 163.4 L752.3 160.8 L759.6 158.4 L766.7 156.1 L773.7 154.0 L780.5 152.1 L787.2 150.4 L793.8 148.9 L800.2 147.6 L806.5 146.5 L812.6 145.6 L818.5 145.0 L824.4 144.5 L830.1 144.4 L835.6 144.4 L841.1 144.6 L846.4 145.1 L851.7 145.9 L856.9 146.8" stroke="#666666" stroke-opacity="0.7" stroke-width="1.389" stroke-dasharray="1.389 2.292"/>
<path d="M1195.6 314.4 L1193.9 312.4 L1192.2 310.4 L1190.5 308.4 L1188.7 306.4 L1186.9 304.4 L1185.1 302.4 L1183.2 300.4 L1181.3 298.4 L1179.4 296.4 L1177.4 294.4 L1175.4 292.4 L1173.4 290.4 L1171.4 288.4 L1169.3 286.4 L1167.2 284.4 L1165.0 282.5 L1162.8 280.5 L1160.6 278.5 L1158.4 276.5 L1156.2 274.6 L1153.9 272.6 L1151.6 270.6 L1149.2 268.7 L1146.9 266.7 L1144.5 264.8 L1142.1 262.8 L1139.6 260.9 L1137.2 258.9 L1134.7 257.0 L1132.2 255.1 L1129.6 253.1 L1127.1 251.2 L1124.5 249.3 L1121.9 247.4 L1119.3 245.5 L1116.7 243.6 L1114.0 241.7 L1111.4 239.9 L1108.7 238.0 L1106.0 236.1 L1103.2 234.3 L1100.5 232.4 L1097.8 230.6 L1095.0 228.7 L1092.2 226.9 L1089.4 225.1 L1086.6 223.3 L1083.8 221.5 L1081.0 219.7 L1078.2 217.9 L1075.3 216.2 L1072.5 214.4 L1069.6 212.7 L1066.7 211.0 L1063.8 209.2 L1061.0 207.5 L1058.1 205.9 L1055.2 204.2 L1052.3 202.5 L1049.4 200.9 L1046.5 199.2 L1043.6 197.6 L1040.7 196.0 L1037.8 194.4 L1034.9 192.9 L1032.0 191.3 L1029.0 189.8 L1026.1 188.3 L1023.2 186.8 L1020.4 185.3 L1017.5 183.8 L1014.6 182.4 L1011.7 181.0 L1008.8 179.6 L1005.9 178.2 L1003.1 176.9 L1000.2 175.6 L997.4 174.3 L994.5 173.0 L991.7 171.8 L988.9 170.5 L986.1 169.4 L983.3 168.2 L980.5 167.1 L977.7 166.0 L974.9 164.9 L972.2 163.9 L969.4 162.8 L966.7 161.9 L964.0 160.9 L961.3 160.0 L958.6 159.2 L955.9 158.3 L953.2 157.5 L950.6 156.8 L947.9 156.0 L945.3 155.4 L942.6 154.7 L940.0 154.1" stroke="#666666" stroke-opacity="0.7" stroke-width="1.389" stroke-dasharray="1.389 2.292"/>
<path d="M488.5 411.1 L483.4 405.6 L478.7 400.2 L474.4 394.7 L470.4 389.2 L466.8 383.8 L463.6 378.3 L460.8 372.8 L458.3 367.3 L456.2 361.8 L454.5 356.4 L453.2 350.9 L452.3 345.4 L451.7 339.9 L451.6 334.4 L451.8 328.9 L452.5 323.5 L453.5 318.0 L454.9 312.5 L456.7 307.0 L458.9 301.5 L461.4 296.0 L464.4 290.6 L467.7 285.1 L471.4 279.6 L475.5 274.1 L479.9 268.6 L484.7 263.2 L489.9 257.7 L495.4 252.2 L501.3 246.7 L507.5 241.3 L514.0 235.8 L520.9 230.4 L528.1 224.9 L535.6 219.4 L543.4 214.0 L551.5 208.6 L559.9 203.1 L568.6 197.7 L577.6 192.3 L586.8 186.9 L596.2 181.5 L606.0 176.1 L615.9 170.7 L626.1 165.3 L636.4 160.0 L647.0 154.6 L657.7 149.3 L668.6 144.0 L679.6 138.7 L690.8 133.5 L702.1 128.3 L713.5 123.1 L724.9 118.0 L736.4 112.9 L747.8 107.9 L759.3 102.9 L770.7 98.1 L782.0 93.3 L793.1 88.7 L804.0 84.3 L814.6 80.1 L824.8 76.1 L834.5 72.5 L843.7 69.3 L852.1 66.6 L859.7 64.6 L866.5 63.3 L872.5 62.9 L877.7 63.3 L882.4 64.6 L886.7 66.6 L890.8 69.2 L894.7 72.4 L898.6 76.1 L902.4 80.0 L906.2 84.2 L910.1 88.7 L913.9 93.3 L917.8 98.0 L921.7 102.9 L925.6 107.8" stroke="#666666" stroke-opacity="0.7" stroke-width="1.389" stroke-dasharray="1.389 2.292"/>
<path d="M460.3 397.1 L456.0 391.7 L452.1 386.2 L448.6 380.7 L445.4 375.3 L442.7 369.8 L440.3 364.3 L438.4 358.8 L436.8 353.4 L435.7 347.9 L434.9 342.4 L434.6 336.9 L434.6 331.4 L435.1 326.0 L435.9 320.5 L437.2 315.0 L438.8 309.5 L440.9 304.0 L443.4 298.6 L446.2 293.1 L449.5 287.6 L453.1 282.1 L457.2 276.6 L461.6 271.2 L466.4 265.7 L471.5 260.2 L477.1 254.8 L483.0 249.3 L489.2 243.8 L495.8 238.4 L502.8 232.9 L510.1 227.5 L517.7 222.0 L525.6 216.6 L533.9 211.1 L542.4 205.7 L551.3 200.3 L560.4 194.9 L569.8 189.5 L579.5 184.1 L589.5 178.7 L599.6 173.3 L610.0 167.9 L620.7 162.6 L631.5 157.2 L642.5 151.9 L653.7 146.6 L665.1 141.4 L676.5 136.1 L688.2 130.9 L699.9 125.7 L711.6 120.6 L723.5 115.5 L735.3 110.5 L747.2 105.5 L759.0 100.7 L770.6 95.9 L782.2 91.3 L793.5 86.8 L804.6 82.5 L815.3 78.4 L825.5 74.7 L835.1 71.4 L844.0 68.5 L852.2 66.2 L859.4 64.6 L865.8 63.8 L871.4 63.8 L876.3 64.7 L880.6 66.3 L884.6 68.7 L888.3 71.6 L891.9 75.0 L895.4 78.7 L898.9 82.8" stroke="#666666" stroke-opacity="0.7" stroke-width="1.389" stroke-dasharray="1.389 2.292"/>
<path d="M1335.6 258.9 L1334.4 256.3 L1333.2 253.7 L1331.9 251.1 L1330.5 248.5 L1329.0 245.8 L1327.4 243.2 L1325.7 240.6 L1324.0 238.0 L1322.2 235.4 L1320.3 232.8 L1318.3 230.3 L1316.3 227.7 L1314.1 225.1 L1311.9 222.5 L1309.7 219.9 L1307.3 217.3 L1304.9 214.8 L1302.4 212.2 L1299.8 209.6 L1297.2 207.1 L1294.5 204.5 L1291.8 202.0 L1288.9 199.4 L1286.0 196.9 L1283.1 194.4 L1280.1 191.8 L1277.0 189.3 L1273.8 186.8 L1270.7 184.3 L1267.4 181.8 L1264.1 179.3 L1260.8 176.8 L1257.4 174.3 L1253.9 171.8 L1250.5 169.4 L1246.9 166.9 L1243.4 164.5 L1239.8 162.1 L1236.1 159.6 L1232.5 157.2 L1228.8 154.8 L1225.0 152.5 L1221.3 150.1 L1217.5 147.7 L1213.8 145.4 L1210.0 143.1 L1206.2 140.8 L1202.4 138.5 L1198.6 136.2 L1194.8 134.0 L1191.1 131.8 L1187.4 129.6 L1183.6 127.4 L1180.0 125.3 L1176.3 123.2 L1172.7 121.1 L1169.2 119.1 L1165.7 117.1 L1162.4 115.1 L1159.1 113.2 L1155.9 111.3M653.3 109.5 L660.5 107.7 L667.5 106.0 L674.4 104.3 L681.1 102.7 L687.7 101.2 L694.1 99.7 L700.3 98.3 L706.3 97.0 L712.0 95.8 L717.6 94.6 L722.9 93.6 L728.0 92.6 L732.8 91.8 L737.3 91.0 L741.6 90.4 L745.6 89.9 L749.3 89.5 L752.7 89.2 L755.9 89.0 L758.8 89.0 L761.4 89.1 L763.7 89.3 L765.8 89.6 L767.6 90.0 L769.2 90.6 L770.6 91.3 L771.8 92.0 L772.8 92.9 L773.5 93.9 L774.1 95.0 L774.6 96.1 L774.9 97.4 L775.0 98.7 L775.1 100.1 L775.0 101.6 L774.8 103.2 L774.5 104.8" stroke="#666666" stroke-opacity="0.7" stroke-width="1.389" stroke-dasharray="1.389 2.292"/>
<path d="M573.0 366.6 L570.6 361.0 L568.5 355.4 L566.8 349.8 L565.3 344.2 L564.1 338.6 L563.3 333.0 L562.7 327.4 L562.5 321.9 L562.5 316.3 L562.9 310.7 L563.5 305.1 L564.5 299.5 L565.8 293.9 L567.3 288.3 L569.2 282.8 L571.4 277.2 L573.8 271.6 L576.6 266.0 L579.7 260.4 L583.0 254.8 L586.6 249.2 L590.5 243.7 L594.7 238.1 L599.2 232.5 L603.9 226.9 L609.0 221.3 L614.2 215.7 L619.8 210.1 L625.5 204.5 L631.6 199.0 L637.8 193.4 L644.4 187.8 L651.1 182.2" stroke="#666666" stroke-opacity="0.7" stroke-width="1.389" stroke-dasharray="1.389 2.292"/>
<path d="M1197.8 258.9 L1196.0 255.5 L1194.2 252.1 L1192.2 248.8 L1190.2 245.4 L1188.0 242.0 L1185.8 238.6 L1183.5 235.2 L1181.1 231.8 L1178.5 228.5 L1175.9 225.1 L1173.2 221.7 L1170.5 218.3 L1167.6 214.9 L1164.6 211.6 L1161.6 208.2 L1158.4 204.8 L1155.2 201.4 L1151.9 198.0 L1148.6 194.7 L1145.1 191.3 L1141.6 187.9 L1137.9 184.5 L1134.2 181.1 L1130.5 177.8 L1126.6 174.4 L1122.7 171.0 L1118.7 167.6 L1114.6 164.2 L1110.5 160.9 L1106.3 157.5 L1102.0 154.1 L1097.7 150.7 L1093.3 147.3 L1088.8 144.0 L1084.3 140.6 L1079.7 137.2 L1075.1 133.8 L1070.4 130.5 L1065.6 127.1 L1060.8 123.7 L1056.0 120.3 L1051.0 117.0 L1046.1 113.6 L1041.1 110.2 L1036.1 106.8 L1031.0 103.5 L1025.8 100.1 L1020.7 96.7 L1015.5 93.4 L1010.2 90.0 L1005.0 86.6 L999.7 83.3 L994.3 79.9 L989.0 76.5 L983.6 73.2 L978.2 69.8 L972.8 66.5 L967.4 63.2 L962.0 59.8 L956.6 56.5 L951.2 53.2 L945.8 50.0 L940.5 46.7 L935.4 43.6 L930.4 40.5 L925.9 37.7 L922.4 35.3 L921.5 33.9 L883.9 34.0 L882.6 35.7 L879.3 38.2 L875.2 41.1 L870.8 44.2 L866.2 47.4 L861.5 50.6 L856.7 53.9 L851.9 57.2 L847.1 60.5 L842.3 63.8 L837.5 67.1 L832.7 70.5 L827.9 73.8 L823.2 77.2 L818.4 80.5 L813.7 83.9 L809.0 87.3 L804.3 90.6 L799.7 94.0 L795.1 97.4 L790.5 100.7 L786.0 104.1 L781.5 107.5 L777.0 110.8 L772.6 114.2 L768.2 117.6 L763.9 121.0 L759.6 124.3 L755.3 127.7 L751.1 131.1" stroke="#666666" stroke-opacity="0.7" stroke-width="1.389" stroke-dasharray="1.389 2.292"/>
<path d="M1453.9 294.1 L1454.8 289.4 L1455.3 284.7 L1455.5 280.0 L1455.4 275.4 L1454.9 270.7 L1454.1 266.1 L1453.0 261.5 L1451.6 256.9M354.7 252.3 L363.2 247.7 L372.0 243.2 L381.0 238.7 L390.3 234.2 L399.9 229.8 L409.7 225.3 L419.8 220.9 L430.0 216.6 L440.4 212.3 L451.1 208.0 L461.8 203.8 L472.7 199.7 L483.7 195.6 L494.8 191.5 L505.9 187.5 L517.1 183.6 L528.4 179.8 L539.6 176.1 L550.7 172.4 L561.9 168.9 L572.9 165.5 L583.8 162.1 L594.6 158.9 L605.2 155.9 L615.6 153.0 L625.7 150.2 L635.6 147.6 L645.3 145.2 L654.6 143.0 L663.5 140.9 L672.1 139.1 L680.3 137.5 L688.1 136.2 L695.5 135.0 L702.5 134.2 L709.1 133.6 L715.2 133.2 L721.0 133.1 L726.3 133.3 L731.3 133.7 L735.8 134.4 L740.1 135.3 L744.0 136.5 L747.6 137.9 L751.0 139.6 L754.1 141.5 L756.9 143.5 L759.6 145.8 L762.1 148.3 L764.5 150.9 L766.8 153.7 L768.9 156.7" stroke="#666666" stroke-opacity="0.7" stroke-width="1.389" stroke-dasharray="1.389 2.292"/>
<path d="M392.6 266.1 L399.9 262.2 L407.3 258.3 L415.0 254.5 L422.8 250.7 L430.8 246.9 L439.0 243.2 L447.3 239.5 L455.7 235.9 L464.2 232.3 L472.8 228.8 L481.5 225.3 L490.3 221.8 L499.1 218.5 L508.0 215.2 L516.9 211.9 L525.9 208.8 L534.8 205.7 L543.7 202.7 L552.5 199.8 L561.4 197.0 L570.1 194.3 L578.8 191.7 L587.4 189.2 L595.8 186.8 L604.2 184.5 L612.4 182.4 L620.4 180.4 L628.3 178.5 L636.0 176.8 L643.6 175.2 L650.9 173.7 L658.1 172.5 L665.0 171.4 L671.7 170.4 L678.2 169.7 L684.6 169.1 L690.6 168.6 L696.5 168.4 L702.2 168.3" stroke="#666666" stroke-opacity="0.7" stroke-width="1.389" stroke-dasharray="1.389 2.292"/>
<path d="M1356.4 239.0 L1354.0 234.4 L1351.5 229.8 L1348.7 225.2 L1345.6 220.6 L1342.4 216.1 L1338.9 211.6 L1335.3 207.1 L1331.5 202.7 L1327.5 198.4 L1323.4 194.1 L1319.1 189.8 L1314.8 185.6 L1310.3 181.5 L1305.9 177.4 L1301.4 173.4 L1296.9 169.6 L1292.4 165.8 L1288.0 162.1M526.0 158.5 L538.6 155.0 L551.1 151.6 L563.3 148.4 L575.3 145.4 L587.0 142.5 L598.3 139.8 L609.3 137.3 L619.8 134.9 L629.8 132.8 L639.4 131.0 L648.4 129.3 L656.9 127.9 L664.8 126.8 L672.1 126.0 L678.8 125.4 L684.9 125.2 L690.5 125.2 L695.5 125.5 L699.9 126.1 L703.8 127.0 L707.3 128.1 L710.2 129.5 L712.8 131.2 L715.0 133.1 L716.9 135.3 L718.4 137.6 L719.7 140.2 L720.8 142.9 L721.6 145.8 L722.3 148.9 L722.9 152.1 L723.4 155.5 L723.7 159.0 L724.0 162.6 L724.3 166.3 L724.5 170.1 L724.7 174.0 L724.9 178.0 L725.1 182.1 L725.4 186.2 L725.7 190.4 L726.0 194.7" stroke="#666666" stroke-opacity="0.7" stroke-width="1.389" stroke-dasharray="1.389 2.292"/>
<path d="M639.1 371.3 L639.9 366.3 L640.9 361.4 L642.1 356.5 L643.5 351.6 L645.0 346.6 L646.8 341.7 L648.7 336.8 L650.8 331.8 L653.0 326.9 L655.5 321.9 L658.1 317.0 L660.9 312.0 L663.8 307.1 L666.9 302.1 L670.2 297.2 L673.7 292.2 L677.3 287.3" stroke="#666666" stroke-opacity="0.7" stroke-width="1.389" stroke-dasharray="1.389 2.292"/>
<path d="M757.1 374.8 L757.5 369.4 L758.1 364.1 L758.8 358.7 L759.5 353.4 L760.4 348.0 L761.4 342.7 L762.6 337.3 L763.8 331.9 L765.2 326.6 L766.7 321.2 L768.2 315.8 L769.9 310.5 L771.7 305.1 L773.7 299.7 L775.7 294.4 L777.8 289.0 L780.0 283.6 L782.4 278.3 L784.8 272.9 L787.3 267.6 L789.9 262.2 L792.6 256.9 L795.4 251.6 L798.3 246.2 L801.3 240.9 L804.3 235.6 L807.4 230.3 L810.6 225.0 L813.9 219.7 L817.2 214.4 L820.6 209.1 L824.1 203.9 L827.6 198.6 L831.2 193.4" stroke="#666666" stroke-opacity="0.7" stroke-width="1.389" stroke-dasharray="1.389 2.292"/>
<path d="M721.9 424.7 L719.8 419.2 L718.0 413.8 L716.3 408.3 L714.7 402.8 L713.3 397.4 L712.1 391.9 L711.0 386.4 L710.1 380.9 L709.4 375.5 L708.8 370.0 L708.4 364.5 L708.2 359.0 L708.1 353.5 L708.2 348.0 L708.5 342.5 L708.9 337.1 L709.5 331.6 L710.3 326.1 L711.2 320.6 L712.3 315.1 L713.6 309.6 L715.0 304.1 L716.6 298.6 L718.4 293.1 L720.3 287.6 L722.4 282.2 L724.6 276.7 L727.0 271.2 L729.5 265.7 L732.2 260.2 L735.0 254.7 L737.9 249.3 L741.1 243.8 L744.3 238.3 L747.7 232.8 L751.2 227.4 L754.8 221.9 L758.6 216.5 L762.5 211.0 L766.5 205.6 L770.6 200.1 L774.8 194.7" stroke="#666666" stroke-opacity="0.7" stroke-width="1.389" stroke-dasharray="1.389 2.292"/>
<path d="M465.2 348.2 L468.1 344.5 L471.2 340.7 L474.4 336.9 L477.9 333.1 L481.5 329.4 L485.2 325.6 L489.2 321.8 L493.3 318.0 L497.6 314.2 L502.0 310.4 L506.6 306.6 L511.4 302.8 L516.4 299.0 L521.5 295.3 L526.7 291.5 L532.1 287.8 L537.6 284.1 L543.3 280.4 L549.1 276.7" stroke="#666666" stroke-opacity="0.7" stroke-width="1.389" stroke-dasharray="1.389 2.292"/>
<path d="M1470.9 353.4 L1476.9 349.5M321.6 345.6 L324.0 341.7 L326.7 337.8 L329.7 333.8 L332.9 329.9 L336.4 326.0 L340.1 322.0 L344.1 318.1 L348.3 314.2 L352.8 310.2 L357.5 306.3 L362.4 302.4 L367.6 298.5 L373.0 294.5 L378.7 290.6 L384.6 286.8 L390.6 282.9 L396.9 279.1 L403.4 275.2 L410.1 271.4 L417.0 267.6 L424.1 263.9 L431.3 260.2 L438.7 256.5 L446.2 252.8 L453.9 249.2 L461.7 245.6 L469.6 242.0 L477.6 238.5 L485.8 235.1 L494.0 231.7 L502.3 228.4 L510.6 225.1 L519.0 221.8 L527.4 218.7 L535.9 215.6 L544.3 212.6 L552.8 209.6 L561.2 206.8 L569.6 204.0 L577.9 201.3 L586.2 198.8 L594.4 196.3 L602.6 193.9 L610.6 191.6 L618.5 189.5 L626.3 187.5 L634.0 185.6 L641.5 183.8 L648.9 182.2" stroke="#666666" stroke-opacity="0.7" stroke-width="1.389" stroke-dasharray="1.389 2.292"/>
<path d="M821.2 421.5 L819.7 415.9 L818.3 410.3 L817.0 404.7 L815.8 399.2 L814.6 393.6 L813.5 388.0 L812.5 382.4 L811.6 376.8 L810.7 371.2 L810.0 365.6 L809.3 360.1 L808.7 354.5 L808.2 348.9 L807.8 343.3 L807.4 337.7 L807.2 332.1 L807.0 326.5 L806.9 321.0 L806.9 315.4 L807.0 309.8 L807.1 304.2 L807.4 298.6 L807.7 293.0 L808.2 287.4 L808.7 281.8 L809.3 276.3 L809.9 270.7 L810.7 265.1 L811.5 259.5 L812.5 253.9 L813.5 248.3 L814.5 242.7 L815.7 237.2 L816.9 231.6 L818.2 226.0 L819.6 220.4 L821.1 214.8 L822.6 209.2 L824.2 203.6 L825.9 198.1 L827.7 192.5 L829.5 186.9 L831.3 181.3 L833.3 175.7 L835.3 170.1 L837.3 164.5 L839.5 158.9 L841.6 153.4 L843.9 147.8 L846.2 142.2 L848.5 136.6 L850.9 131.0 L853.3 125.4 L855.8 119.8 L858.3 114.3 L860.8 108.7 L863.4 103.1 L866.0 97.5 L868.7 91.9 L871.4 86.3 L874.1 80.7 L876.8 75.2 L879.6 69.6 L882.4 64.0 L885.2 58.4 L888.0 52.8 L890.8 47.2 L893.6 41.7 L896.4 36.1 L899.2 30.7 L910.4 30.2 L924.7 35.6" stroke="#666666" stroke-opacity="0.7" stroke-width="1.389" stroke-dasharray="1.389 2.292"/>
<path d="M589.6 274.3 L591.1 268.8 L592.8 263.3 L594.8 257.8 L597.0 252.4 L599.5 246.9 L602.3 241.4 L605.3 235.9 L608.6 230.4 L612.1 224.9 L615.9 219.5 L619.9 214.0 L624.2 208.5 L628.7 203.1 L633.4 197.6 L638.4 192.2 L643.5 186.7 L648.9 181.3 L654.5 175.9 L660.2 170.5 L666.2 165.1 L672.3 159.7 L678.6 154.3 L685.1 149.0 L691.7 143.6 L698.5 138.3 L705.4 133.0 L712.4 127.7 L719.5 122.5 L726.6 117.3 L733.9 112.1 L741.1 107.0 L748.4 102.0 L755.6 97.1 L762.7 92.2 L769.6 87.5 L776.3 82.9 L782.7 78.5 L788.5 74.4 L793.7 70.5 L797.8 67.1 L800.7 64.2 L801.7 62.0 L800.5 60.6M1000.9 60.1 L996.5 60.5 L994.7 61.8 L995.0 63.9 L997.0 66.7" stroke="#666666" stroke-opacity="0.7" stroke-width="1.389" stroke-dasharray="1.389 2.292"/>
<path d="M512.1 411.3 L504.1 406.3 L496.4 401.3 L489.0 396.3 L481.8 391.3 L475.0 386.3 L468.5 381.2 L462.2 376.2 L456.3 371.1 L450.7 366.1 L445.4 361.0 L440.5 355.9 L435.9 350.8 L431.7 345.7 L427.8 340.6 L424.2 335.5 L421.0 330.4 L418.2 325.3 L415.8 320.2 L413.7 315.1 L411.9 310.0 L410.6 304.9 L409.6 299.9 L408.9 294.8 L408.7 289.7 L408.8 284.6 L409.2 279.5 L410.0 274.4 L411.2 269.4 L412.8 264.3 L414.6 259.3 L416.9 254.2 L419.5 249.2 L422.4 244.2 L425.6 239.2 L429.2 234.2 L433.1 229.2 L437.3 224.3 L441.8 219.4 L446.5 214.5 L451.6 209.6 L456.9 204.7 L462.4 199.9 L468.2 195.1 L474.2 190.4 L480.4 185.7 L486.8 181.0 L493.4 176.4 L500.1 171.8 L506.9 167.3 L513.7 162.9M1278.6 158.5 L1264.7 154.2 L1250.9 150.0 L1237.1 145.9 L1223.4 141.9 L1209.9 138.0 L1196.5 134.2 L1183.4 130.6 L1170.6 127.2 L1158.2 123.9 L1146.2 120.8 L1134.6 118.0 L1123.5 115.4 L1113.1 113.0 L1103.2 111.0 L1094.0 109.2 L1085.5 107.8 L1077.8 106.8 L1070.8 106.0 L1064.5 105.7 L1059.0 105.7 L1054.2 106.1 L1050.0 106.9 L1046.4 108.0 L1043.5 109.5 L1041.0 111.3 L1039.0 113.4" stroke="#666666" stroke-opacity="0.7" stroke-width="1.389" stroke-dasharray="1.389 2.292"/>
<path d="M401.7 345.6 L399.8 340.0 L398.4 334.4 L397.5 328.8 L397.0 323.2 L397.0 317.6 L397.4 312.1 L398.3 306.5 L399.6 300.9 L401.4 295.3 L403.7 289.7 L406.3 284.1 L409.5 278.5 L413.0 273.0 L417.0 267.4 L421.5 261.8 L426.4 256.2 L431.7 250.6 L437.4 245.0 L443.5 239.4 L450.1 233.9 L457.0 228.3 L464.4 222.7 L472.2 217.1 L480.3 211.5 L488.8 205.9 L497.7 200.3 L506.9 194.7 L516.6 189.2 L526.5 183.6 L536.8 178.0 L547.4 172.4 L558.4 166.8 L569.6 161.2 L581.1 155.6 L593.0 150.1 L605.1 144.5 L617.5 138.9 L630.1 133.3 L643.0 127.7 L656.1 122.1 L669.4 116.5 L682.9 111.0 L696.7 105.4 L710.6 99.8 L724.7 94.2 L738.9 88.6 L753.3 83.0 L767.9 77.4 L782.5 71.8 L797.3 66.3 L812.1 60.7 L827.1 55.1 L842.1 49.5 L857.1 43.9 L872.2 38.3 L887.3 32.7 L902.4 27.7 L904.7 33.2 L907.2 38.8 L909.6 44.4 L912.0 50.0" stroke="#666666" stroke-opacity="0.7" stroke-width="1.389" stroke-dasharray="1.389 2.292"/>
<path d="M440.3 216.6 L449.0 211.0 L458.1 205.4 L467.7 199.9 L477.6 194.3 L487.9 188.7 L498.6 183.1 L509.6 177.5 L521.0 171.9 L532.8 166.3 L544.8 160.8 L557.2 155.2 L569.9 149.6 L582.9 144.0 L596.2 138.4 L609.8 132.8 L623.6 127.2 L637.7 121.7 L652.0 116.1 L666.5 110.5 L681.2 104.9 L696.2 99.3 L711.3 93.7 L726.6 88.1 L742.0 82.6 L757.6 77.0 L773.3 71.4 L789.2 65.8 L805.1 60.2 L821.1 54.7 L837.2 49.1 L853.2 43.5 L869.3 38.0M917.6 32.6 L904.9 29.4 L905.5 34.0 L906.7 39.5 L908.0 45.0" stroke="#666666" stroke-opacity="0.7" stroke-width="1.389" stroke-dasharray="1.389 2.292"/>
<path d="M499.1 208.4 L507.7 202.8 L516.6 197.2 L525.8 191.6 L535.4 186.0 L545.3 180.4 L555.5 174.9 L566.1 169.3 L576.9 163.7 L588.0 158.1 L599.4 152.5 L611.1 146.9 L623.1 141.3 L635.3 135.8 L647.7 130.2 L660.3 124.6 L673.2 119.0 L686.3 113.4 L699.6 107.8 L713.0 102.3 L726.7 96.7 L740.4 91.1 L754.4 85.5 L768.4 79.9 L782.6 74.4 L796.8 68.8 L811.2 63.2 L825.6 57.7 L840.1 52.1 L854.5 46.6 L869.0 41.1 L883.1 35.7 L895.9 31.0 L901.2 31.8 L904.0 36.8 L906.8 42.2 L909.7 47.8 L912.5 53.3 L915.3 58.9 L918.2 64.4 L921.0 70.0" stroke="#666666" stroke-opacity="0.7" stroke-width="1.389" stroke-dasharray="1.389 2.292"/>
<path d="M913.3 284.0 L912.6 282.3 L911.9 280.6 L911.2 278.9 L910.5 277.3 L909.8 275.6 L909.1 273.9 L908.3 272.2 L907.6 270.5 L906.9 268.8 L906.2 267.2 L905.5 265.5 L904.8 263.8 L904.1 262.1 L903.4 260.5 L902.7 258.8 L901.9 257.1 L901.2 255.4 L900.5 253.8 L899.8 252.1 L899.1 250.4 L898.4 248.7 L897.7 247.1 L897.0 245.4 L896.3 243.7 L895.5 242.1 L894.8 240.4 L894.1 238.7 L893.4 237.1 L892.7 235.4 L892.0 233.8 L891.3 232.1 L890.6 230.4 L889.9 228.8 L889.2 227.1 L888.5 225.5 L887.8 223.8 L887.1 222.2 L886.4 220.6 L885.7 218.9 L885.0 217.3 L884.3 215.6 L883.6 214.0 L882.9 212.4 L882.2 210.7 L881.5 209.1 L880.8 207.5 L880.1 205.8 L879.5 204.2 L878.8 202.6 L878.1 201.0 L877.4 199.4 L876.7 197.8 L876.0 196.1 L875.4 194.5 L874.7 192.9 L874.0 191.3 L873.3 189.7 L872.7 188.1 L872.0 186.6 L871.3 185.0 L870.7 183.4 L870.0 181.8 L869.3 180.2 L868.7 178.7 L868.0 177.1 L867.4 175.5 L866.7 174.0 L866.1 172.4 L865.4 170.9 L864.7 169.4 L864.1 167.8 L863.5 166.3 L862.8 164.8 L862.2 163.2 L861.5 161.7 L860.9 160.2 L860.2 158.7 L859.6 157.2 L858.9 155.8 L858.3 154.3 L857.7 152.8 L857.0 151.3 L856.4 149.9 L855.7 148.4 L855.1 147.0 L854.5 145.6 L853.8 144.2 L853.2 142.7 L852.5 141.3 L851.9 140.0 L851.3 138.6 L850.6 137.2 L850.0 135.9 L849.3 134.5 L848.7 133.2 L848.0 131.9 L847.3 130.6 L846.7 129.3 L846.0 128.0" stroke="#666666" stroke-opacity="0.7" stroke-width="1.389" stroke-dasharray="1.389 2.292"/>
<path d="M1006.7 313.3 L1006.4 311.7 L1006.0 310.1 L1005.7 308.5 L1005.3 306.9 L1005.0 305.3 L1004.6 303.7 L1004.2 302.1 L1003.9 300.5 L1003.5 298.9 L1003.1 297.3 L1002.7 295.7 L1002.2 294.1 L1001.8 292.5 L1001.4 290.9 L1001.0 289.3 L1000.5 287.7 L1000.1 286.1 L999.6 284.5 L999.2 282.9 L998.7 281.3 L998.2 279.7 L997.7 278.1 L997.2 276.5 L996.7 274.9 L996.2 273.3 L995.7 271.7 L995.2 270.1 L994.7 268.5 L994.1 266.9 L993.6 265.3 L993.0 263.7 L992.5 262.1 L991.9 260.6 L991.4 259.0 L990.8 257.4 L990.2 255.8 L989.6 254.2 L989.0 252.6 L988.4 251.0 L987.8 249.4 L987.2 247.8 L986.6 246.2 L986.0 244.6 L985.4 243.0 L984.7 241.4 L984.1 239.8 L983.4 238.2 L982.8 236.6 L982.1 235.0 L981.4 233.4 L980.8 231.8 L980.1 230.3 L979.4 228.7 L978.7 227.1 L978.0 225.5 L977.3 223.9 L976.6 222.3 L975.9 220.7 L975.2 219.1 L974.5 217.5 L973.8 215.9 L973.0 214.4 L972.3 212.8 L971.6 211.2 L970.8 209.6 L970.1 208.0 L969.3 206.4 L968.5 204.8 L967.8 203.2 L967.0 201.7 L966.2 200.1 L965.5 198.5 L964.7 196.9 L963.9 195.3 L963.1 193.7 L962.3 192.2 L961.5 190.6 L960.7 189.0 L959.9 187.4 L959.1 185.8 L958.3 184.3 L957.4 182.7 L956.6 181.1 L955.8 179.5 L955.0 178.0 L954.1 176.4 L953.3 174.8 L952.5 173.2 L951.6 171.7 L950.8 170.1 L949.9 168.5 L949.1 166.9 L948.2 165.4 L947.3 163.8 L946.5 162.2 L945.6 160.7 L944.7 159.1 L943.9 157.6 L943.0 156.0" stroke="#666666" stroke-opacity="0.7" stroke-width="1.389" stroke-dasharray="1.389 2.292"/>
<path d="M840.0 415.6 L838.2 414.2 L836.3 412.8 L834.5 411.4 L832.7 409.9 L830.9 408.5 L829.1 407.1 L827.3 405.6 L825.4 404.2 L823.6 402.7 L821.8 401.3 L820.0 399.8 L818.2 398.3 L816.4 396.9 L814.7 395.4 L812.9 393.9 L811.1 392.4 L809.3 390.9 L807.6 389.4 L805.8 387.9 L804.0 386.4 L802.3 384.9 L800.6 383.3 L798.8 381.8 L797.1 380.3 L795.4 378.8 L793.6 377.2 L791.9 375.7 L790.2 374.2 L788.5 372.6 L786.8 371.1 L785.1 369.5 L783.5 368.0 L781.8 366.4 L780.1 364.8 L778.5 363.3 L776.8 361.7 L775.2 360.1 L773.6 358.6 L772.0 357.0 L770.3 355.4 L768.7 353.9 L767.2 352.3 L765.6 350.7 L764.0 349.1 L762.4 347.5 L760.9 346.0 L759.3 344.4 L757.8 342.8 L756.3 341.2 L754.8 339.6 L753.3 338.0 L751.8 336.4 L750.3 334.8 L748.8 333.2 L747.4 331.7 L745.9 330.1 L744.5 328.5 L743.1 326.9 L741.7 325.3 L740.3 323.7 L738.9 322.1 L737.5 320.5 L736.1 318.9 L734.8 317.3 L733.4 315.7 L732.1 314.1 L730.8 312.5 L729.5 310.9 L728.2 309.3 L726.9 307.7 L725.7 306.1 L724.4 304.6 L723.2 303.0 L722.0 301.4 L720.7 299.8 L719.5 298.2 L718.4 296.6 L717.2 295.0 L716.0 293.4 L714.9 291.9 L713.7 290.3 L712.6 288.7 L711.5 287.1 L710.4 285.5 L709.3 284.0 L708.3 282.4 L707.2 280.8 L706.2 279.3 L705.2 277.7 L704.1 276.1 L703.1 274.6 L702.1 273.0 L701.2 271.5 L700.2 269.9 L699.3 268.4 L698.3 266.8 L697.4 265.3 L696.5 263.7 L695.6 262.2" stroke="#666666" stroke-opacity="0.7" stroke-width="1.389" stroke-dasharray="1.389 2.292"/>
<path d="M755.0 91.7 L764.4 83.9 L768.9 80.0 L772.2 76.1 L773.3 72.8 L771.7 70.8 L768.3 70.3" stroke="#ffb10d" stroke-width="1.389" stroke-linejoin="round"/>
<path d="M687.8 176.1 L716.6 152.6 L734.4 140.0 L775.6 112.2 L797.8 96.7 L825.3 78.9" stroke="#ffb10d" stroke-width="1.389" stroke-linejoin="round"/>
<path d="M805.6 100.1 L849.9 73.7" stroke="#ffb10d" stroke-width="1.389" stroke-linejoin="round"/>
<path d="M792.4 115.7 L814.9 103.2" stroke="#ffb10d" stroke-width="1.389" stroke-linejoin="round"/>
<path d="M774.5 135.1 L821.1 109.9" stroke="#ffb10d" stroke-width="1.389" stroke-linejoin="round"/>
<path d="M877.8 82.2 L888.9 81.1 L897.2 81.1 L906.7 82.2 L916.7 85.0 L923.9 87.9" stroke="#ffb10d" stroke-width="1.389" stroke-linejoin="round"/>
<path d="M876.7 93.6 L882.2 92.6 L888.1 92.1" stroke="#ffb10d" stroke-width="1.389" stroke-linejoin="round"/>
<path d="M900.0 35.0 L907.2 36.7 L912.0 39.2 L916.1 42.2" stroke="#ffb10d" stroke-width="1.389" stroke-linejoin="round"/>
<path d="M655.6 179.2 L670.1 164.2" stroke="#ffb10d" stroke-width="1.389" stroke-linejoin="round"/>
<path d="M692.2 197.2 L708.0 187.0" stroke="#ffb10d" stroke-width="1.389" stroke-linejoin="round"/>
<path d="M690.0 206.1 L698.9 200.9" stroke="#ffb10d" stroke-width="1.389" stroke-linejoin="round"/>
<path d="M701.5 224.6 L735.8 209.4" stroke="#ffb10d" stroke-width="1.389" stroke-linejoin="round"/>
<path d="M737.8 218.9 L746.1 217.0" stroke="#ffb10d" stroke-width="1.389" stroke-linejoin="round"/>
<path d="M767.2 184.4 L778.9 180.9" stroke="#ffb10d" stroke-width="1.389" stroke-linejoin="round"/>
<path d="M764.5 205.4 L792.2 200.1" stroke="#ffb10d" stroke-width="1.389" stroke-linejoin="round"/>
<path d="M725.3 234.4 L752.2 229.9" stroke="#ffb10d" stroke-width="1.389" stroke-linejoin="round"/>
<path d="M721.2 265.5 L730.4 264.9" stroke="#ffb10d" stroke-width="1.389" stroke-linejoin="round"/>
<path d="M685.1 270.8 L703.0 271.7" stroke="#ffb10d" stroke-width="1.389" stroke-linejoin="round"/>
<path d="M689.0 273.6 L698.3 275.1" stroke="#ffb10d" stroke-width="1.389" stroke-linejoin="round"/>
<path d="M778.0 284.0 L795.5 288.1" stroke="#ffb10d" stroke-width="1.389" stroke-linejoin="round"/>
<path d="M570.7 225.3 L565.0 217.3" stroke="#ffb10d" stroke-width="1.389" stroke-linejoin="round"/>
<path d="M585.5 221.5 L580.0 211.3" stroke="#ffb10d" stroke-width="1.389" stroke-linejoin="round"/>
<path d="M620.5 239.5 L623.3 236.2" stroke="#ffb10d" stroke-width="1.389" stroke-linejoin="round"/>
<path d="M1036.4 70.1 L1030.0 70.8 L1027.5 72.0 L1026.9 73.7" stroke="#ffb10d" stroke-width="1.389" stroke-linejoin="round"/>
<path d="M771.7 141.7 L776.0 112.0" stroke="#ff1c00" stroke-width="1.389" stroke-linejoin="round"/>
<path d="M882.2 61.1 L902.0 27.6" stroke="#ff1c00" stroke-width="2.400" stroke-linejoin="round"/>
<path d="M823.9 82.2 L825.0 78.9 L825.6 76.1 L825.0 72.2 L822.2 68.9 L818.1 68.1" stroke="#ff1c00" stroke-width="1.389" stroke-linejoin="round"/>
<path d="M847.6 77.6 L856.1 64.3" stroke="#ff1c00" stroke-width="1.389" stroke-linejoin="round"/>
<path d="M905.9 129.7 L920.0 120.5 L936.3 113.8" stroke="#ff1c00" stroke-width="1.389" stroke-linejoin="round"/>
<path d="M772.2 189.5 L778.1 166.6" stroke="#ff1c00" stroke-width="1.389" stroke-linejoin="round"/>
<path d="M796.7 206.3 L798.4 204.3" stroke="#ff1c00" stroke-width="1.389" stroke-linejoin="round"/>
<path d="M827.9 217.8 L837.1 208.7" stroke="#ff1c00" stroke-width="1.389" stroke-linejoin="round"/>
<path d="M835.8 256.6 L849.1 250.8" stroke="#ff1c00" stroke-width="1.389" stroke-linejoin="round"/>
<path d="M848.6 255.3 L864.1 245.0" stroke="#ff1c00" stroke-width="1.389" stroke-linejoin="round"/>
<path d="M793.9 94.7 L809.0 86.1" stroke="#dc11ff" stroke-width="1.389" stroke-linejoin="round"/>
<path d="M864.2 86.1 L875.0 84.2 L885.0 84.1" stroke="#dc11ff" stroke-width="1.389" stroke-linejoin="round"/>
<path d="M882.8 78.3 L890.0 78.9 L896.9 81.0" stroke="#dc11ff" stroke-width="1.389" stroke-linejoin="round"/>
<path d="M897.8 91.1 L903.3 93.1 L909.2 96.0" stroke="#dc11ff" stroke-width="1.389" stroke-linejoin="round"/>
<path d="M833.3 116.8 L841.8 116.0" stroke="#dc11ff" stroke-width="1.389" stroke-linejoin="round"/>
<path d="M741.9 209.8 L750.2 209.8" stroke="#dc11ff" stroke-width="1.389" stroke-linejoin="round"/>
<path d="M727.1 232.4 L737.5 233.2" stroke="#dc11ff" stroke-width="1.389" stroke-linejoin="round"/>
<path d="M702.8 158.3 L716.7 152.2" stroke="#dc11ff" stroke-width="1.389" stroke-linejoin="round"/>
<path d="M586.3 237.0 L598.7 247.9" stroke="#59d100" stroke-width="1.389" stroke-linejoin="round"/>
<path d="M735.7 174.8 L743.0 184.1" stroke="#59d100" stroke-width="1.389" stroke-linejoin="round"/>
<path d="M916.1 83.3 L920.6 90.0 L925.0 98.9" stroke="#59d100" stroke-width="1.389" stroke-linejoin="round"/>
<path d="M1022.7 79.1 L1013.4 81.5 L1008.5 84.0 L1006.0 86.9" stroke="#59d100" stroke-width="1.389" stroke-linejoin="round"/>
<path d="M751.7 93.9 L740.6 94.1" stroke="#a4ff27" stroke-width="1.389" stroke-linejoin="round"/>
<path d="M911.1 120.8 L923.8 116.8" stroke="#a4ff27" stroke-width="1.389" stroke-linejoin="round"/>
<path d="M827.3 143.4 L836.0 135.1" stroke="#a4ff27" stroke-width="1.389" stroke-linejoin="round"/>
<path d="M790.0 99.4 L695.6 122.8" stroke="#666666" stroke-width="1.389" stroke-linejoin="round"/>
<path d="M734.8 121.9 L723.9 129.4" stroke="#666666" stroke-width="1.389" stroke-linejoin="round"/>
<path d="M867.0 51.1 L840.0 52.8 L800.0 64.5 L740.0 82.8" stroke="#666666" stroke-width="1.389" stroke-linejoin="round"/>
<path d="M840.6 64.5 L800.6 76.7" stroke="#666666" stroke-width="1.389" stroke-linejoin="round"/>
<path d="M774.4 103.3 L763.3 107.8" stroke="#666666" stroke-width="1.389" stroke-linejoin="round"/>
<path d="M784.4 115.6 L775.6 124.4" stroke="#666666" stroke-width="1.389" stroke-linejoin="round"/>
<path d="M875.6 53.5 L867.0 65.1 L867.8 77.6" stroke="#666666" stroke-width="1.389" stroke-linejoin="round"/>
<path d="M856.9 113.4 L842.9 108.7" stroke="#666666" stroke-width="1.389" stroke-linejoin="round"/>
<path d="M853.8 118.8 L862.4 121.1" stroke="#666666" stroke-width="1.389" stroke-linejoin="round"/>
<path d="M876.1 107.5 L883.3 107.8" stroke="#666666" stroke-width="1.389" stroke-linejoin="round"/>
<path d="M856.9 146.8 L866.3 149.1" stroke="#666666" stroke-width="1.389" stroke-linejoin="round"/>
<path d="M940.0 154.1 L929.3 152.3" stroke="#666666" stroke-width="1.389" stroke-linejoin="round"/>
<path d="M925.6 107.8 L934.7 119.6" stroke="#666666" stroke-width="1.389" stroke-linejoin="round"/>
<path d="M898.9 82.8 L903.3 88.3" stroke="#666666" stroke-width="1.389" stroke-linejoin="round"/>
<path d="M774.5 104.8 L757.3 127.4" stroke="#666666" stroke-width="1.389" stroke-linejoin="round"/>
<path d="M693.3 150.6 L651.1 182.2" stroke="#666666" stroke-width="1.389" stroke-linejoin="round"/>
<path d="M751.1 131.1 L737.8 141.1" stroke="#666666" stroke-width="1.389" stroke-linejoin="round"/>
<path d="M768.9 156.7 L772.8 162.8" stroke="#666666" stroke-width="1.389" stroke-linejoin="round"/>
<path d="M702.2 168.3 L715.6 168.9" stroke="#666666" stroke-width="1.389" stroke-linejoin="round"/>
<path d="M726.0 194.7 L726.9 204.2" stroke="#666666" stroke-width="1.389" stroke-linejoin="round"/>
<path d="M684.3 278.3 L677.3 287.3" stroke="#666666" stroke-width="1.389" stroke-linejoin="round"/>
<path d="M841.0 179.5 L831.2 193.4" stroke="#666666" stroke-width="1.389" stroke-linejoin="round"/>
<path d="M778.7 189.8 L774.8 194.7" stroke="#666666" stroke-width="1.389" stroke-linejoin="round"/>
<path d="M549.1 276.7 L567.6 265.6" stroke="#666666" stroke-width="1.389" stroke-linejoin="round"/>
<path d="M656.7 180.6 L648.9 182.2" stroke="#666666" stroke-width="1.389" stroke-linejoin="round"/>
<path d="M924.7 35.6 L960.0 48.0 L1000.0 64.0 L1025.8 74.5" stroke="#666666" stroke-width="1.389" stroke-linejoin="round"/>
<path d="M997.0 66.7 L1011.8 79.9" stroke="#666666" stroke-width="1.389" stroke-linejoin="round"/>
<path d="M1039.0 113.4 L1034.5 121.0 L1033.6 130.5" stroke="#666666" stroke-width="1.389" stroke-linejoin="round"/>
<path d="M768.9 76.1 L767.8 74.4 L765.0 73.1 L761.1 72.8" stroke="#ffb10d" stroke-width="1.389" stroke-linejoin="round"/>
<path d="M908.3 30.6 L926.1 38.1" stroke="#ff1c00" stroke-width="1.389" stroke-linejoin="round"/>
<path d="M606.4 271.8h6.94M609.9 268.3v6.94M606.5 269.9h6.94M609.9 266.4v6.94M605.2 270.1h6.94M608.7 266.6v6.94M608.9 271.6h6.94M612.4 268.1v6.94M608.7 271.2h6.94M612.2 267.7v6.94M607.6 271.0h6.94M611.1 267.6v6.94M603.9 272.6h6.94M607.4 269.1v6.94M607.8 271.7h6.94M611.3 268.3v6.94M603.8 266.6h6.94M607.3 263.1v6.94M605.3 269.5h6.94M608.7 266.1v6.94M607.4 270.5h6.94M610.9 267.0v6.94M607.8 269.1h6.94M611.3 265.7v6.94M607.4 271.5h6.94M610.9 268.0v6.94M605.7 274.6h6.94M609.2 271.1v6.94M607.9 273.4h6.94M611.4 269.9v6.94M605.8 268.9h6.94M609.2 265.4v6.94M606.3 270.4h6.94M609.7 266.9v6.94M603.8 277.6h6.94M607.3 274.1v6.94M608.0 271.2h6.94M611.5 267.7v6.94M606.1 268.4h6.94M609.5 264.9v6.94M595.8 271.8h6.94M599.3 268.3v6.94M605.9 273.4h6.94M609.4 269.9v6.94M605.4 271.2h6.94M608.9 267.7v6.94M607.6 267.2h6.94M611.1 263.7v6.94M762.6 276.4h6.94M766.1 272.9v6.94M764.8 285.0h6.94M768.3 281.5v6.94M764.0 279.0h6.94M767.5 275.5v6.94M768.5 283.0h6.94M772.0 279.5v6.94M776.5 285.6h6.94M780.0 282.1v6.94M755.6 277.4h6.94M759.1 273.9v6.94M771.5 284.0h6.94M775.0 280.5v6.94M774.5 286.0h6.94M778.0 282.5v6.94M789.8 281.7h6.94M793.3 278.2v6.94M792.6 298.9h6.94M796.1 295.4v6.94M766.5 284.0h6.94M770.0 280.5v6.94M599.1 219.9h6.94M602.6 216.4v6.94M606.1 228.5h6.94M609.6 225.0v6.94M606.9 230.8h6.94M610.4 227.3v6.94M604.5 226.0h6.94M608.0 222.5v6.94M602.5 224.0h6.94M606.0 220.5v6.94M607.5 229.5h6.94M611.0 226.0v6.94M605.5 231.5h6.94M609.0 228.0v6.94M594.4 217.9h6.94M597.9 214.4v6.94M493.7 200.6h6.94M497.2 197.1v6.94M521.5 198.9h6.94M525.0 195.4v6.94M512.6 193.6h6.94M516.1 190.1v6.94M514.8 182.2h6.94M518.3 178.7v6.94M735.6 251.8h6.94M739.0 248.4v6.94M751.9 248.5h6.94M755.4 245.0v6.94M733.1 240.3h6.94M736.6 236.9v6.94" stroke="#ff0000" stroke-width="1.389"/>
<path d="M824.1 78.9h2.40M825.3 77.7v2.40M848.7 73.7h2.40M849.9 72.5v2.40M813.7 103.2h2.40M814.9 102.0v2.40M819.9 109.9h2.40M821.1 108.7v2.40M922.7 87.9h2.40M923.9 86.7v2.40M886.9 92.1h2.40M888.1 90.9v2.40M914.9 42.2h2.40M916.1 41.0v2.40M668.9 164.2h2.40M670.1 163.0v2.40M706.8 187.0h2.40M708.0 185.8v2.40M697.7 200.9h2.40M698.9 199.7v2.40M734.6 209.4h2.40M735.8 208.2v2.40M744.9 217.0h2.40M746.1 215.8v2.40M777.7 180.9h2.40M778.9 179.7v2.40M791.0 200.1h2.40M792.2 198.9v2.40M751.0 229.9h2.40M752.2 228.7v2.40M729.2 264.9h2.40M730.4 263.7v2.40M701.8 271.7h2.40M703.0 270.5v2.40M697.1 275.1h2.40M698.3 273.9v2.40M794.3 288.1h2.40M795.5 286.9v2.40M563.8 217.3h2.40M565.0 216.1v2.40M578.8 211.3h2.40M580.0 210.1v2.40M622.1 236.2h2.40M623.3 235.0v2.40M1025.7 73.7h2.40M1026.9 72.5v2.40M774.8 112.0h2.40M776.0 110.8v2.40M900.8 27.6h2.40M902.0 26.4v2.40M816.9 68.1h2.40M818.1 66.9v2.40M854.9 64.3h2.40M856.1 63.1v2.40M935.1 113.8h2.40M936.3 112.6v2.40M776.9 166.6h2.40M778.1 165.4v2.40M797.2 204.3h2.40M798.4 203.1v2.40M835.9 208.7h2.40M837.1 207.5v2.40M847.9 250.8h2.40M849.1 249.6v2.40M862.9 245.0h2.40M864.1 243.8v2.40M807.8 86.1h2.40M809.0 84.9v2.40M883.8 84.1h2.40M885.0 82.9v2.40M895.7 81.0h2.40M896.9 79.8v2.40M908.0 96.0h2.40M909.2 94.8v2.40M840.6 116.0h2.40M841.8 114.8v2.40M749.0 209.8h2.40M750.2 208.6v2.40M736.3 233.2h2.40M737.5 232.0v2.40M715.5 152.2h2.40M716.7 151.0v2.40M597.5 247.9h2.40M598.7 246.7v2.40M741.8 184.1h2.40M743.0 182.9v2.40M923.8 98.9h2.40M925.0 97.7v2.40M1004.8 86.9h2.40M1006.0 85.7v2.40M739.4 94.1h2.40M740.6 92.9v2.40M922.6 116.8h2.40M923.8 115.6v2.40M834.8 135.1h2.40M836.0 133.9v2.40M759.9 72.8h2.40M761.1 71.6v2.40M924.9 38.1h2.40M926.1 36.9v2.40" stroke="#ff6347" stroke-width="1.5"/>
<path d="M632.6 269.5 L631.1 272.7 L629.2 275.7 L627.1 278.6 L624.8 281.4 L622.3 284.0 L619.5 286.3 L616.6 288.3 L613.6 290.1 L610.4 291.5 L607.2 292.5 L604.0 293.2 L600.9 293.5 L597.8 293.4 L594.8 292.9 L592.0 292.0 L589.5 290.8 L587.2 289.2 L585.3 287.3 L583.8 285.1 L582.7 282.7 L582.0 280.0 L581.9 277.2 L582.2 274.2 L583.1 271.1 L584.5 268.0 L586.3 264.9 L588.6 261.8 L591.3 258.9 L594.3 256.1 L597.7 253.6 L601.2 251.3 L604.8 249.3 L608.5 247.6 L612.2 246.3 L615.8 245.3 L619.2 244.8 L622.4 244.7 L625.3 245.0 L627.9 245.8 L630.1 246.9 L632.0 248.4 L633.4 250.2 L634.4 252.4 L635.1 254.8 L635.3 257.5 L635.2 260.4 L634.7 263.4 L633.8 266.4 L632.6 269.5" stroke="#ffb10d" stroke-width="2.083" stroke-linejoin="round"/>
<path d="M630.5 230.0 L627.8 233.1 L624.8 236.2 L621.6 239.0 L618.2 241.8 L614.6 244.3 L611.0 246.6 L607.3 248.6 L603.6 250.3 L600.0 251.6 L596.4 252.7 L592.9 253.3 L589.7 253.6 L586.6 253.5 L583.8 253.0 L581.3 252.2 L579.3 251.0 L577.6 249.5 L576.4 247.6 L575.7 245.5 L575.5 243.1 L575.9 240.4 L576.8 237.6 L578.4 234.7 L580.4 231.6 L583.0 228.5 L586.1 225.4 L589.6 222.3 L593.5 219.3 L597.7 216.5 L602.0 213.9 L606.5 211.6 L611.0 209.5 L615.5 207.8 L619.7 206.4 L623.7 205.5 L627.3 204.9 L630.6 204.8 L633.3 205.1 L635.6 205.9 L637.3 207.0 L638.5 208.6 L639.2 210.5 L639.3 212.7 L639.0 215.2 L638.1 217.9 L636.8 220.8 L635.1 223.8 L633.0 226.9 L630.5 230.0" stroke="#dc11ff" stroke-width="2.083" stroke-linejoin="round"/>
<path d="M522.3 198.3 L517.0 201.4 L511.6 204.4 L506.1 207.3 L500.6 209.9 L495.2 212.4 L489.8 214.6 L484.7 216.6 L479.7 218.3 L475.1 219.6 L470.8 220.6 L466.9 221.2 L463.4 221.5 L460.4 221.4 L457.9 220.9 L456.1 220.1 L454.8 219.0 L454.3 217.5 L454.4 215.7 L455.3 213.6 L457.0 211.2 L459.4 208.6 L462.5 205.8 L466.3 202.9 L470.9 199.9 L476.0 196.8 L481.7 193.7 L487.9 190.6 L494.3 187.6 L501.0 184.7 L507.7 182.1 L514.4 179.7 L520.8 177.6 L526.9 175.8 L532.5 174.4 L537.4 173.4 L541.5 172.8 L544.9 172.7 L547.3 173.1 L548.9 173.8 L549.5 175.0 L549.2 176.6 L548.1 178.6 L546.2 180.8 L543.5 183.4 L540.2 186.1 L536.4 189.1 L532.1 192.1 L527.3 195.2 L522.3 198.3" stroke="#59d100" stroke-width="2.083" stroke-linejoin="round"/>
<path d="M777.3 247.7 L776.1 250.8 L774.6 253.8 L772.7 256.7 L770.6 259.4 L768.2 262.0 L765.5 264.3 L762.7 266.3 L759.7 268.0 L756.6 269.4 L753.5 270.4 L750.3 271.1 L747.1 271.4 L744.0 271.3 L741.0 270.8 L738.2 270.0 L735.7 268.8 L733.4 267.2 L731.4 265.3 L729.7 263.2 L728.5 260.7 L727.7 258.1 L727.3 255.3 L727.4 252.3 L728.0 249.2 L729.0 246.1 L730.5 243.0 L732.4 239.9 L734.6 237.0 L737.2 234.2 L740.1 231.6 L743.2 229.3 L746.5 227.2 L749.9 225.5 L753.3 224.2 L756.7 223.3 L760.0 222.7 L763.2 222.6 L766.2 222.9 L768.9 223.7 L771.3 224.8 L773.5 226.3 L775.3 228.2 L776.7 230.4 L777.8 232.9 L778.4 235.6 L778.7 238.4 L778.6 241.5 L778.2 244.5 L777.3 247.7" stroke="#a4ff27" stroke-width="2.083" stroke-linejoin="round"/>
<path d="M802.1 281.4 L801.5 284.5 L800.5 287.6 L799.1 290.5 L797.5 293.3 L795.5 295.9 L793.3 298.2 L790.8 300.3 L788.1 302.0 L785.3 303.5 L782.3 304.5 L779.2 305.2 L776.1 305.5 L773.0 305.4 L769.9 304.9 L767.0 304.0 L764.2 302.8 L761.6 301.2 L759.3 299.3 L757.3 297.1 L755.7 294.6 L754.4 291.9 L753.5 289.1 L753.1 286.1 L753.1 283.0 L753.5 279.9 L754.4 276.8 L755.7 273.7 L757.4 270.8 L759.4 268.1 L761.8 265.5 L764.4 263.2 L767.3 261.2 L770.3 259.6 L773.5 258.3 L776.7 257.3 L779.9 256.8 L783.0 256.7 L786.0 257.0 L788.9 257.7 L791.6 258.9 L794.0 260.3 L796.2 262.2 L798.1 264.3 L799.7 266.8 L800.9 269.4 L801.7 272.3 L802.2 275.2 L802.3 278.3 L802.1 281.4" stroke="#ff1c00" stroke-width="2.083" stroke-linejoin="round"/>
</g>
<text x="902.7" y="624.0" text-anchor="middle" font-size="9.72" fill="#808080" font-family="DejaVu Sans, Liberation Sans, sans-serif">−90<tspan dx="1.3" dy="-5.5" font-size="7.6" fill-opacity="0.8">∘</tspan></text>
<text x="902.7" y="525.2" text-anchor="middle" font-size="9.72" fill="#808080" font-family="DejaVu Sans, Liberation Sans, sans-serif">−60<tspan dx="1.3" dy="-5.5" font-size="7.6" fill-opacity="0.8">∘</tspan></text>
<text x="902.7" y="428.2" text-anchor="middle" font-size="9.72" fill="#808080" font-family="DejaVu Sans, Liberation Sans, sans-serif">−30<tspan dx="1.3" dy="-5.5" font-size="7.6" fill-opacity="0.8">∘</tspan></text>
<text x="902.7" y="330.2" text-anchor="middle" font-size="9.72" fill="#808080" font-family="DejaVu Sans, Liberation Sans, sans-serif">+0<tspan dx="1.3" dy="-5.5" font-size="7.6" fill-opacity="0.8">∘</tspan></text>
<text x="902.6" y="221.4" text-anchor="middle" font-size="9.72" fill="#808080" font-family="DejaVu Sans, Liberation Sans, sans-serif">+30<tspan dx="1.3" dy="-5.5" font-size="7.6" fill-opacity="0.8">∘</tspan></text>
<text x="902.6" y="123.4" text-anchor="middle" font-size="9.72" fill="#808080" font-family="DejaVu Sans, Liberation Sans, sans-serif">+60<tspan dx="1.3" dy="-5.5" font-size="7.6" fill-opacity="0.8">∘</tspan></text>
<text x="902.6" y="25.4" text-anchor="middle" font-size="9.72" fill="#808080" font-family="DejaVu Sans, Liberation Sans, sans-serif">+90<tspan dx="1.3" dy="-5.5" font-size="7.6" fill-opacity="0.8">∘</tspan></text>
<text x="902.7" y="330.2" text-anchor="middle" font-size="9.72" fill="#808080" font-family="DejaVu Sans, Liberation Sans, sans-serif">+0<tspan dx="1.3" dy="-5.5" font-size="7.6" fill-opacity="0.8">∘</tspan></text>
<text x="804.3" y="330.2" text-anchor="middle" font-size="9.72" fill="#808080" font-family="DejaVu Sans, Liberation Sans, sans-serif">+30<tspan dx="1.3" dy="-5.5" font-size="7.6" fill-opacity="0.8">∘</tspan></text>
<text x="706.7" y="330.2" text-anchor="middle" font-size="9.72" fill="#808080" font-family="DejaVu Sans, Liberation Sans, sans-serif">+60<tspan dx="1.3" dy="-5.5" font-size="7.6" fill-opacity="0.8">∘</tspan></text>
<text x="609.0" y="330.2" text-anchor="middle" font-size="9.72" fill="#808080" font-family="DejaVu Sans, Liberation Sans, sans-serif">+90<tspan dx="1.3" dy="-5.5" font-size="7.6" fill-opacity="0.8">∘</tspan></text>
<text x="511.3" y="330.2" text-anchor="middle" font-size="9.72" fill="#808080" font-family="DejaVu Sans, Liberation Sans, sans-serif">+120<tspan dx="1.3" dy="-5.5" font-size="7.6" fill-opacity="0.8">∘</tspan></text>
<text x="413.7" y="330.2" text-anchor="middle" font-size="9.72" fill="#808080" font-family="DejaVu Sans, Liberation Sans, sans-serif">+150<tspan dx="1.3" dy="-5.5" font-size="7.6" fill-opacity="0.8">∘</tspan></text>
<text x="316.0" y="330.2" text-anchor="middle" font-size="9.72" fill="#808080" font-family="DejaVu Sans, Liberation Sans, sans-serif">+180<tspan dx="1.3" dy="-5.5" font-size="7.6" fill-opacity="0.8">∘</tspan></text>
<text x="1390.3" y="330.2" text-anchor="middle" font-size="9.72" fill="#808080" font-family="DejaVu Sans, Liberation Sans, sans-serif">+210<tspan dx="1.3" dy="-5.5" font-size="7.6" fill-opacity="0.8">∘</tspan></text>
<text x="1292.7" y="330.2" text-anchor="middle" font-size="9.72" fill="#808080" font-family="DejaVu Sans, Liberation Sans, sans-serif">+240<tspan dx="1.3" dy="-5.5" font-size="7.6" fill-opacity="0.8">∘</tspan></text>
<text x="1195.0" y="330.2" text-anchor="middle" font-size="9.72" fill="#808080" font-family="DejaVu Sans, Liberation Sans, sans-serif">+270<tspan dx="1.3" dy="-5.5" font-size="7.6" fill-opacity="0.8">∘</tspan></text>
<text x="1097.3" y="330.2" text-anchor="middle" font-size="9.72" fill="#808080" font-family="DejaVu Sans, Liberation Sans, sans-serif">+300<tspan dx="1.3" dy="-5.5" font-size="7.6" fill-opacity="0.8">∘</tspan></text>
<text x="999.7" y="330.2" text-anchor="middle" font-size="9.72" fill="#808080" font-family="DejaVu Sans, Liberation Sans, sans-serif">+330<tspan dx="1.3" dy="-5.5" font-size="7.6" fill-opacity="0.8">∘</tspan></text>
<text x="1488.0" y="330.2" text-anchor="middle" font-size="9.72" fill="#808080" font-family="DejaVu Sans, Liberation Sans, sans-serif">+180<tspan dx="1.3" dy="-5.5" font-size="7.6" fill-opacity="0.8">∘</tspan></text>
<text x="608.4" y="272.2" text-anchor="middle" font-size="11.11" fill="#fff" font-family="DejaVu Sans, Liberation Sans, sans-serif">ORI</text>
<text x="606.8" y="232.2" text-anchor="middle" font-size="11.11" fill="#fff" font-family="DejaVu Sans, Liberation Sans, sans-serif">EGE</text>
<text x="499.9" y="200.2" text-anchor="middle" font-size="11.11" fill="#fff" font-family="DejaVu Sans, Liberation Sans, sans-serif">LMI</text>
<text x="753.1" y="250.1" text-anchor="middle" font-size="11.11" fill="#fff" font-family="DejaVu Sans, Liberation Sans, sans-serif">CTA</text>
<text x="777.7" y="284.2" text-anchor="middle" font-size="11.11" fill="#fff" font-family="DejaVu Sans, Liberation Sans, sans-serif">STA</text>
<text x="315.10" y="29.60" font-size="13.89" fill="#fff" font-family="DejaVu Sans Mono, Liberation Mono, monospace">DK000B</text>
<text x="315.10" y="42.71" font-size="13.89" fill="#fff" font-family="DejaVu Sans Mono, Liberation Mono, monospace">Beg: 20251018 18:06:38 (sol = 205.26°)</text>
<text x="315.10" y="55.82" font-size="13.89" fill="#fff" font-family="DejaVu Sans Mono, Liberation Mono, monospace">End: 20251019 04:44:12 (sol = 205.70°)</text>
<text x="315.10" y="68.93" font-size="13.89" fill="#fff" font-family="DejaVu Sans Mono, Liberation Mono, monospace">--------------------------------------</text>
<text x="315.10" y="82.04" font-size="13.89" fill="#fff" font-family="DejaVu Sans Mono, Liberation Mono, monospace">...: 47</text>
<text x="315.10" y="95.15" font-size="13.89" fill="#fff" font-family="DejaVu Sans Mono, Liberation Mono, monospace">ORI: 24</text>
<text x="315.10" y="108.26" font-size="13.89" fill="#fff" font-family="DejaVu Sans Mono, Liberation Mono, monospace">STA: 12</text>
<text x="315.10" y="121.37" font-size="13.89" fill="#fff" font-family="DejaVu Sans Mono, Liberation Mono, monospace">EGE: 8</text>
<text x="315.10" y="134.48" font-size="13.89" fill="#fff" font-family="DejaVu Sans Mono, Liberation Mono, monospace">LMI: 4</text>
<text x="315.10" y="147.59" font-size="13.89" fill="#fff" font-family="DejaVu Sans Mono, Liberation Mono, monospace">CTA: 3</text>
<text transform="translate(149.10 670.20) rotate(-90)" text-anchor="middle" font-size="27.78" fill="#4e4e4e" font-family="DejaVu Sans, Liberation Sans, sans-serif">APR</text>
<text transform="translate(293.60 674.00) rotate(-90)" text-anchor="middle" font-size="27.78" fill="#4e4e4e" font-family="DejaVu Sans, Liberation Sans, sans-serif">MAY</text>
<text transform="translate(436.10 665.00) rotate(-90)" text-anchor="middle" font-size="27.78" fill="#4e4e4e" font-family="DejaVu Sans, Liberation Sans, sans-serif">JUN</text>
<text transform="translate(576.10 663.00) rotate(-90)" text-anchor="middle" font-size="27.78" fill="#4e4e4e" font-family="DejaVu Sans, Liberation Sans, sans-serif">JUL</text>
<text transform="translate(722.85 672.00) rotate(-90)" text-anchor="middle" font-size="27.78" fill="#4e4e4e" font-family="DejaVu Sans, Liberation Sans, sans-serif">AUG</text>
<text transform="translate(871.60 669.70) rotate(-90)" text-anchor="middle" font-size="27.78" fill="#4e4e4e" font-family="DejaVu Sans, Liberation Sans, sans-serif">SEP</text>
<text transform="translate(1015.20 673.20) rotate(-90)" text-anchor="middle" font-size="27.78" fill="#4e4e4e" font-family="DejaVu Sans, Liberation Sans, sans-serif">OCT</text>
<text transform="translate(1168.35 675.50) rotate(-90)" text-anchor="middle" font-size="27.78" fill="#4e4e4e" font-family="DejaVu Sans, Liberation Sans, sans-serif">NOV</text>
<text transform="translate(1317.35 673.00) rotate(-90)" text-anchor="middle" font-size="27.78" fill="#4e4e4e" font-family="DejaVu Sans, Liberation Sans, sans-serif">DEC</text>
<text transform="translate(1469.10 664.00) rotate(-90)" text-anchor="middle" font-size="27.78" fill="#4e4e4e" font-family="DejaVu Sans, Liberation Sans, sans-serif">JAN</text>
<text transform="translate(1627.85 671.20) rotate(-90)" text-anchor="middle" font-size="27.78" fill="#4e4e4e" font-family="DejaVu Sans, Liberation Sans, sans-serif">FEB</text>
<text transform="translate(1765.50 675.50) rotate(-90)" text-anchor="middle" font-size="27.78" fill="#4e4e4e" font-family="DejaVu Sans, Liberation Sans, sans-serif">MAR</text>
<g clip-path="url(#ca)" fill="none">
<path d="M73.70 842.20V641.50M218.11 842.20V641.50M365.02 842.20V641.50M505.06 842.20V641.50M650.25 842.20V641.50M796.91 842.20V641.50M940.14 842.20V641.50M1090.98 842.20V641.50M1239.11 842.20V641.50M1394.12 842.20V641.50M1548.38 842.20V641.50M1687.49 842.20V641.50" stroke="#fff" stroke-opacity="0.33" stroke-width="2.083" stroke-dasharray="2.083 3.437"/>
<path d="M107.74 834.00H127.36M166.60 834.00H343.19M367.71 834.00H622.78M637.50 834.00H784.65M809.18 834.00H897.47M922.00 834.00H971.05M985.76 834.00H1064.24M1083.87 834.00H1201.59M1245.73 834.00H1324.22M1338.93 834.00H1353.65M1383.08 834.00H1441.94M1461.56 834.00H1510.61M1525.33 834.00H1544.95M1726.44 834.00H1746.06M1760.77 834.00H1780.39" stroke="#ec84ee" stroke-width="4.167" stroke-linecap="square"/>
<path d="M166.60 818.00H186.22M225.47 818.00H284.33M313.76 818.00H338.28M367.71 818.00H490.34M509.96 818.00H652.21M706.17 818.00H735.60M774.84 818.00H843.51M872.94 818.00H985.76M1005.38 818.00H1015.19M1064.24 818.00H1211.40M1245.73 818.00H1265.36M1294.79 818.00H1314.41M1343.84 818.00H1363.46M1387.98 818.00H1427.22M1461.56 818.00H1481.18M1549.85 818.00H1569.47" stroke="#dc11ff" stroke-width="4.167" stroke-linecap="square"/>
<path d="M166.60 802.00H186.22M259.80 802.00H485.44M509.96 802.00H612.97M627.69 802.00H715.98M730.70 802.00H823.89M951.43 802.00H1147.63M1162.35 802.00H1245.73M1260.45 802.00H1441.94M1461.56 802.00H1481.18M1554.76 802.00H1574.38" stroke="#ff1c00" stroke-width="4.167" stroke-linecap="square"/>
<path d="M196.03 785.00H215.66M323.57 785.00H505.06M519.77 785.00H539.39M559.02 785.00H681.64M809.18 785.00H828.80M956.33 785.00H971.05M990.67 785.00H1123.11M1157.44 785.00H1216.30M1245.73 785.00H1265.36M1319.31 785.00H1338.93M1397.79 785.00H1417.41M1466.47 785.00H1647.96" stroke="#ffb10d" stroke-width="4.167" stroke-linecap="square"/>
<path d="M343.19 769.00H367.71M411.86 769.00H446.20M470.72 769.00H490.34M529.58 769.00H544.30M563.92 769.00H588.45M617.88 769.00H647.31M961.24 769.00H985.76M1064.24 769.00H1083.87M1103.49 769.00H1123.11M1162.35 769.00H1191.78M1250.64 769.00H1270.26M1427.22 769.00H1510.61" stroke="#fff000" stroke-width="4.167" stroke-linecap="square"/>
<path d="M421.67 752.50H441.29M534.49 752.50H554.11M568.83 752.50H588.45M622.78 752.50H740.51M971.05 752.50H1132.92M1186.87 752.50H1343.84M1471.37 752.50H1490.99" stroke="#a4ff27" stroke-width="4.167" stroke-linecap="square"/>
<path d="M431.48 736.00H451.10M578.64 736.00H730.70M995.57 736.00H1103.49M1118.20 736.00H1221.21M1265.36 736.00H1289.88M1490.99 736.00H1510.61" stroke="#59d100" stroke-width="4.167" stroke-linecap="square"/>
<path d="M593.35 720.00H612.97M657.12 720.00H769.94M1074.05 720.00H1240.83M1265.36 720.00H1284.98" stroke="#00fa72" stroke-width="4.167" stroke-linecap="square"/>
<path d="M598.26 703.00H730.70M1093.68 703.00H1118.20M1201.59 703.00H1221.21M1275.17 703.00H1324.22" stroke="#00e0ff" stroke-width="4.167" stroke-linecap="square"/>
<path d="M1113.30 687.00H1132.92" stroke="#000dcd" stroke-width="4.167" stroke-linecap="square"/>
<path d="M1026.43 842.30V636.50" stroke="#ff0000" stroke-width="1.389" stroke-dasharray="5.139 2.222"/>
<path d="M1028.59 842.30V636.50" stroke="#ff0000" stroke-width="1.389" stroke-dasharray="5.139 2.222"/>
<path d="M113.38 834.00h8.34M117.55 829.83v8.34M240.92 834.00h8.34M245.09 829.83v8.34M510.70 834.00h8.34M514.87 829.83v8.34M706.90 834.00h8.34M711.07 829.83v8.34M832.97 834.00h8.34M837.14 829.83v8.34M961.97 834.00h8.34M966.14 829.83v8.34M986.50 834.00h8.34M990.67 829.83v8.34M1115.99 834.00h8.34M1120.16 829.83v8.34M1295.52 834.00h8.34M1299.69 829.83v8.34M1342.12 834.00h8.34M1346.29 829.83v8.34M1413.24 834.00h8.34M1417.41 829.83v8.34M1481.92 834.00h8.34M1486.09 829.83v8.34M1530.97 834.00h8.34M1535.14 829.83v8.34M1732.08 834.00h8.34M1736.25 829.83v8.34M1766.41 834.00h8.34M1770.58 829.83v8.34M172.24 818.00h8.34M176.41 813.83v8.34M255.63 818.00h8.34M259.80 813.83v8.34M322.83 818.00h8.34M327.00 813.83v8.34M437.12 818.00h8.34M441.29 813.83v8.34M598.99 818.00h8.34M603.16 813.83v8.34M716.71 818.00h8.34M720.88 813.83v8.34M792.74 818.00h8.34M796.91 813.83v8.34M938.92 818.00h8.34M943.09 813.83v8.34M1006.12 818.00h8.34M1010.29 813.83v8.34M1153.27 818.00h8.34M1157.44 813.83v8.34M1251.38 818.00h8.34M1255.55 813.83v8.34M1300.43 818.00h8.34M1304.60 813.83v8.34M1349.48 818.00h8.34M1353.65 813.83v8.34M1402.94 818.00h8.34M1407.11 813.83v8.34M1467.20 818.00h8.34M1471.37 813.83v8.34M1555.49 818.00h8.34M1559.66 813.83v8.34M173.72 802.00h8.34M177.89 797.83v8.34M378.26 802.00h8.34M382.43 797.83v8.34M545.04 802.00h8.34M549.21 797.83v8.34M682.38 802.00h8.34M686.55 797.83v8.34M741.24 802.00h8.34M745.41 797.83v8.34M1074.79 802.00h8.34M1078.96 797.83v8.34M1217.04 802.00h8.34M1221.21 797.83v8.34M1305.33 802.00h8.34M1309.50 797.83v8.34M1467.20 802.00h8.34M1471.37 797.83v8.34M1560.40 802.00h8.34M1564.57 797.83v8.34M201.68 785.00h8.34M205.85 780.83v8.34M399.84 785.00h8.34M404.01 780.83v8.34M525.41 785.00h8.34M529.58 780.83v8.34M638.23 785.00h8.34M642.40 780.83v8.34M814.82 785.00h8.34M818.99 780.83v8.34M958.54 785.00h8.34M962.71 780.83v8.34M1039.96 785.00h8.34M1044.13 780.83v8.34M1187.61 785.00h8.34M1191.78 780.83v8.34M1251.38 785.00h8.34M1255.55 780.83v8.34M1324.95 785.00h8.34M1329.12 780.83v8.34M1403.43 785.00h8.34M1407.60 780.83v8.34M1545.68 785.00h8.34M1549.85 780.83v8.34M355.70 769.00h8.34M359.87 764.83v8.34M425.84 769.00h8.34M430.01 764.83v8.34M476.36 769.00h8.34M480.53 764.83v8.34M535.22 769.00h8.34M539.39 764.83v8.34M571.03 769.00h8.34M575.20 764.83v8.34M630.38 769.00h8.34M634.55 764.83v8.34M973.74 769.00h8.34M977.91 764.83v8.34M1069.88 769.00h8.34M1074.05 764.83v8.34M1109.13 769.00h8.34M1113.30 764.83v8.34M1177.80 769.00h8.34M1181.97 764.83v8.34M1256.28 769.00h8.34M1260.45 764.83v8.34M1467.20 769.00h8.34M1471.37 764.83v8.34M426.33 752.50h8.34M430.50 748.33v8.34M540.13 752.50h8.34M544.30 748.33v8.34M574.47 752.50h8.34M578.64 748.33v8.34M703.47 752.50h8.34M707.64 748.33v8.34M1094.41 752.50h8.34M1098.58 748.33v8.34M1271.00 752.50h8.34M1275.17 748.33v8.34M1477.01 752.50h8.34M1481.18 748.33v8.34M437.12 736.00h8.34M441.29 731.83v8.34M630.38 736.00h8.34M634.55 731.83v8.34M1038.98 736.00h8.34M1043.15 731.83v8.34M1167.99 736.00h8.34M1172.16 731.83v8.34M1274.92 736.00h8.34M1279.09 731.83v8.34M1496.63 736.00h8.34M1500.80 731.83v8.34M598.99 720.00h8.34M603.16 715.83v8.34M726.53 720.00h8.34M730.70 715.83v8.34M1187.61 720.00h8.34M1191.78 715.83v8.34M1271.00 720.00h8.34M1275.17 715.83v8.34M687.28 703.00h8.34M691.45 698.83v8.34M1101.77 703.00h8.34M1105.94 698.83v8.34M1207.23 703.00h8.34M1211.40 698.83v8.34M1300.43 703.00h8.34M1304.60 698.83v8.34M1118.94 687.00h8.34M1123.11 682.83v8.34" stroke="#fff" stroke-width="2.083"/>
</g>
<text x="117.55" y="831.60" text-anchor="middle" font-size="11.11" fill="#fff" font-family="DejaVu Sans, Liberation Sans, sans-serif">KSE</text>
<text x="254.90" y="831.60" text-anchor="middle" font-size="11.11" fill="#fff" font-family="DejaVu Sans, Liberation Sans, sans-serif">ETA</text>
<text x="495.25" y="831.60" text-anchor="middle" font-size="11.11" fill="#fff" font-family="DejaVu Sans, Liberation Sans, sans-serif">NZC</text>
<text x="711.07" y="831.60" text-anchor="middle" font-size="11.11" fill="#fff" font-family="DejaVu Sans, Liberation Sans, sans-serif">NDA</text>
<text x="853.32" y="831.60" text-anchor="middle" font-size="11.11" fill="#fff" font-family="DejaVu Sans, Liberation Sans, sans-serif">SPE</text>
<text x="945.05" y="831.60" text-anchor="middle" font-size="11.11" fill="#fff" font-family="DejaVu Sans, Liberation Sans, sans-serif">ARD</text>
<text x="1025.00" y="831.60" text-anchor="middle" font-size="11.11" fill="#fff" font-family="DejaVu Sans, Liberation Sans, sans-serif">EGE</text>
<text x="1142.73" y="831.60" text-anchor="middle" font-size="11.11" fill="#fff" font-family="DejaVu Sans, Liberation Sans, sans-serif">NTA</text>
<text x="1283.99" y="831.60" text-anchor="middle" font-size="11.11" fill="#fff" font-family="DejaVu Sans, Liberation Sans, sans-serif">MON</text>
<text x="1343.35" y="831.60" text-anchor="middle" font-size="11.11" fill="#fff" font-family="DejaVu Sans, Liberation Sans, sans-serif">URS</text>
<text x="1412.51" y="831.60" text-anchor="middle" font-size="11.11" fill="#fff" font-family="DejaVu Sans, Liberation Sans, sans-serif">AHY</text>
<text x="1486.09" y="831.60" text-anchor="middle" font-size="11.11" fill="#fff" font-family="DejaVu Sans, Liberation Sans, sans-serif">GUM</text>
<text x="1535.14" y="831.60" text-anchor="middle" font-size="11.11" fill="#fff" font-family="DejaVu Sans, Liberation Sans, sans-serif">OHY</text>
<text x="1735.76" y="831.60" text-anchor="middle" font-size="11.11" fill="#fff" font-family="DejaVu Sans, Liberation Sans, sans-serif">XHE</text>
<text x="1769.60" y="831.60" text-anchor="middle" font-size="11.11" fill="#fff" font-family="DejaVu Sans, Liberation Sans, sans-serif">EVI</text>
<text x="176.41" y="815.60" text-anchor="middle" font-size="11.11" fill="#fff" font-family="DejaVu Sans, Liberation Sans, sans-serif">AVB</text>
<text x="254.90" y="815.60" text-anchor="middle" font-size="11.11" fill="#fff" font-family="DejaVu Sans, Liberation Sans, sans-serif">ELY</text>
<text x="323.57" y="815.60" text-anchor="middle" font-size="11.11" fill="#fff" font-family="DejaVu Sans, Liberation Sans, sans-serif">CAM</text>
<text x="431.97" y="815.60" text-anchor="middle" font-size="11.11" fill="#fff" font-family="DejaVu Sans, Liberation Sans, sans-serif">SSG</text>
<text x="578.15" y="815.60" text-anchor="middle" font-size="11.11" fill="#fff" font-family="DejaVu Sans, Liberation Sans, sans-serif">PCA</text>
<text x="720.88" y="815.60" text-anchor="middle" font-size="11.11" fill="#fff" font-family="DejaVu Sans, Liberation Sans, sans-serif">AUD</text>
<text x="809.18" y="815.60" text-anchor="middle" font-size="11.11" fill="#fff" font-family="DejaVu Sans, Liberation Sans, sans-serif">AUR</text>
<text x="931.07" y="815.60" text-anchor="middle" font-size="11.11" fill="#fff" font-family="DejaVu Sans, Liberation Sans, sans-serif">DSX</text>
<text x="1010.29" y="815.60" text-anchor="middle" font-size="11.11" fill="#fff" font-family="DejaVu Sans, Liberation Sans, sans-serif">OCU</text>
<text x="1137.82" y="815.60" text-anchor="middle" font-size="11.11" fill="#fff" font-family="DejaVu Sans, Liberation Sans, sans-serif">OER</text>
<text x="1254.56" y="815.60" text-anchor="middle" font-size="11.11" fill="#fff" font-family="DejaVu Sans, Liberation Sans, sans-serif">DKD</text>
<text x="1304.60" y="815.60" text-anchor="middle" font-size="11.11" fill="#fff" font-family="DejaVu Sans, Liberation Sans, sans-serif">DSV</text>
<text x="1353.65" y="815.60" text-anchor="middle" font-size="11.11" fill="#fff" font-family="DejaVu Sans, Liberation Sans, sans-serif">ALY</text>
<text x="1407.60" y="815.60" text-anchor="middle" font-size="11.11" fill="#fff" font-family="DejaVu Sans, Liberation Sans, sans-serif">JLE</text>
<text x="1471.37" y="815.60" text-anchor="middle" font-size="11.11" fill="#fff" font-family="DejaVu Sans, Liberation Sans, sans-serif">SCC</text>
<text x="1558.68" y="815.60" text-anchor="middle" font-size="11.11" fill="#fff" font-family="DejaVu Sans, Liberation Sans, sans-serif">FEV</text>
<text x="176.41" y="799.60" text-anchor="middle" font-size="11.11" fill="#fff" font-family="DejaVu Sans, Liberation Sans, sans-serif">LYR</text>
<text x="372.62" y="799.60" text-anchor="middle" font-size="11.11" fill="#fff" font-family="DejaVu Sans, Liberation Sans, sans-serif">JMC</text>
<text x="559.02" y="799.60" text-anchor="middle" font-size="11.11" fill="#fff" font-family="DejaVu Sans, Liberation Sans, sans-serif">JPE</text>
<text x="671.83" y="799.60" text-anchor="middle" font-size="11.11" fill="#fff" font-family="DejaVu Sans, Liberation Sans, sans-serif">PAU</text>
<text x="774.35" y="799.60" text-anchor="middle" font-size="11.11" fill="#fff" font-family="DejaVu Sans, Liberation Sans, sans-serif">NIA</text>
<text x="1049.53" y="799.60" text-anchor="middle" font-size="11.11" fill="#fff" font-family="DejaVu Sans, Liberation Sans, sans-serif">STA</text>
<text x="1205.51" y="799.60" text-anchor="middle" font-size="11.11" fill="#fff" font-family="DejaVu Sans, Liberation Sans, sans-serif">NOO</text>
<text x="1351.20" y="799.60" text-anchor="middle" font-size="11.11" fill="#fff" font-family="DejaVu Sans, Liberation Sans, sans-serif">COM</text>
<text x="1471.37" y="799.60" text-anchor="middle" font-size="11.11" fill="#fff" font-family="DejaVu Sans, Liberation Sans, sans-serif">NCC</text>
<text x="1563.34" y="799.60" text-anchor="middle" font-size="11.11" fill="#fff" font-family="DejaVu Sans, Liberation Sans, sans-serif">FED</text>
<text x="205.85" y="782.60" text-anchor="middle" font-size="11.11" fill="#fff" font-family="DejaVu Sans, Liberation Sans, sans-serif">HVI</text>
<text x="411.86" y="782.60" text-anchor="middle" font-size="11.11" fill="#fff" font-family="DejaVu Sans, Liberation Sans, sans-serif">ARI</text>
<text x="529.58" y="782.60" text-anchor="middle" font-size="11.11" fill="#fff" font-family="DejaVu Sans, Liberation Sans, sans-serif">SZC</text>
<text x="617.39" y="782.60" text-anchor="middle" font-size="11.11" fill="#fff" font-family="DejaVu Sans, Liberation Sans, sans-serif">CAP</text>
<text x="818.99" y="782.60" text-anchor="middle" font-size="11.11" fill="#fff" font-family="DejaVu Sans, Liberation Sans, sans-serif">NUE</text>
<text x="961.24" y="782.60" text-anchor="middle" font-size="11.11" fill="#fff" font-family="DejaVu Sans, Liberation Sans, sans-serif">OCT</text>
<text x="1059.34" y="782.60" text-anchor="middle" font-size="11.11" fill="#fff" font-family="DejaVu Sans, Liberation Sans, sans-serif">ORI</text>
<text x="1186.87" y="782.60" text-anchor="middle" font-size="11.11" fill="#fff" font-family="DejaVu Sans, Liberation Sans, sans-serif">AMO</text>
<text x="1255.55" y="782.60" text-anchor="middle" font-size="11.11" fill="#fff" font-family="DejaVu Sans, Liberation Sans, sans-serif">DPC</text>
<text x="1329.12" y="782.60" text-anchor="middle" font-size="11.11" fill="#fff" font-family="DejaVu Sans, Liberation Sans, sans-serif">XVI</text>
<text x="1407.60" y="782.60" text-anchor="middle" font-size="11.11" fill="#fff" font-family="DejaVu Sans, Liberation Sans, sans-serif">QUA</text>
<text x="1559.17" y="782.60" text-anchor="middle" font-size="11.11" fill="#fff" font-family="DejaVu Sans, Liberation Sans, sans-serif">AAN</text>
<text x="352.51" y="766.60" text-anchor="middle" font-size="11.11" fill="#fff" font-family="DejaVu Sans, Liberation Sans, sans-serif">TAH</text>
<text x="431.48" y="766.60" text-anchor="middle" font-size="11.11" fill="#fff" font-family="DejaVu Sans, Liberation Sans, sans-serif">JEA</text>
<text x="480.53" y="766.60" text-anchor="middle" font-size="11.11" fill="#fff" font-family="DejaVu Sans, Liberation Sans, sans-serif">JIP</text>
<text x="536.94" y="766.60" text-anchor="middle" font-size="11.11" fill="#fff" font-family="DejaVu Sans, Liberation Sans, sans-serif">PPS</text>
<text x="578.15" y="766.60" text-anchor="middle" font-size="11.11" fill="#fff" font-family="DejaVu Sans, Liberation Sans, sans-serif">ZCS</text>
<text x="632.59" y="766.60" text-anchor="middle" font-size="11.11" fill="#fff" font-family="DejaVu Sans, Liberation Sans, sans-serif">GDR</text>
<text x="970.07" y="766.60" text-anchor="middle" font-size="11.11" fill="#fff" font-family="DejaVu Sans, Liberation Sans, sans-serif">DRA</text>
<text x="1073.32" y="766.60" text-anchor="middle" font-size="11.11" fill="#fff" font-family="DejaVu Sans, Liberation Sans, sans-serif">LUM</text>
<text x="1113.30" y="766.60" text-anchor="middle" font-size="11.11" fill="#fff" font-family="DejaVu Sans, Liberation Sans, sans-serif">RPU</text>
<text x="1177.06" y="766.60" text-anchor="middle" font-size="11.11" fill="#fff" font-family="DejaVu Sans, Liberation Sans, sans-serif">THA</text>
<text x="1259.47" y="766.60" text-anchor="middle" font-size="11.11" fill="#fff" font-family="DejaVu Sans, Liberation Sans, sans-serif">PSU</text>
<text x="1470.88" y="766.60" text-anchor="middle" font-size="11.11" fill="#fff" font-family="DejaVu Sans, Liberation Sans, sans-serif">XCB</text>
<text x="431.48" y="750.10" text-anchor="middle" font-size="11.11" fill="#fff" font-family="DejaVu Sans, Liberation Sans, sans-serif">JRC</text>
<text x="544.30" y="750.10" text-anchor="middle" font-size="11.11" fill="#fff" font-family="DejaVu Sans, Liberation Sans, sans-serif">CAN</text>
<text x="578.64" y="750.10" text-anchor="middle" font-size="11.11" fill="#fff" font-family="DejaVu Sans, Liberation Sans, sans-serif">FAN</text>
<text x="681.64" y="750.10" text-anchor="middle" font-size="11.11" fill="#fff" font-family="DejaVu Sans, Liberation Sans, sans-serif">PER</text>
<text x="1049.04" y="750.10" text-anchor="middle" font-size="11.11" fill="#fff" font-family="DejaVu Sans, Liberation Sans, sans-serif">CTA</text>
<text x="1264.37" y="750.10" text-anchor="middle" font-size="11.11" fill="#fff" font-family="DejaVu Sans, Liberation Sans, sans-serif">HYD</text>
<text x="1481.18" y="750.10" text-anchor="middle" font-size="11.11" fill="#fff" font-family="DejaVu Sans, Liberation Sans, sans-serif">XUM</text>
<text x="439.82" y="733.60" text-anchor="middle" font-size="11.11" fill="#fff" font-family="DejaVu Sans, Liberation Sans, sans-serif">COR</text>
<text x="657.12" y="733.60" text-anchor="middle" font-size="11.11" fill="#fff" font-family="DejaVu Sans, Liberation Sans, sans-serif">SDA</text>
<text x="1049.53" y="733.60" text-anchor="middle" font-size="11.11" fill="#fff" font-family="DejaVu Sans, Liberation Sans, sans-serif">LMI</text>
<text x="1166.27" y="733.60" text-anchor="middle" font-size="11.11" fill="#fff" font-family="DejaVu Sans, Liberation Sans, sans-serif">LEO</text>
<text x="1274.92" y="733.60" text-anchor="middle" font-size="11.11" fill="#fff" font-family="DejaVu Sans, Liberation Sans, sans-serif">EHY</text>
<text x="1499.58" y="733.60" text-anchor="middle" font-size="11.11" fill="#fff" font-family="DejaVu Sans, Liberation Sans, sans-serif">ECV</text>
<text x="603.16" y="717.60" text-anchor="middle" font-size="11.11" fill="#fff" font-family="DejaVu Sans, Liberation Sans, sans-serif">JXA</text>
<text x="715.00" y="717.60" text-anchor="middle" font-size="11.11" fill="#fff" font-family="DejaVu Sans, Liberation Sans, sans-serif">KCG</text>
<text x="1157.44" y="717.60" text-anchor="middle" font-size="11.11" fill="#fff" font-family="DejaVu Sans, Liberation Sans, sans-serif">AND</text>
<text x="1275.17" y="717.60" text-anchor="middle" font-size="11.11" fill="#fff" font-family="DejaVu Sans, Liberation Sans, sans-serif">DAD</text>
<text x="666.44" y="700.60" text-anchor="middle" font-size="11.11" fill="#fff" font-family="DejaVu Sans, Liberation Sans, sans-serif">ERI</text>
<text x="1108.88" y="700.60" text-anchor="middle" font-size="11.11" fill="#fff" font-family="DejaVu Sans, Liberation Sans, sans-serif">SLD</text>
<text x="1211.40" y="700.60" text-anchor="middle" font-size="11.11" fill="#fff" font-family="DejaVu Sans, Liberation Sans, sans-serif">ORS</text>
<text x="1299.69" y="700.60" text-anchor="middle" font-size="11.11" fill="#fff" font-family="DejaVu Sans, Liberation Sans, sans-serif">GEM</text>
<text x="1123.11" y="684.60" text-anchor="middle" font-size="11.11" fill="#fff" font-family="DejaVu Sans, Liberation Sans, sans-serif">KUM</text>
<rect x="19.45" y="641.50" width="1765.85" height="201.00" fill="none" stroke="#fff" stroke-width="1.111"/>
<path d="M19.45 842.50v4.86" stroke="#fff" stroke-width="1.111"/>
<text x="19.45" y="861.6" text-anchor="middle" font-size="13.89" fill="#fff" font-family="DejaVu Sans, Liberation Sans, sans-serif">0</text>
<path d="M264.71 842.50v4.86" stroke="#fff" stroke-width="1.111"/>
<text x="264.71" y="861.6" text-anchor="middle" font-size="13.89" fill="#fff" font-family="DejaVu Sans, Liberation Sans, sans-serif">50</text>
<path d="M509.96 842.50v4.86" stroke="#fff" stroke-width="1.111"/>
<text x="509.96" y="861.6" text-anchor="middle" font-size="13.89" fill="#fff" font-family="DejaVu Sans, Liberation Sans, sans-serif">100</text>
<path d="M755.22 842.50v4.86" stroke="#fff" stroke-width="1.111"/>
<text x="755.22" y="861.6" text-anchor="middle" font-size="13.89" fill="#fff" font-family="DejaVu Sans, Liberation Sans, sans-serif">150</text>
<path d="M1000.48 842.50v4.86" stroke="#fff" stroke-width="1.111"/>
<text x="1000.48" y="861.6" text-anchor="middle" font-size="13.89" fill="#fff" font-family="DejaVu Sans, Liberation Sans, sans-serif">200</text>
<path d="M1245.73 842.50v4.86" stroke="#fff" stroke-width="1.111"/>
<text x="1245.73" y="861.6" text-anchor="middle" font-size="13.89" fill="#fff" font-family="DejaVu Sans, Liberation Sans, sans-serif">250</text>
<path d="M1490.99 842.50v4.86" stroke="#fff" stroke-width="1.111"/>
<text x="1490.99" y="861.6" text-anchor="middle" font-size="13.89" fill="#fff" font-family="DejaVu Sans, Liberation Sans, sans-serif">300</text>
<path d="M1736.25 842.50v4.86" stroke="#fff" stroke-width="1.111"/>
<text x="1736.25" y="861.6" text-anchor="middle" font-size="13.89" fill="#fff" font-family="DejaVu Sans, Liberation Sans, sans-serif">350</text>
<text x="902.3" y="881.5" text-anchor="middle" font-size="13.89" fill="#fff" font-family="DejaVu Sans, Liberation Sans, sans-serif">Solar longitude (deg)</text>
</svg>
</body></html>
